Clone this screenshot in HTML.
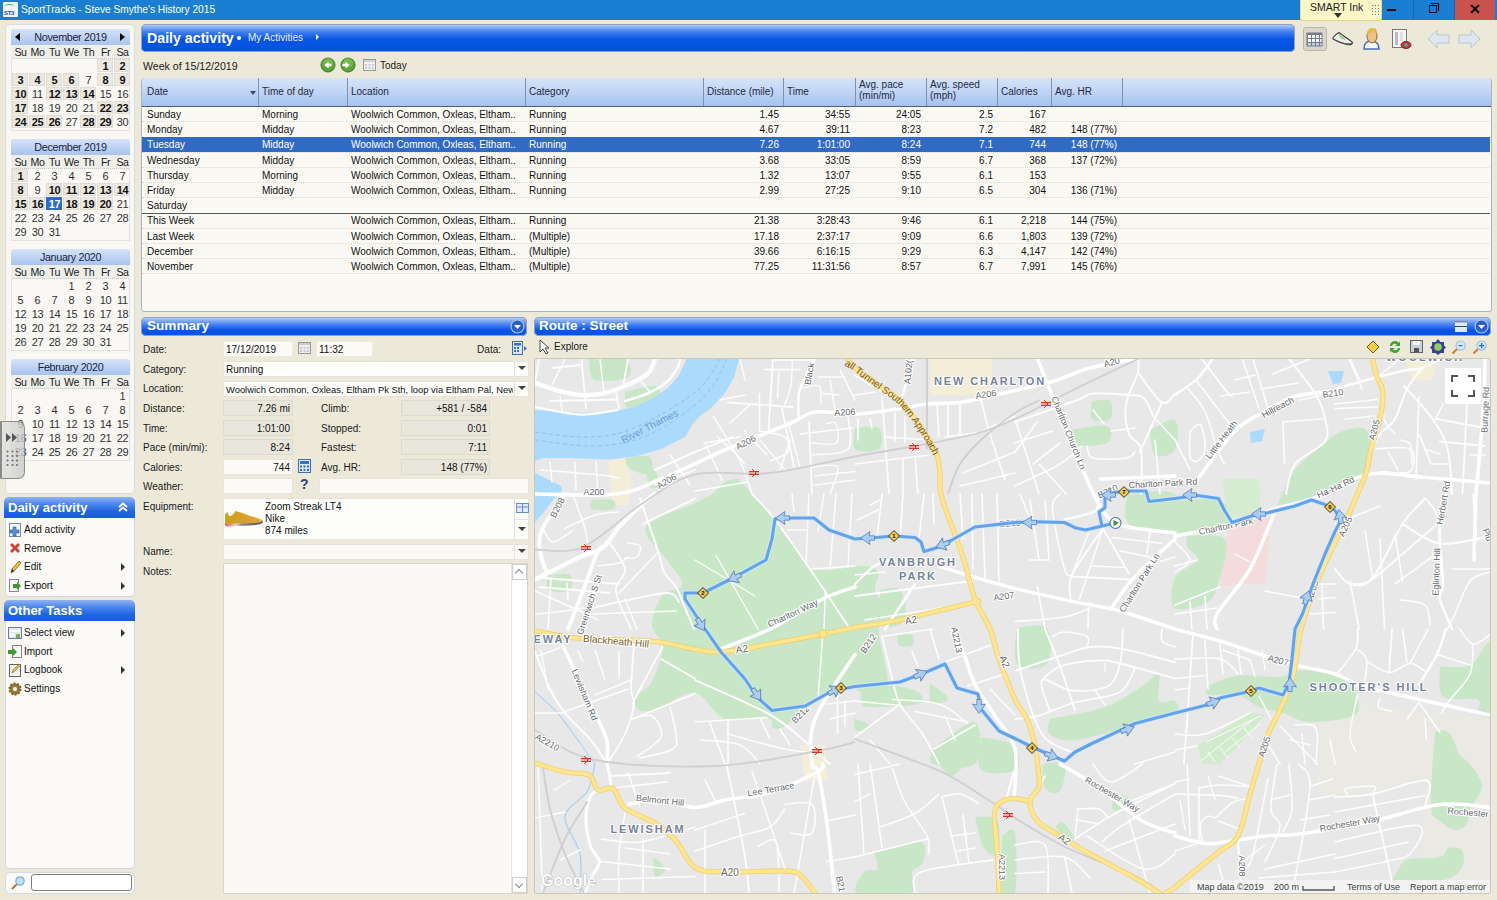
<!DOCTYPE html>
<html><head><meta charset="utf-8"><style>
html,body{margin:0;padding:0}
body{width:1497px;height:900px;overflow:hidden;position:relative;background:#ece9d9;font-family:"Liberation Sans",sans-serif;font-size:10px}
body div{position:absolute}
.t{white-space:nowrap}
svg{display:block}
</style></head><body>
<div style="left:0px;top:0px;width:1497px;height:20px;background:#1a7fd2"></div>
<div style="left:3px;top:2px;width:15px;height:15px;background:#eef3f8;border-radius:1px"><div style="position:absolute;left:1px;top:8px;font:bold 6px 'Liberation Sans';color:#1f4e9c;letter-spacing:-0.3px">ST3</div><div style="position:absolute;left:2px;top:2px;width:9px;height:4px;border-top:1px solid #4a8;border-radius:50% 50% 0 0"></div></div>
<div class="t" style="left:21px;top:3px;color:#fff;font-size:10.2px;line-height:13px">SportTracks - Steve Smythe's History 2015</div>
<div style="left:1300px;top:0px;width:82px;height:21px;background:#fdf6c6;border:1px solid #e6d98a;border-top:none;border-radius:0 0 3px 3px;box-sizing:border-box"><div style="position:absolute;left:9px;top:1px;font-size:10.5px;color:#222;line-height:13px">SMART Ink</div><div style="position:absolute;left:33px;top:13px;width:0;height:0;border-left:4px solid transparent;border-right:4px solid transparent;border-top:5px solid #333"></div><svg width="8" height="10" style="position:absolute;left:71px;top:5px"><g fill="#777"><rect x="0" y="0" width="1" height="1"/><rect x="3" y="0" width="1" height="1"/><rect x="6" y="0" width="1" height="1"/><rect x="0" y="3" width="1" height="1"/><rect x="3" y="3" width="1" height="1"/><rect x="6" y="3" width="1" height="1"/><rect x="0" y="6" width="1" height="1"/><rect x="3" y="6" width="1" height="1"/><rect x="6" y="6" width="1" height="1"/><rect x="0" y="9" width="1" height="1"/><rect x="3" y="9" width="1" height="1"/><rect x="6" y="9" width="1" height="1"/></g></svg></div>
<div style="left:1387px;top:9px;width:9px;height:2px;background:#000"></div>
<div style="left:1413px;top:0px;width:1px;height:20px;background:#1668b0"></div>
<div style="left:1429px;top:5px;width:8px;height:8px;border:1px solid #000;box-sizing:border-box;background:#1a7fd2"></div>
<div style="left:1431px;top:3px;width:8px;height:8px;border:1px solid #000;border-left:none;border-bottom:none;box-sizing:border-box"></div>
<div style="left:1454px;top:0px;width:1px;height:20px;background:#1668b0"></div>
<div style="left:1455px;top:0px;width:40px;height:20px;background:#c9524d"></div>
<div class="t" style="left:1469px;top:1px;font:bold 14px 'Liberation Sans';color:#000;line-height:16px">&#x2715;</div>
<div style="left:5px;top:24px;width:130px;height:470px;background:#f8f7f2;border:1px solid #d7dce6;border-radius:4px;box-sizing:border-box"></div>
<div style="left:11px;top:29px;width:119px;height:16px;background:linear-gradient(#d6e3f8,#a8c3ef);border-radius:3px 3px 0 0"></div>
<div class="t" style="left:11px;top:31px;width:119px;text-align:center;color:#1b1f3a;font-size:10.8px;line-height:12px;letter-spacing:-0.35px">November 2019</div>
<div style="left:15px;top:33px;width:0px;height:0px;border-top:4px solid transparent;border-bottom:4px solid transparent;border-right:5px solid #000"></div>
<div style="left:120px;top:33px;width:0px;height:0px;border-top:4px solid transparent;border-bottom:4px solid transparent;border-left:5px solid #000"></div>
<div style="left:11px;top:45px;width:119px;height:86px;background:#f9f8f4;border:1px solid #e2e2e0;border-top:none;box-sizing:border-box"></div>
<div style="left:11px;top:45px;width:119px;height:14px;background:#eeeeea"></div>
<div style="left:12px;top:58px;width:117px;height:1px;border-top:1px dotted #c8c8c8"></div>
<div class="t" style="left:12px;top:46px;width:17px;text-align:center;color:#222;font-size:10.6px;line-height:12px;letter-spacing:-0.4px">Su</div>
<div class="t" style="left:29px;top:46px;width:17px;text-align:center;color:#222;font-size:10.6px;line-height:12px;letter-spacing:-0.4px">Mo</div>
<div class="t" style="left:46px;top:46px;width:17px;text-align:center;color:#222;font-size:10.6px;line-height:12px;letter-spacing:-0.4px">Tu</div>
<div class="t" style="left:63px;top:46px;width:17px;text-align:center;color:#222;font-size:10.6px;line-height:12px;letter-spacing:-0.4px">We</div>
<div class="t" style="left:80px;top:46px;width:17px;text-align:center;color:#222;font-size:10.6px;line-height:12px;letter-spacing:-0.4px">Th</div>
<div class="t" style="left:97px;top:46px;width:17px;text-align:center;color:#222;font-size:10.6px;line-height:12px;letter-spacing:-0.4px">Fr</div>
<div class="t" style="left:114px;top:46px;width:17px;text-align:center;color:#222;font-size:10.6px;line-height:12px;letter-spacing:-0.4px">Sa</div>
<div style="left:97px;top:59px;width:16px;height:13px;background:#ebe9df;border:1px solid #e0ded3;box-sizing:border-box"></div>
<div class="t" style="left:97px;top:59px;width:17px;text-align:center;font-size:11px;line-height:13px;top:60px;letter-spacing:-0.3px;color:#111;font-weight:bold">1</div>
<div style="left:114px;top:59px;width:16px;height:13px;background:#ebe9df;border:1px solid #e0ded3;box-sizing:border-box"></div>
<div class="t" style="left:114px;top:59px;width:17px;text-align:center;font-size:11px;line-height:13px;top:60px;letter-spacing:-0.3px;color:#111;font-weight:bold">2</div>
<div style="left:12px;top:73px;width:16px;height:13px;background:#ebe9df;border:1px solid #e0ded3;box-sizing:border-box"></div>
<div class="t" style="left:12px;top:73px;width:17px;text-align:center;font-size:11px;line-height:13px;top:74px;letter-spacing:-0.3px;color:#111;font-weight:bold">3</div>
<div style="left:29px;top:73px;width:16px;height:13px;background:#ebe9df;border:1px solid #e0ded3;box-sizing:border-box"></div>
<div class="t" style="left:29px;top:73px;width:17px;text-align:center;font-size:11px;line-height:13px;top:74px;letter-spacing:-0.3px;color:#111;font-weight:bold">4</div>
<div style="left:46px;top:73px;width:16px;height:13px;background:#ebe9df;border:1px solid #e0ded3;box-sizing:border-box"></div>
<div class="t" style="left:46px;top:73px;width:17px;text-align:center;font-size:11px;line-height:13px;top:74px;letter-spacing:-0.3px;color:#111;font-weight:bold">5</div>
<div style="left:63px;top:73px;width:16px;height:13px;background:#ebe9df;border:1px solid #e0ded3;box-sizing:border-box"></div>
<div class="t" style="left:63px;top:73px;width:17px;text-align:center;font-size:11px;line-height:13px;top:74px;letter-spacing:-0.3px;color:#111;font-weight:bold">6</div>
<div class="t" style="left:80px;top:73px;width:17px;text-align:center;font-size:11px;line-height:13px;top:74px;letter-spacing:-0.3px;color:#333">7</div>
<div style="left:97px;top:73px;width:16px;height:13px;background:#ebe9df;border:1px solid #e0ded3;box-sizing:border-box"></div>
<div class="t" style="left:97px;top:73px;width:17px;text-align:center;font-size:11px;line-height:13px;top:74px;letter-spacing:-0.3px;color:#111;font-weight:bold">8</div>
<div style="left:114px;top:73px;width:16px;height:13px;background:#ebe9df;border:1px solid #e0ded3;box-sizing:border-box"></div>
<div class="t" style="left:114px;top:73px;width:17px;text-align:center;font-size:11px;line-height:13px;top:74px;letter-spacing:-0.3px;color:#111;font-weight:bold">9</div>
<div style="left:12px;top:87px;width:16px;height:13px;background:#ebe9df;border:1px solid #e0ded3;box-sizing:border-box"></div>
<div class="t" style="left:12px;top:87px;width:17px;text-align:center;font-size:11px;line-height:13px;top:88px;letter-spacing:-0.3px;color:#111;font-weight:bold">10</div>
<div class="t" style="left:29px;top:87px;width:17px;text-align:center;font-size:11px;line-height:13px;top:88px;letter-spacing:-0.3px;color:#333">11</div>
<div style="left:46px;top:87px;width:16px;height:13px;background:#ebe9df;border:1px solid #e0ded3;box-sizing:border-box"></div>
<div class="t" style="left:46px;top:87px;width:17px;text-align:center;font-size:11px;line-height:13px;top:88px;letter-spacing:-0.3px;color:#111;font-weight:bold">12</div>
<div style="left:63px;top:87px;width:16px;height:13px;background:#ebe9df;border:1px solid #e0ded3;box-sizing:border-box"></div>
<div class="t" style="left:63px;top:87px;width:17px;text-align:center;font-size:11px;line-height:13px;top:88px;letter-spacing:-0.3px;color:#111;font-weight:bold">13</div>
<div style="left:80px;top:87px;width:16px;height:13px;background:#ebe9df;border:1px solid #e0ded3;box-sizing:border-box"></div>
<div class="t" style="left:80px;top:87px;width:17px;text-align:center;font-size:11px;line-height:13px;top:88px;letter-spacing:-0.3px;color:#111;font-weight:bold">14</div>
<div class="t" style="left:97px;top:87px;width:17px;text-align:center;font-size:11px;line-height:13px;top:88px;letter-spacing:-0.3px;color:#333">15</div>
<div class="t" style="left:114px;top:87px;width:17px;text-align:center;font-size:11px;line-height:13px;top:88px;letter-spacing:-0.3px;color:#333">16</div>
<div style="left:12px;top:101px;width:16px;height:13px;background:#ebe9df;border:1px solid #e0ded3;box-sizing:border-box"></div>
<div class="t" style="left:12px;top:101px;width:17px;text-align:center;font-size:11px;line-height:13px;top:102px;letter-spacing:-0.3px;color:#111;font-weight:bold">17</div>
<div class="t" style="left:29px;top:101px;width:17px;text-align:center;font-size:11px;line-height:13px;top:102px;letter-spacing:-0.3px;color:#333">18</div>
<div class="t" style="left:46px;top:101px;width:17px;text-align:center;font-size:11px;line-height:13px;top:102px;letter-spacing:-0.3px;color:#333">19</div>
<div class="t" style="left:63px;top:101px;width:17px;text-align:center;font-size:11px;line-height:13px;top:102px;letter-spacing:-0.3px;color:#333">20</div>
<div class="t" style="left:80px;top:101px;width:17px;text-align:center;font-size:11px;line-height:13px;top:102px;letter-spacing:-0.3px;color:#333">21</div>
<div style="left:97px;top:101px;width:16px;height:13px;background:#ebe9df;border:1px solid #e0ded3;box-sizing:border-box"></div>
<div class="t" style="left:97px;top:101px;width:17px;text-align:center;font-size:11px;line-height:13px;top:102px;letter-spacing:-0.3px;color:#111;font-weight:bold">22</div>
<div style="left:114px;top:101px;width:16px;height:13px;background:#ebe9df;border:1px solid #e0ded3;box-sizing:border-box"></div>
<div class="t" style="left:114px;top:101px;width:17px;text-align:center;font-size:11px;line-height:13px;top:102px;letter-spacing:-0.3px;color:#111;font-weight:bold">23</div>
<div style="left:12px;top:115px;width:16px;height:13px;background:#ebe9df;border:1px solid #e0ded3;box-sizing:border-box"></div>
<div class="t" style="left:12px;top:115px;width:17px;text-align:center;font-size:11px;line-height:13px;top:116px;letter-spacing:-0.3px;color:#111;font-weight:bold">24</div>
<div style="left:29px;top:115px;width:16px;height:13px;background:#ebe9df;border:1px solid #e0ded3;box-sizing:border-box"></div>
<div class="t" style="left:29px;top:115px;width:17px;text-align:center;font-size:11px;line-height:13px;top:116px;letter-spacing:-0.3px;color:#111;font-weight:bold">25</div>
<div style="left:46px;top:115px;width:16px;height:13px;background:#ebe9df;border:1px solid #e0ded3;box-sizing:border-box"></div>
<div class="t" style="left:46px;top:115px;width:17px;text-align:center;font-size:11px;line-height:13px;top:116px;letter-spacing:-0.3px;color:#111;font-weight:bold">26</div>
<div class="t" style="left:63px;top:115px;width:17px;text-align:center;font-size:11px;line-height:13px;top:116px;letter-spacing:-0.3px;color:#333">27</div>
<div style="left:80px;top:115px;width:16px;height:13px;background:#ebe9df;border:1px solid #e0ded3;box-sizing:border-box"></div>
<div class="t" style="left:80px;top:115px;width:17px;text-align:center;font-size:11px;line-height:13px;top:116px;letter-spacing:-0.3px;color:#111;font-weight:bold">28</div>
<div style="left:97px;top:115px;width:16px;height:13px;background:#ebe9df;border:1px solid #e0ded3;box-sizing:border-box"></div>
<div class="t" style="left:97px;top:115px;width:17px;text-align:center;font-size:11px;line-height:13px;top:116px;letter-spacing:-0.3px;color:#111;font-weight:bold">29</div>
<div class="t" style="left:114px;top:115px;width:17px;text-align:center;font-size:11px;line-height:13px;top:116px;letter-spacing:-0.3px;color:#333">30</div>
<div style="left:11px;top:139px;width:119px;height:16px;background:linear-gradient(#d6e3f8,#a8c3ef);border-radius:3px 3px 0 0"></div>
<div class="t" style="left:11px;top:141px;width:119px;text-align:center;color:#1b1f3a;font-size:10.8px;line-height:12px;letter-spacing:-0.35px">December 2019</div>
<div style="left:11px;top:155px;width:119px;height:86px;background:#f9f8f4;border:1px solid #e2e2e0;border-top:none;box-sizing:border-box"></div>
<div style="left:11px;top:155px;width:119px;height:14px;background:#eeeeea"></div>
<div style="left:12px;top:168px;width:117px;height:1px;border-top:1px dotted #c8c8c8"></div>
<div class="t" style="left:12px;top:156px;width:17px;text-align:center;color:#222;font-size:10.6px;line-height:12px;letter-spacing:-0.4px">Su</div>
<div class="t" style="left:29px;top:156px;width:17px;text-align:center;color:#222;font-size:10.6px;line-height:12px;letter-spacing:-0.4px">Mo</div>
<div class="t" style="left:46px;top:156px;width:17px;text-align:center;color:#222;font-size:10.6px;line-height:12px;letter-spacing:-0.4px">Tu</div>
<div class="t" style="left:63px;top:156px;width:17px;text-align:center;color:#222;font-size:10.6px;line-height:12px;letter-spacing:-0.4px">We</div>
<div class="t" style="left:80px;top:156px;width:17px;text-align:center;color:#222;font-size:10.6px;line-height:12px;letter-spacing:-0.4px">Th</div>
<div class="t" style="left:97px;top:156px;width:17px;text-align:center;color:#222;font-size:10.6px;line-height:12px;letter-spacing:-0.4px">Fr</div>
<div class="t" style="left:114px;top:156px;width:17px;text-align:center;color:#222;font-size:10.6px;line-height:12px;letter-spacing:-0.4px">Sa</div>
<div style="left:12px;top:169px;width:16px;height:13px;background:#ebe9df;border:1px solid #e0ded3;box-sizing:border-box"></div>
<div class="t" style="left:12px;top:169px;width:17px;text-align:center;font-size:11px;line-height:13px;top:170px;letter-spacing:-0.3px;color:#111;font-weight:bold">1</div>
<div class="t" style="left:29px;top:169px;width:17px;text-align:center;font-size:11px;line-height:13px;top:170px;letter-spacing:-0.3px;color:#333">2</div>
<div class="t" style="left:46px;top:169px;width:17px;text-align:center;font-size:11px;line-height:13px;top:170px;letter-spacing:-0.3px;color:#333">3</div>
<div class="t" style="left:63px;top:169px;width:17px;text-align:center;font-size:11px;line-height:13px;top:170px;letter-spacing:-0.3px;color:#333">4</div>
<div class="t" style="left:80px;top:169px;width:17px;text-align:center;font-size:11px;line-height:13px;top:170px;letter-spacing:-0.3px;color:#333">5</div>
<div class="t" style="left:97px;top:169px;width:17px;text-align:center;font-size:11px;line-height:13px;top:170px;letter-spacing:-0.3px;color:#333">6</div>
<div class="t" style="left:114px;top:169px;width:17px;text-align:center;font-size:11px;line-height:13px;top:170px;letter-spacing:-0.3px;color:#333">7</div>
<div style="left:12px;top:183px;width:16px;height:13px;background:#ebe9df;border:1px solid #e0ded3;box-sizing:border-box"></div>
<div class="t" style="left:12px;top:183px;width:17px;text-align:center;font-size:11px;line-height:13px;top:184px;letter-spacing:-0.3px;color:#111;font-weight:bold">8</div>
<div class="t" style="left:29px;top:183px;width:17px;text-align:center;font-size:11px;line-height:13px;top:184px;letter-spacing:-0.3px;color:#333">9</div>
<div style="left:46px;top:183px;width:16px;height:13px;background:#ebe9df;border:1px solid #e0ded3;box-sizing:border-box"></div>
<div class="t" style="left:46px;top:183px;width:17px;text-align:center;font-size:11px;line-height:13px;top:184px;letter-spacing:-0.3px;color:#111;font-weight:bold">10</div>
<div style="left:63px;top:183px;width:16px;height:13px;background:#ebe9df;border:1px solid #e0ded3;box-sizing:border-box"></div>
<div class="t" style="left:63px;top:183px;width:17px;text-align:center;font-size:11px;line-height:13px;top:184px;letter-spacing:-0.3px;color:#111;font-weight:bold">11</div>
<div style="left:80px;top:183px;width:16px;height:13px;background:#ebe9df;border:1px solid #e0ded3;box-sizing:border-box"></div>
<div class="t" style="left:80px;top:183px;width:17px;text-align:center;font-size:11px;line-height:13px;top:184px;letter-spacing:-0.3px;color:#111;font-weight:bold">12</div>
<div style="left:97px;top:183px;width:16px;height:13px;background:#ebe9df;border:1px solid #e0ded3;box-sizing:border-box"></div>
<div class="t" style="left:97px;top:183px;width:17px;text-align:center;font-size:11px;line-height:13px;top:184px;letter-spacing:-0.3px;color:#111;font-weight:bold">13</div>
<div style="left:114px;top:183px;width:16px;height:13px;background:#ebe9df;border:1px solid #e0ded3;box-sizing:border-box"></div>
<div class="t" style="left:114px;top:183px;width:17px;text-align:center;font-size:11px;line-height:13px;top:184px;letter-spacing:-0.3px;color:#111;font-weight:bold">14</div>
<div style="left:12px;top:197px;width:16px;height:13px;background:#ebe9df;border:1px solid #e0ded3;box-sizing:border-box"></div>
<div class="t" style="left:12px;top:197px;width:17px;text-align:center;font-size:11px;line-height:13px;top:198px;letter-spacing:-0.3px;color:#111;font-weight:bold">15</div>
<div style="left:29px;top:197px;width:16px;height:13px;background:#ebe9df;border:1px solid #e0ded3;box-sizing:border-box"></div>
<div class="t" style="left:29px;top:197px;width:17px;text-align:center;font-size:11px;line-height:13px;top:198px;letter-spacing:-0.3px;color:#111;font-weight:bold">16</div>
<div style="left:46px;top:197px;width:16px;height:13px;background:#3169c6"></div>
<div class="t" style="left:46px;top:197px;width:17px;text-align:center;font-size:11px;line-height:13px;top:198px;letter-spacing:-0.3px;color:#fff;font-weight:bold">17</div>
<div style="left:63px;top:197px;width:16px;height:13px;background:#ebe9df;border:1px solid #e0ded3;box-sizing:border-box"></div>
<div class="t" style="left:63px;top:197px;width:17px;text-align:center;font-size:11px;line-height:13px;top:198px;letter-spacing:-0.3px;color:#111;font-weight:bold">18</div>
<div style="left:80px;top:197px;width:16px;height:13px;background:#ebe9df;border:1px solid #e0ded3;box-sizing:border-box"></div>
<div class="t" style="left:80px;top:197px;width:17px;text-align:center;font-size:11px;line-height:13px;top:198px;letter-spacing:-0.3px;color:#111;font-weight:bold">19</div>
<div style="left:97px;top:197px;width:16px;height:13px;background:#ebe9df;border:1px solid #e0ded3;box-sizing:border-box"></div>
<div class="t" style="left:97px;top:197px;width:17px;text-align:center;font-size:11px;line-height:13px;top:198px;letter-spacing:-0.3px;color:#111;font-weight:bold">20</div>
<div class="t" style="left:114px;top:197px;width:17px;text-align:center;font-size:11px;line-height:13px;top:198px;letter-spacing:-0.3px;color:#333">21</div>
<div class="t" style="left:12px;top:211px;width:17px;text-align:center;font-size:11px;line-height:13px;top:212px;letter-spacing:-0.3px;color:#333">22</div>
<div class="t" style="left:29px;top:211px;width:17px;text-align:center;font-size:11px;line-height:13px;top:212px;letter-spacing:-0.3px;color:#333">23</div>
<div class="t" style="left:46px;top:211px;width:17px;text-align:center;font-size:11px;line-height:13px;top:212px;letter-spacing:-0.3px;color:#333">24</div>
<div class="t" style="left:63px;top:211px;width:17px;text-align:center;font-size:11px;line-height:13px;top:212px;letter-spacing:-0.3px;color:#333">25</div>
<div class="t" style="left:80px;top:211px;width:17px;text-align:center;font-size:11px;line-height:13px;top:212px;letter-spacing:-0.3px;color:#333">26</div>
<div class="t" style="left:97px;top:211px;width:17px;text-align:center;font-size:11px;line-height:13px;top:212px;letter-spacing:-0.3px;color:#333">27</div>
<div class="t" style="left:114px;top:211px;width:17px;text-align:center;font-size:11px;line-height:13px;top:212px;letter-spacing:-0.3px;color:#333">28</div>
<div class="t" style="left:12px;top:225px;width:17px;text-align:center;font-size:11px;line-height:13px;top:226px;letter-spacing:-0.3px;color:#333">29</div>
<div class="t" style="left:29px;top:225px;width:17px;text-align:center;font-size:11px;line-height:13px;top:226px;letter-spacing:-0.3px;color:#333">30</div>
<div class="t" style="left:46px;top:225px;width:17px;text-align:center;font-size:11px;line-height:13px;top:226px;letter-spacing:-0.3px;color:#333">31</div>
<div style="left:11px;top:249px;width:119px;height:16px;background:linear-gradient(#d6e3f8,#a8c3ef);border-radius:3px 3px 0 0"></div>
<div class="t" style="left:11px;top:251px;width:119px;text-align:center;color:#1b1f3a;font-size:10.8px;line-height:12px;letter-spacing:-0.35px">January 2020</div>
<div style="left:11px;top:265px;width:119px;height:86px;background:#f9f8f4;border:1px solid #e2e2e0;border-top:none;box-sizing:border-box"></div>
<div style="left:11px;top:265px;width:119px;height:14px;background:#eeeeea"></div>
<div style="left:12px;top:278px;width:117px;height:1px;border-top:1px dotted #c8c8c8"></div>
<div class="t" style="left:12px;top:266px;width:17px;text-align:center;color:#222;font-size:10.6px;line-height:12px;letter-spacing:-0.4px">Su</div>
<div class="t" style="left:29px;top:266px;width:17px;text-align:center;color:#222;font-size:10.6px;line-height:12px;letter-spacing:-0.4px">Mo</div>
<div class="t" style="left:46px;top:266px;width:17px;text-align:center;color:#222;font-size:10.6px;line-height:12px;letter-spacing:-0.4px">Tu</div>
<div class="t" style="left:63px;top:266px;width:17px;text-align:center;color:#222;font-size:10.6px;line-height:12px;letter-spacing:-0.4px">We</div>
<div class="t" style="left:80px;top:266px;width:17px;text-align:center;color:#222;font-size:10.6px;line-height:12px;letter-spacing:-0.4px">Th</div>
<div class="t" style="left:97px;top:266px;width:17px;text-align:center;color:#222;font-size:10.6px;line-height:12px;letter-spacing:-0.4px">Fr</div>
<div class="t" style="left:114px;top:266px;width:17px;text-align:center;color:#222;font-size:10.6px;line-height:12px;letter-spacing:-0.4px">Sa</div>
<div class="t" style="left:63px;top:279px;width:17px;text-align:center;font-size:11px;line-height:13px;top:280px;letter-spacing:-0.3px;color:#333">1</div>
<div class="t" style="left:80px;top:279px;width:17px;text-align:center;font-size:11px;line-height:13px;top:280px;letter-spacing:-0.3px;color:#333">2</div>
<div class="t" style="left:97px;top:279px;width:17px;text-align:center;font-size:11px;line-height:13px;top:280px;letter-spacing:-0.3px;color:#333">3</div>
<div class="t" style="left:114px;top:279px;width:17px;text-align:center;font-size:11px;line-height:13px;top:280px;letter-spacing:-0.3px;color:#333">4</div>
<div class="t" style="left:12px;top:293px;width:17px;text-align:center;font-size:11px;line-height:13px;top:294px;letter-spacing:-0.3px;color:#333">5</div>
<div class="t" style="left:29px;top:293px;width:17px;text-align:center;font-size:11px;line-height:13px;top:294px;letter-spacing:-0.3px;color:#333">6</div>
<div class="t" style="left:46px;top:293px;width:17px;text-align:center;font-size:11px;line-height:13px;top:294px;letter-spacing:-0.3px;color:#333">7</div>
<div class="t" style="left:63px;top:293px;width:17px;text-align:center;font-size:11px;line-height:13px;top:294px;letter-spacing:-0.3px;color:#333">8</div>
<div class="t" style="left:80px;top:293px;width:17px;text-align:center;font-size:11px;line-height:13px;top:294px;letter-spacing:-0.3px;color:#333">9</div>
<div class="t" style="left:97px;top:293px;width:17px;text-align:center;font-size:11px;line-height:13px;top:294px;letter-spacing:-0.3px;color:#333">10</div>
<div class="t" style="left:114px;top:293px;width:17px;text-align:center;font-size:11px;line-height:13px;top:294px;letter-spacing:-0.3px;color:#333">11</div>
<div class="t" style="left:12px;top:307px;width:17px;text-align:center;font-size:11px;line-height:13px;top:308px;letter-spacing:-0.3px;color:#333">12</div>
<div class="t" style="left:29px;top:307px;width:17px;text-align:center;font-size:11px;line-height:13px;top:308px;letter-spacing:-0.3px;color:#333">13</div>
<div class="t" style="left:46px;top:307px;width:17px;text-align:center;font-size:11px;line-height:13px;top:308px;letter-spacing:-0.3px;color:#333">14</div>
<div class="t" style="left:63px;top:307px;width:17px;text-align:center;font-size:11px;line-height:13px;top:308px;letter-spacing:-0.3px;color:#333">15</div>
<div class="t" style="left:80px;top:307px;width:17px;text-align:center;font-size:11px;line-height:13px;top:308px;letter-spacing:-0.3px;color:#333">16</div>
<div class="t" style="left:97px;top:307px;width:17px;text-align:center;font-size:11px;line-height:13px;top:308px;letter-spacing:-0.3px;color:#333">17</div>
<div class="t" style="left:114px;top:307px;width:17px;text-align:center;font-size:11px;line-height:13px;top:308px;letter-spacing:-0.3px;color:#333">18</div>
<div class="t" style="left:12px;top:321px;width:17px;text-align:center;font-size:11px;line-height:13px;top:322px;letter-spacing:-0.3px;color:#333">19</div>
<div class="t" style="left:29px;top:321px;width:17px;text-align:center;font-size:11px;line-height:13px;top:322px;letter-spacing:-0.3px;color:#333">20</div>
<div class="t" style="left:46px;top:321px;width:17px;text-align:center;font-size:11px;line-height:13px;top:322px;letter-spacing:-0.3px;color:#333">21</div>
<div class="t" style="left:63px;top:321px;width:17px;text-align:center;font-size:11px;line-height:13px;top:322px;letter-spacing:-0.3px;color:#333">22</div>
<div class="t" style="left:80px;top:321px;width:17px;text-align:center;font-size:11px;line-height:13px;top:322px;letter-spacing:-0.3px;color:#333">23</div>
<div class="t" style="left:97px;top:321px;width:17px;text-align:center;font-size:11px;line-height:13px;top:322px;letter-spacing:-0.3px;color:#333">24</div>
<div class="t" style="left:114px;top:321px;width:17px;text-align:center;font-size:11px;line-height:13px;top:322px;letter-spacing:-0.3px;color:#333">25</div>
<div class="t" style="left:12px;top:335px;width:17px;text-align:center;font-size:11px;line-height:13px;top:336px;letter-spacing:-0.3px;color:#333">26</div>
<div class="t" style="left:29px;top:335px;width:17px;text-align:center;font-size:11px;line-height:13px;top:336px;letter-spacing:-0.3px;color:#333">27</div>
<div class="t" style="left:46px;top:335px;width:17px;text-align:center;font-size:11px;line-height:13px;top:336px;letter-spacing:-0.3px;color:#333">28</div>
<div class="t" style="left:63px;top:335px;width:17px;text-align:center;font-size:11px;line-height:13px;top:336px;letter-spacing:-0.3px;color:#333">29</div>
<div class="t" style="left:80px;top:335px;width:17px;text-align:center;font-size:11px;line-height:13px;top:336px;letter-spacing:-0.3px;color:#333">30</div>
<div class="t" style="left:97px;top:335px;width:17px;text-align:center;font-size:11px;line-height:13px;top:336px;letter-spacing:-0.3px;color:#333">31</div>
<div style="left:11px;top:359px;width:119px;height:16px;background:linear-gradient(#d6e3f8,#a8c3ef);border-radius:3px 3px 0 0"></div>
<div class="t" style="left:11px;top:361px;width:119px;text-align:center;color:#1b1f3a;font-size:10.8px;line-height:12px;letter-spacing:-0.35px">February 2020</div>
<div style="left:11px;top:375px;width:119px;height:86px;background:#f9f8f4;border:1px solid #e2e2e0;border-top:none;box-sizing:border-box"></div>
<div style="left:11px;top:375px;width:119px;height:14px;background:#eeeeea"></div>
<div style="left:12px;top:388px;width:117px;height:1px;border-top:1px dotted #c8c8c8"></div>
<div class="t" style="left:12px;top:376px;width:17px;text-align:center;color:#222;font-size:10.6px;line-height:12px;letter-spacing:-0.4px">Su</div>
<div class="t" style="left:29px;top:376px;width:17px;text-align:center;color:#222;font-size:10.6px;line-height:12px;letter-spacing:-0.4px">Mo</div>
<div class="t" style="left:46px;top:376px;width:17px;text-align:center;color:#222;font-size:10.6px;line-height:12px;letter-spacing:-0.4px">Tu</div>
<div class="t" style="left:63px;top:376px;width:17px;text-align:center;color:#222;font-size:10.6px;line-height:12px;letter-spacing:-0.4px">We</div>
<div class="t" style="left:80px;top:376px;width:17px;text-align:center;color:#222;font-size:10.6px;line-height:12px;letter-spacing:-0.4px">Th</div>
<div class="t" style="left:97px;top:376px;width:17px;text-align:center;color:#222;font-size:10.6px;line-height:12px;letter-spacing:-0.4px">Fr</div>
<div class="t" style="left:114px;top:376px;width:17px;text-align:center;color:#222;font-size:10.6px;line-height:12px;letter-spacing:-0.4px">Sa</div>
<div class="t" style="left:114px;top:389px;width:17px;text-align:center;font-size:11px;line-height:13px;top:390px;letter-spacing:-0.3px;color:#333">1</div>
<div class="t" style="left:12px;top:403px;width:17px;text-align:center;font-size:11px;line-height:13px;top:404px;letter-spacing:-0.3px;color:#333">2</div>
<div class="t" style="left:29px;top:403px;width:17px;text-align:center;font-size:11px;line-height:13px;top:404px;letter-spacing:-0.3px;color:#333">3</div>
<div class="t" style="left:46px;top:403px;width:17px;text-align:center;font-size:11px;line-height:13px;top:404px;letter-spacing:-0.3px;color:#333">4</div>
<div class="t" style="left:63px;top:403px;width:17px;text-align:center;font-size:11px;line-height:13px;top:404px;letter-spacing:-0.3px;color:#333">5</div>
<div class="t" style="left:80px;top:403px;width:17px;text-align:center;font-size:11px;line-height:13px;top:404px;letter-spacing:-0.3px;color:#333">6</div>
<div class="t" style="left:97px;top:403px;width:17px;text-align:center;font-size:11px;line-height:13px;top:404px;letter-spacing:-0.3px;color:#333">7</div>
<div class="t" style="left:114px;top:403px;width:17px;text-align:center;font-size:11px;line-height:13px;top:404px;letter-spacing:-0.3px;color:#333">8</div>
<div class="t" style="left:12px;top:417px;width:17px;text-align:center;font-size:11px;line-height:13px;top:418px;letter-spacing:-0.3px;color:#333">9</div>
<div class="t" style="left:29px;top:417px;width:17px;text-align:center;font-size:11px;line-height:13px;top:418px;letter-spacing:-0.3px;color:#333">10</div>
<div class="t" style="left:46px;top:417px;width:17px;text-align:center;font-size:11px;line-height:13px;top:418px;letter-spacing:-0.3px;color:#333">11</div>
<div class="t" style="left:63px;top:417px;width:17px;text-align:center;font-size:11px;line-height:13px;top:418px;letter-spacing:-0.3px;color:#333">12</div>
<div class="t" style="left:80px;top:417px;width:17px;text-align:center;font-size:11px;line-height:13px;top:418px;letter-spacing:-0.3px;color:#333">13</div>
<div class="t" style="left:97px;top:417px;width:17px;text-align:center;font-size:11px;line-height:13px;top:418px;letter-spacing:-0.3px;color:#333">14</div>
<div class="t" style="left:114px;top:417px;width:17px;text-align:center;font-size:11px;line-height:13px;top:418px;letter-spacing:-0.3px;color:#333">15</div>
<div class="t" style="left:12px;top:431px;width:17px;text-align:center;font-size:11px;line-height:13px;top:432px;letter-spacing:-0.3px;color:#333">16</div>
<div class="t" style="left:29px;top:431px;width:17px;text-align:center;font-size:11px;line-height:13px;top:432px;letter-spacing:-0.3px;color:#333">17</div>
<div class="t" style="left:46px;top:431px;width:17px;text-align:center;font-size:11px;line-height:13px;top:432px;letter-spacing:-0.3px;color:#333">18</div>
<div class="t" style="left:63px;top:431px;width:17px;text-align:center;font-size:11px;line-height:13px;top:432px;letter-spacing:-0.3px;color:#333">19</div>
<div class="t" style="left:80px;top:431px;width:17px;text-align:center;font-size:11px;line-height:13px;top:432px;letter-spacing:-0.3px;color:#333">20</div>
<div class="t" style="left:97px;top:431px;width:17px;text-align:center;font-size:11px;line-height:13px;top:432px;letter-spacing:-0.3px;color:#333">21</div>
<div class="t" style="left:114px;top:431px;width:17px;text-align:center;font-size:11px;line-height:13px;top:432px;letter-spacing:-0.3px;color:#333">22</div>
<div class="t" style="left:12px;top:445px;width:17px;text-align:center;font-size:11px;line-height:13px;top:446px;letter-spacing:-0.3px;color:#333">23</div>
<div class="t" style="left:29px;top:445px;width:17px;text-align:center;font-size:11px;line-height:13px;top:446px;letter-spacing:-0.3px;color:#333">24</div>
<div class="t" style="left:46px;top:445px;width:17px;text-align:center;font-size:11px;line-height:13px;top:446px;letter-spacing:-0.3px;color:#333">25</div>
<div class="t" style="left:63px;top:445px;width:17px;text-align:center;font-size:11px;line-height:13px;top:446px;letter-spacing:-0.3px;color:#333">26</div>
<div class="t" style="left:80px;top:445px;width:17px;text-align:center;font-size:11px;line-height:13px;top:446px;letter-spacing:-0.3px;color:#333">27</div>
<div class="t" style="left:97px;top:445px;width:17px;text-align:center;font-size:11px;line-height:13px;top:446px;letter-spacing:-0.3px;color:#333">28</div>
<div class="t" style="left:114px;top:445px;width:17px;text-align:center;font-size:11px;line-height:13px;top:446px;letter-spacing:-0.3px;color:#333">29</div>
<div style="left:0px;top:421px;width:25px;height:58px;background:linear-gradient(90deg,rgba(225,225,225,0.75),rgba(200,200,200,0.8));border:1.5px solid #8c8c8c;border-left:2px solid #8a8a8a;border-radius:0 7px 7px 0;box-sizing:border-box"><svg width="22" height="55" style="position:absolute;left:0;top:0"><path d="M4,11 L9,15.5 L4,20Z M10,11 L15,15.5 L10,20Z" fill="#555"/><g fill="#707070"><circle cx="5.5" cy="29.5" r="1.1"/><circle cx="10.5" cy="29.5" r="1.1"/><circle cx="15" cy="29.5" r="1.1"/><circle cx="5.5" cy="34" r="1.1"/><circle cx="10.5" cy="34" r="1.1"/><circle cx="15" cy="34" r="1.1"/><circle cx="5.5" cy="38.5" r="1.1"/><circle cx="10.5" cy="38.5" r="1.1"/><circle cx="15" cy="38.5" r="1.1"/><circle cx="5.5" cy="43" r="1.1"/><circle cx="10.5" cy="43" r="1.1"/><circle cx="15" cy="43" r="1.1"/></g></svg></div>
<div style="left:5px;top:497px;width:130px;height:100px;background:#fbfaf6;border:1px solid #d5dbe5;border-radius:5px;box-sizing:border-box"></div>
<div style="left:4px;top:497px;width:131px;height:21px;background:linear-gradient(#8fb3f4 0%,#4a86ee 35%,#1f63e3 70%,#1a5ce0 100%);border-radius:5px 5px 0 0"></div>
<div class="t" style="left:8px;top:500px;color:#fff;font-size:13px;font-weight:bold;line-height:16px">Daily activity</div>
<div style="left:117px;top:501px;width:12px;height:12px;"><svg width="12" height="12"><path d="M2,6 L6,2.5 L10,6 M2,10 L6,6.5 L10,10" fill="none" stroke="#fff" stroke-width="1.8"/></svg></div>
<div style="left:8px;top:523.0px;width:14px;height:14px;"><svg width="14" height="14"><rect x="1.5" y="0.5" width="11" height="13" fill="#f4f8fc" stroke="#7a8aa0"/><path d="M5 4h3v3h3v3h-3v3h-3v-3h-3v-3h3z" fill="#5b8fd0" stroke="#2f5c9c" stroke-width="0.6"/></svg></div>
<div class="t" style="left:24px;top:524.0px;color:#111;font-size:10px;line-height:12px">Add activity</div>
<div style="left:8px;top:541.7px;width:14px;height:14px;"><svg width="14" height="14"><path d="M2 3l2-2 3 3 3-3 2 2-3 3 3 3-2 2-3-3-3 3-2-2 3-3z" fill="#d23b36"/></svg></div>
<div class="t" style="left:24px;top:542.7px;color:#111;font-size:10px;line-height:12px">Remove</div>
<div style="left:8px;top:560.4px;width:14px;height:14px;"><svg width="14" height="14"><path d="M3 13l1-4 7-8 2 2-7 8z" fill="#f0c530" stroke="#6b5a1a" stroke-width="0.8"/><path d="M3 13l1-4 2 2z" fill="#333"/></svg></div>
<div class="t" style="left:24px;top:561.4px;color:#111;font-size:10px;line-height:12px">Edit</div>
<div style="left:121px;top:563.4px;width:0px;height:0px;border-top:4px solid transparent;border-bottom:4px solid transparent;border-left:4px solid #333"></div>
<div style="left:8px;top:579.1px;width:14px;height:14px;"><svg width="14" height="14"><rect x="1.5" y="0.5" width="9" height="12" fill="#f8f8f8" stroke="#888"/><path d="M5 5h4v-2l4 4-4 4v-2h-4z" fill="#3e9a2e"/></svg></div>
<div class="t" style="left:24px;top:580.1px;color:#111;font-size:10px;line-height:12px">Export</div>
<div style="left:121px;top:582.1px;width:0px;height:0px;border-top:4px solid transparent;border-bottom:4px solid transparent;border-left:4px solid #333"></div>
<div style="left:5px;top:600px;width:130px;height:269px;background:#fbfaf6;border:1px solid #d5dbe5;border-radius:5px;box-sizing:border-box"></div>
<div style="left:4px;top:600px;width:131px;height:21px;background:linear-gradient(#8fb3f4 0%,#4a86ee 35%,#1f63e3 70%,#1a5ce0 100%);border-radius:5px 5px 0 0"></div>
<div class="t" style="left:8px;top:603px;color:#fff;font-size:13px;font-weight:bold;line-height:16px">Other Tasks</div>
<div style="left:8px;top:626.0px;width:14px;height:14px;"><svg width="14" height="14"><rect x="0.5" y="1.5" width="13" height="11" fill="#dfe6f5" stroke="#6a78b8"/><rect x="2" y="4" width="10" height="2" fill="#fff"/><rect x="2" y="7" width="4" height="4" fill="#fff"/><rect x="8" y="8" width="4" height="4" fill="#7cb342"/></svg></div>
<div class="t" style="left:24px;top:627.0px;color:#111;font-size:10px;line-height:12px">Select view</div>
<div style="left:121px;top:629.0px;width:0px;height:0px;border-top:4px solid transparent;border-bottom:4px solid transparent;border-left:4px solid #333"></div>
<div style="left:8px;top:644.7px;width:14px;height:14px;"><svg width="14" height="14"><rect x="4.5" y="0.5" width="9" height="12" fill="#f8f8f8" stroke="#888"/><path d="M0 5h5v-2l4 4-4 4v-2h-5z" fill="#3e9a2e"/></svg></div>
<div class="t" style="left:24px;top:645.7px;color:#111;font-size:10px;line-height:12px">Import</div>
<div style="left:8px;top:663.4px;width:14px;height:14px;"><svg width="14" height="14"><rect x="1.5" y="1.5" width="11" height="12" fill="#f4f4ee" stroke="#666"/><path d="M4 10l1-3 6-6 1.5 1.5-6 6z" fill="#e8c030" stroke="#555" stroke-width="0.5"/></svg></div>
<div class="t" style="left:24px;top:664.4px;color:#111;font-size:10px;line-height:12px">Logbook</div>
<div style="left:121px;top:666.4px;width:0px;height:0px;border-top:4px solid transparent;border-bottom:4px solid transparent;border-left:4px solid #333"></div>
<div style="left:8px;top:682.1px;width:14px;height:14px;"><svg width="14" height="14"><circle cx="7" cy="7" r="5.5" fill="#9a7a3a" stroke="#7a5a20" stroke-dasharray="2 1.4" stroke-width="2"/><circle cx="7" cy="7" r="2" fill="#fbfaf6"/></svg></div>
<div class="t" style="left:24px;top:683.1px;color:#111;font-size:10px;line-height:12px">Settings</div>
<div style="left:5px;top:872px;width:130px;height:22px;background:#fbfaf6;border:1px solid #d5dbe5;border-radius:5px;box-sizing:border-box"></div>
<div style="left:10px;top:875px;width:16px;height:16px;"><svg width="16" height="16"><line x1="2" y1="14" x2="7" y2="9" stroke="#b07a3a" stroke-width="2"/><circle cx="10" cy="6" r="4.2" fill="#bfe0f5" stroke="#7fb0d8" stroke-width="1.2"/></svg></div>
<div style="left:31px;top:874px;width:101px;height:17px;background:#fff;border:1px solid #7f7f7f;border-radius:3px;box-sizing:border-box"></div>
<div style="left:141px;top:24px;width:1154px;height:28px;background:linear-gradient(#c5d7f7 0px,#8db2f2 3px,#3f7ef0 8px,#0a55e4 15px,#0052e0 100%);border-radius:5px;box-shadow:0 0 0 1px #8ea3c6 inset"></div>
<div class="t" style="left:147px;top:30px;color:#fff;font-size:14.2px;font-weight:bold;line-height:17px">Daily activity</div>
<div style="left:237px;top:36px;width:4px;height:4px;background:#fff;border-radius:50%"></div>
<div class="t" style="left:248px;top:32px;color:#e8efff;font-size:10px;line-height:12px">My Activities</div>
<div style="left:316px;top:34px;width:0px;height:0px;border-top:3.5px solid transparent;border-bottom:3.5px solid transparent;border-left:3.5px solid #fff"></div>
<div style="left:1303px;top:27px;width:24px;height:24px;background:#d9d6cb;border:1px solid #b9b6aa;border-radius:3px;box-sizing:border-box"><svg width="22" height="22" style="position:absolute;left:0;top:0"><rect x="2.5" y="4.5" width="16" height="14" fill="#777b82" rx="1"/><g fill="#f2f6fc"><rect x="4" y="7" width="3" height="3"/><rect x="8" y="7" width="3" height="3"/><rect x="12" y="7" width="3" height="3"/><rect x="16" y="7" width="1.5" height="3"/><rect x="4" y="11" width="3" height="3"/><rect x="8" y="11" width="3" height="3"/><rect x="12" y="11" width="3" height="3"/><rect x="16" y="11" width="1.5" height="3"/></g><g fill="#b9d2f2"><rect x="4" y="15" width="3" height="2.5"/><rect x="8" y="15" width="3" height="2.5"/><rect x="12" y="15" width="3" height="2.5"/><rect x="16" y="15" width="1.5" height="2.5"/></g></svg></div>
<div style="left:1331px;top:30px;width:24px;height:18px;"><svg width="24" height="18"><path d="M2,7.5 C4,5 6,3.5 8,2.5 C10,4 12,5.5 14,7 C17,9 20,10.5 21.5,12.5 C21,14.5 19,15 16,14.5 C11,13.5 6,11 2,9 Z" fill="#eceeea" stroke="#3a3a3a" stroke-width="1.1" stroke-linejoin="round"/><path d="M8,4 L11,9 M10.5,5 L13.5,10" stroke="#8ac46a" stroke-width="1.1"/><path d="M3,9.5 C8,12.5 14,14.5 21,13.5" fill="none" stroke="#555" stroke-width="1"/></svg></div>
<div style="left:1362px;top:27px;width:19px;height:23px;"><svg width="19" height="23"><path d="M2 22c0-6 3-8 7-8s8 2 8 8z" fill="#fff" stroke="#4a6fb5" stroke-width="1.5"/><ellipse cx="10" cy="9" rx="5" ry="7" fill="#f0c088" stroke="#8a6a30"/><path d="M5 8c0-6 3-7 6-7s4 2 4 6l-2-3c-3 1-5 2-8 4z" fill="#e8b84a"/></svg></div>
<div style="left:1391px;top:29px;width:21px;height:21px;"><svg width="21" height="21"><rect x="1.5" y="0.5" width="14" height="18" fill="#f4f4f4" stroke="#777"/><rect x="4" y="3" width="3" height="13" fill="#bbb"/><rect x="9" y="3" width="3" height="9" fill="#ddd"/><ellipse cx="15" cy="16" rx="5" ry="3.5" fill="#c33" stroke="#822"/><circle cx="15" cy="16" r="1.8" fill="#4a9"/></svg></div>
<div style="left:1427px;top:29px;width:24px;height:20px;"><svg width="24" height="20"><path d="M1 10l9-9v5h12v8h-12v5z" fill="#dfe6ee" stroke="#b8c6d4"/></svg></div>
<div style="left:1457px;top:29px;width:24px;height:20px;"><svg width="24" height="20"><path d="M23 10l-9-9v5h-12v8h12v5z" fill="#dfe6ee" stroke="#b8c6d4"/></svg></div>
<div class="t" style="left:143px;top:60px;color:#1a1a1a;font-size:10.6px;line-height:13px">Week of 15/12/2019</div>
<div style="left:320px;top:57px;width:16px;height:16px;"><svg width="16" height="16"><circle cx="8" cy="8" r="7" fill="#5aa53a" stroke="#3a7a22"/><circle cx="8" cy="6" r="5" fill="#8cd060" opacity="0.5"/><path d="M9 4.5l-4 3.5 4 3.5v-2.3h3v-2.4h-3z" fill="#fff" transform="translate(-0.5,0)"/></svg></div>
<div style="left:340px;top:57px;width:16px;height:16px;"><svg width="16" height="16"><circle cx="8" cy="8" r="7" fill="#5aa53a" stroke="#3a7a22"/><circle cx="8" cy="6" r="5" fill="#8cd060" opacity="0.5"/><path d="M6 4.5l4 3.5-4 3.5v-2.3h-3v-2.4h3z" fill="#fff" transform="translate(-0.5,0)"/></svg></div>
<div style="left:363px;top:58px;width:14px;height:14px;"><svg width="14" height="14"><rect x="0.5" y="1.5" width="12" height="11" fill="#f0f0f0" stroke="#9a9a9a"/><rect x="1" y="2" width="11" height="2" fill="#cfcfcf"/><g fill="#c8c8d8"><rect x="2" y="6" width="2" height="2"/><rect x="5.5" y="6" width="2" height="2"/><rect x="9" y="6" width="2" height="2"/><rect x="2" y="9" width="2" height="2"/><rect x="5.5" y="9" width="2" height="2"/><rect x="9" y="9" width="2" height="2"/></g></svg></div>
<div class="t" style="left:380px;top:60px;color:#1a1a1a;font-size:10px;line-height:12px">Today</div>
<div style="left:141px;top:78px;width:1351px;height:234px;background:#faf9f4;border:1px solid #a9b3c3;border-radius:3px;box-sizing:border-box"></div>
<div style="left:142px;top:78px;width:1349px;height:29px;background:linear-gradient(#d7e4f9,#c0d4f5 50%,#a6c2ee);border-radius:3px 3px 0 0;border-bottom:1px solid #4d5f84;box-sizing:border-box"></div>
<div style="left:258px;top:78px;width:1px;height:28px;background:#7f90b0"></div>
<div style="left:347px;top:78px;width:1px;height:28px;background:#7f90b0"></div>
<div style="left:525px;top:78px;width:1px;height:28px;background:#7f90b0"></div>
<div style="left:703px;top:78px;width:1px;height:28px;background:#7f90b0"></div>
<div style="left:783px;top:78px;width:1px;height:28px;background:#7f90b0"></div>
<div style="left:855px;top:78px;width:1px;height:28px;background:#7f90b0"></div>
<div style="left:926px;top:78px;width:1px;height:28px;background:#7f90b0"></div>
<div style="left:997px;top:78px;width:1px;height:28px;background:#7f90b0"></div>
<div style="left:1051px;top:78px;width:1px;height:28px;background:#7f90b0"></div>
<div style="left:1122px;top:78px;width:1px;height:28px;background:#7f90b0"></div>
<div class="t" style="left:147px;top:86px;color:#1f2a44;font-size:10px;line-height:12px">Date</div>
<div class="t" style="left:262px;top:86px;color:#1f2a44;font-size:10px;line-height:12px">Time of day</div>
<div class="t" style="left:351px;top:86px;color:#1f2a44;font-size:10px;line-height:12px">Location</div>
<div class="t" style="left:529px;top:86px;color:#1f2a44;font-size:10px;line-height:12px">Category</div>
<div class="t" style="left:707px;top:86px;color:#1f2a44;font-size:10px;line-height:12px">Distance (mile)</div>
<div class="t" style="left:787px;top:86px;color:#1f2a44;font-size:10px;line-height:12px">Time</div>
<div class="t" style="left:859px;top:80px;color:#1f2a44;font-size:10px;line-height:10.5px">Avg. pace<br>(min/mi)</div>
<div class="t" style="left:930px;top:80px;color:#1f2a44;font-size:10px;line-height:10.5px">Avg. speed<br>(mph)</div>
<div class="t" style="left:1001px;top:86px;color:#1f2a44;font-size:10px;line-height:12px">Calories</div>
<div class="t" style="left:1055px;top:86px;color:#1f2a44;font-size:10px;line-height:12px">Avg. HR</div>
<div style="left:250px;top:91px;width:0px;height:0px;border-left:3.5px solid transparent;border-right:3.5px solid transparent;border-top:4px solid #3a4a6a"></div>
<div style="left:142px;top:121.3px;width:1348px;height:1px;border-top:1px dotted #dcdcd4"></div>
<div class="t" style="left:147px;top:108.9px;color:#111;font-size:10px;line-height:12px">Sunday</div>
<div class="t" style="left:262px;top:108.9px;color:#111;font-size:10px;line-height:12px">Morning</div>
<div class="t" style="left:351px;top:108.9px;color:#111;font-size:10px;line-height:12px">Woolwich Common, Oxleas, Eltham..</div>
<div class="t" style="left:529px;top:108.9px;color:#111;font-size:10px;line-height:12px">Running</div>
<div class="t" style="right:718px;top:108.9px;color:#111;font-size:10px;line-height:12px">1.45</div>
<div class="t" style="right:647px;top:108.9px;color:#111;font-size:10px;line-height:12px">34:55</div>
<div class="t" style="right:576px;top:108.9px;color:#111;font-size:10px;line-height:12px">24:05</div>
<div class="t" style="right:504px;top:108.9px;color:#111;font-size:10px;line-height:12px">2.5</div>
<div class="t" style="right:451px;top:108.9px;color:#111;font-size:10px;line-height:12px">167</div>
<div style="left:142px;top:136.5px;width:1348px;height:1px;border-top:1px dotted #dcdcd4"></div>
<div class="t" style="left:147px;top:124.1px;color:#111;font-size:10px;line-height:12px">Monday</div>
<div class="t" style="left:262px;top:124.1px;color:#111;font-size:10px;line-height:12px">Midday</div>
<div class="t" style="left:351px;top:124.1px;color:#111;font-size:10px;line-height:12px">Woolwich Common, Oxleas, Eltham..</div>
<div class="t" style="left:529px;top:124.1px;color:#111;font-size:10px;line-height:12px">Running</div>
<div class="t" style="right:718px;top:124.1px;color:#111;font-size:10px;line-height:12px">4.67</div>
<div class="t" style="right:647px;top:124.1px;color:#111;font-size:10px;line-height:12px">39:11</div>
<div class="t" style="right:576px;top:124.1px;color:#111;font-size:10px;line-height:12px">8:23</div>
<div class="t" style="right:504px;top:124.1px;color:#111;font-size:10px;line-height:12px">7.2</div>
<div class="t" style="right:451px;top:124.1px;color:#111;font-size:10px;line-height:12px">482</div>
<div class="t" style="right:380px;top:124.1px;color:#111;font-size:10px;line-height:12px">148 (77%)</div>
<div style="left:142px;top:151.7px;width:1348px;height:1px;border-top:1px dotted #dcdcd4"></div>
<div style="left:142px;top:137.1px;width:1348px;height:15px;background:#316ac5"></div>
<div class="t" style="left:147px;top:139.3px;color:#fff;font-size:10px;line-height:12px">Tuesday</div>
<div class="t" style="left:262px;top:139.3px;color:#fff;font-size:10px;line-height:12px">Midday</div>
<div class="t" style="left:351px;top:139.3px;color:#fff;font-size:10px;line-height:12px">Woolwich Common, Oxleas, Eltham..</div>
<div class="t" style="left:529px;top:139.3px;color:#fff;font-size:10px;line-height:12px">Running</div>
<div class="t" style="right:718px;top:139.3px;color:#fff;font-size:10px;line-height:12px">7.26</div>
<div class="t" style="right:647px;top:139.3px;color:#fff;font-size:10px;line-height:12px">1:01:00</div>
<div class="t" style="right:576px;top:139.3px;color:#fff;font-size:10px;line-height:12px">8:24</div>
<div class="t" style="right:504px;top:139.3px;color:#fff;font-size:10px;line-height:12px">7.1</div>
<div class="t" style="right:451px;top:139.3px;color:#fff;font-size:10px;line-height:12px">744</div>
<div class="t" style="right:380px;top:139.3px;color:#fff;font-size:10px;line-height:12px">148 (77%)</div>
<div style="left:142px;top:166.9px;width:1348px;height:1px;border-top:1px dotted #dcdcd4"></div>
<div class="t" style="left:147px;top:154.5px;color:#111;font-size:10px;line-height:12px">Wednesday</div>
<div class="t" style="left:262px;top:154.5px;color:#111;font-size:10px;line-height:12px">Midday</div>
<div class="t" style="left:351px;top:154.5px;color:#111;font-size:10px;line-height:12px">Woolwich Common, Oxleas, Eltham..</div>
<div class="t" style="left:529px;top:154.5px;color:#111;font-size:10px;line-height:12px">Running</div>
<div class="t" style="right:718px;top:154.5px;color:#111;font-size:10px;line-height:12px">3.68</div>
<div class="t" style="right:647px;top:154.5px;color:#111;font-size:10px;line-height:12px">33:05</div>
<div class="t" style="right:576px;top:154.5px;color:#111;font-size:10px;line-height:12px">8:59</div>
<div class="t" style="right:504px;top:154.5px;color:#111;font-size:10px;line-height:12px">6.7</div>
<div class="t" style="right:451px;top:154.5px;color:#111;font-size:10px;line-height:12px">368</div>
<div class="t" style="right:380px;top:154.5px;color:#111;font-size:10px;line-height:12px">137 (72%)</div>
<div style="left:142px;top:182.1px;width:1348px;height:1px;border-top:1px dotted #dcdcd4"></div>
<div class="t" style="left:147px;top:169.7px;color:#111;font-size:10px;line-height:12px">Thursday</div>
<div class="t" style="left:262px;top:169.7px;color:#111;font-size:10px;line-height:12px">Morning</div>
<div class="t" style="left:351px;top:169.7px;color:#111;font-size:10px;line-height:12px">Woolwich Common, Oxleas, Eltham..</div>
<div class="t" style="left:529px;top:169.7px;color:#111;font-size:10px;line-height:12px">Running</div>
<div class="t" style="right:718px;top:169.7px;color:#111;font-size:10px;line-height:12px">1.32</div>
<div class="t" style="right:647px;top:169.7px;color:#111;font-size:10px;line-height:12px">13:07</div>
<div class="t" style="right:576px;top:169.7px;color:#111;font-size:10px;line-height:12px">9:55</div>
<div class="t" style="right:504px;top:169.7px;color:#111;font-size:10px;line-height:12px">6.1</div>
<div class="t" style="right:451px;top:169.7px;color:#111;font-size:10px;line-height:12px">153</div>
<div style="left:142px;top:197.3px;width:1348px;height:1px;border-top:1px dotted #dcdcd4"></div>
<div class="t" style="left:147px;top:184.9px;color:#111;font-size:10px;line-height:12px">Friday</div>
<div class="t" style="left:262px;top:184.9px;color:#111;font-size:10px;line-height:12px">Midday</div>
<div class="t" style="left:351px;top:184.9px;color:#111;font-size:10px;line-height:12px">Woolwich Common, Oxleas, Eltham..</div>
<div class="t" style="left:529px;top:184.9px;color:#111;font-size:10px;line-height:12px">Running</div>
<div class="t" style="right:718px;top:184.9px;color:#111;font-size:10px;line-height:12px">2.99</div>
<div class="t" style="right:647px;top:184.9px;color:#111;font-size:10px;line-height:12px">27:25</div>
<div class="t" style="right:576px;top:184.9px;color:#111;font-size:10px;line-height:12px">9:10</div>
<div class="t" style="right:504px;top:184.9px;color:#111;font-size:10px;line-height:12px">6.5</div>
<div class="t" style="right:451px;top:184.9px;color:#111;font-size:10px;line-height:12px">304</div>
<div class="t" style="right:380px;top:184.9px;color:#111;font-size:10px;line-height:12px">136 (71%)</div>
<div style="left:142px;top:212.5px;width:1348px;height:1px;background:#55585e"></div>
<div class="t" style="left:147px;top:200.1px;color:#111;font-size:10px;line-height:12px">Saturday</div>
<div style="left:142px;top:227.7px;width:1348px;height:1px;border-top:1px dotted #dcdcd4"></div>
<div class="t" style="left:147px;top:215.3px;color:#111;font-size:10px;line-height:12px">This Week</div>
<div class="t" style="left:351px;top:215.3px;color:#111;font-size:10px;line-height:12px">Woolwich Common, Oxleas, Eltham..</div>
<div class="t" style="left:529px;top:215.3px;color:#111;font-size:10px;line-height:12px">Running</div>
<div class="t" style="right:718px;top:215.3px;color:#111;font-size:10px;line-height:12px">21.38</div>
<div class="t" style="right:647px;top:215.3px;color:#111;font-size:10px;line-height:12px">3:28:43</div>
<div class="t" style="right:576px;top:215.3px;color:#111;font-size:10px;line-height:12px">9:46</div>
<div class="t" style="right:504px;top:215.3px;color:#111;font-size:10px;line-height:12px">6.1</div>
<div class="t" style="right:451px;top:215.3px;color:#111;font-size:10px;line-height:12px">2,218</div>
<div class="t" style="right:380px;top:215.3px;color:#111;font-size:10px;line-height:12px">144 (75%)</div>
<div style="left:142px;top:242.9px;width:1348px;height:1px;border-top:1px dotted #dcdcd4"></div>
<div class="t" style="left:147px;top:230.5px;color:#111;font-size:10px;line-height:12px">Last Week</div>
<div class="t" style="left:351px;top:230.5px;color:#111;font-size:10px;line-height:12px">Woolwich Common, Oxleas, Eltham..</div>
<div class="t" style="left:529px;top:230.5px;color:#111;font-size:10px;line-height:12px">(Multiple)</div>
<div class="t" style="right:718px;top:230.5px;color:#111;font-size:10px;line-height:12px">17.18</div>
<div class="t" style="right:647px;top:230.5px;color:#111;font-size:10px;line-height:12px">2:37:17</div>
<div class="t" style="right:576px;top:230.5px;color:#111;font-size:10px;line-height:12px">9:09</div>
<div class="t" style="right:504px;top:230.5px;color:#111;font-size:10px;line-height:12px">6.6</div>
<div class="t" style="right:451px;top:230.5px;color:#111;font-size:10px;line-height:12px">1,803</div>
<div class="t" style="right:380px;top:230.5px;color:#111;font-size:10px;line-height:12px">139 (72%)</div>
<div style="left:142px;top:258.1px;width:1348px;height:1px;border-top:1px dotted #dcdcd4"></div>
<div class="t" style="left:147px;top:245.7px;color:#111;font-size:10px;line-height:12px">December</div>
<div class="t" style="left:351px;top:245.7px;color:#111;font-size:10px;line-height:12px">Woolwich Common, Oxleas, Eltham..</div>
<div class="t" style="left:529px;top:245.7px;color:#111;font-size:10px;line-height:12px">(Multiple)</div>
<div class="t" style="right:718px;top:245.7px;color:#111;font-size:10px;line-height:12px">39.66</div>
<div class="t" style="right:647px;top:245.7px;color:#111;font-size:10px;line-height:12px">6:16:15</div>
<div class="t" style="right:576px;top:245.7px;color:#111;font-size:10px;line-height:12px">9:29</div>
<div class="t" style="right:504px;top:245.7px;color:#111;font-size:10px;line-height:12px">6.3</div>
<div class="t" style="right:451px;top:245.7px;color:#111;font-size:10px;line-height:12px">4,147</div>
<div class="t" style="right:380px;top:245.7px;color:#111;font-size:10px;line-height:12px">142 (74%)</div>
<div style="left:142px;top:273.3px;width:1348px;height:1px;border-top:1px dotted #dcdcd4"></div>
<div class="t" style="left:147px;top:260.9px;color:#111;font-size:10px;line-height:12px">November</div>
<div class="t" style="left:351px;top:260.9px;color:#111;font-size:10px;line-height:12px">Woolwich Common, Oxleas, Eltham..</div>
<div class="t" style="left:529px;top:260.9px;color:#111;font-size:10px;line-height:12px">(Multiple)</div>
<div class="t" style="right:718px;top:260.9px;color:#111;font-size:10px;line-height:12px">77.25</div>
<div class="t" style="right:647px;top:260.9px;color:#111;font-size:10px;line-height:12px">11:31:56</div>
<div class="t" style="right:576px;top:260.9px;color:#111;font-size:10px;line-height:12px">8:57</div>
<div class="t" style="right:504px;top:260.9px;color:#111;font-size:10px;line-height:12px">6.7</div>
<div class="t" style="right:451px;top:260.9px;color:#111;font-size:10px;line-height:12px">7,991</div>
<div class="t" style="right:380px;top:260.9px;color:#111;font-size:10px;line-height:12px">145 (76%)</div>
<div style="left:141px;top:317px;width:386px;height:19px;background:linear-gradient(#c5d7f7 0px,#8db2f2 3px,#3f7ef0 8px,#0a55e4 13px,#0052e0 100%);border-radius:5px;box-shadow:0 0 0 1px #8ea3c6 inset"></div>
<div class="t" style="left:147px;top:318px;color:#fff;font-size:13.6px;font-weight:bold;line-height:16px">Summary</div>
<div style="left:510px;top:319px;width:15px;height:15px;"><svg width="15" height="15"><circle cx="7.5" cy="7.5" r="6.5" fill="#2a5fc8" stroke="#a9c4ee" stroke-width="1.2"/><path d="M4 6h7l-3.5 4z" fill="#fff"/></svg></div>
<div class="t" style="left:143px;top:344px;color:#1a1a1a;font-size:10px;line-height:12px">Date:</div>
<div style="left:223px;top:341px;width:70px;height:16px;background:#fbfaf6;border:1px solid #ecebe4;box-sizing:border-box"></div>
<div class="t" style="left:226px;top:344px;color:#111;font-size:10px;line-height:12px">17/12/2019</div>
<div style="left:298px;top:341px;width:14px;height:14px;"><svg width="14" height="14"><rect x="0.5" y="1.5" width="12" height="11" fill="#eee" stroke="#999"/><rect x="1" y="2" width="11" height="2" fill="#ccc"/><g fill="#c8c8d8"><rect x="2" y="6" width="2" height="2"/><rect x="5.5" y="6" width="2" height="2"/><rect x="9" y="6" width="2" height="2"/><rect x="2" y="9" width="2" height="2"/><rect x="5.5" y="9" width="2" height="2"/><rect x="9" y="9" width="2" height="2"/></g></svg></div>
<div style="left:316px;top:341px;width:57px;height:16px;background:#fbfaf6;border:1px solid #ecebe4;box-sizing:border-box"></div>
<div class="t" style="left:319px;top:344px;color:#111;font-size:10px;line-height:12px">11:32</div>
<div class="t" style="right:996px;top:344px;color:#1a1a1a;font-size:10px;line-height:12px">Data:</div>
<div style="left:511px;top:341px;width:17px;height:15px;"><svg width="17" height="15"><rect x="1.5" y="0.5" width="10" height="13" fill="#dbe8f8" stroke="#3d6fb8"/><rect x="3" y="2" width="7" height="2.5" fill="#3d6fb8"/><g fill="#3d6fb8"><rect x="3" y="6" width="2" height="2"/><rect x="6" y="6" width="2" height="2"/><rect x="3" y="9" width="2" height="2"/><rect x="6" y="9" width="2" height="2"/></g><path d="M13 5l3 2.5-3 2.5z" fill="#3d6fb8"/></svg></div>
<div class="t" style="left:143px;top:364px;color:#1a1a1a;font-size:10px;line-height:12px">Category:</div>
<div style="left:223px;top:361px;width:306px;height:16px;background:#fdfdfa;border:1px solid #e6e4dc;box-sizing:border-box"></div>
<div class="t" style="left:226px;top:364px;color:#111;font-size:10px;line-height:12px">Running</div>
<div style="left:514px;top:361px;width:15px;height:16px;border-left:1px solid #e6e4dc;box-sizing:border-box"><div style="position:absolute;left:3px;top:5px;width:0;height:0;border-left:4px solid transparent;border-right:4px solid transparent;border-top:4px solid #444"></div></div>
<div class="t" style="left:143px;top:383px;color:#1a1a1a;font-size:10px;line-height:12px">Location:</div>
<div style="left:223px;top:381px;width:306px;height:16px;background:#fdfdfa;border:1px solid #e6e4dc;box-sizing:border-box"></div>
<div style="left:224px;top:382px;width:289px;height:14px;overflow:hidden"><div class="t" style="left:2px;top:2px;color:#111;font-size:9.4px;line-height:12px;white-space:nowrap">Woolwich Common, Oxleas, Eltham Pk Sth, loop via Eltham Pal, New Eltham</div></div>
<div style="left:514px;top:381px;width:15px;height:16px;border-left:1px solid #e6e4dc;box-sizing:border-box"><div style="position:absolute;left:3px;top:5px;width:0;height:0;border-left:4px solid transparent;border-right:4px solid transparent;border-top:4px solid #444"></div></div>
<div class="t" style="left:143px;top:403px;color:#1a1a1a;font-size:10px;line-height:12px">Distance:</div>
<div style="left:223px;top:400px;width:70px;height:16px;background:#e9e7dc;border:1px solid #dddbd0;box-sizing:border-box"></div>
<div class="t" style="right:1207px;top:403px;color:#111;font-size:10px;line-height:12px">7.26 mi</div>
<div class="t" style="left:321px;top:403px;color:#1a1a1a;font-size:10px;line-height:12px">Climb:</div>
<div style="left:401px;top:400px;width:89px;height:16px;background:#e9e7dc;border:1px solid #dddbd0;box-sizing:border-box"></div>
<div class="t" style="right:1010px;top:403px;color:#111;font-size:10px;line-height:12px">+581 / -584</div>
<div class="t" style="left:143px;top:423px;color:#1a1a1a;font-size:10px;line-height:12px">Time:</div>
<div style="left:223px;top:420px;width:70px;height:16px;background:#e9e7dc;border:1px solid #dddbd0;box-sizing:border-box"></div>
<div class="t" style="right:1207px;top:423px;color:#111;font-size:10px;line-height:12px">1:01:00</div>
<div class="t" style="left:321px;top:423px;color:#1a1a1a;font-size:10px;line-height:12px">Stopped:</div>
<div style="left:401px;top:420px;width:89px;height:16px;background:#e9e7dc;border:1px solid #dddbd0;box-sizing:border-box"></div>
<div class="t" style="right:1010px;top:423px;color:#111;font-size:10px;line-height:12px">0:01</div>
<div class="t" style="left:143px;top:442px;color:#1a1a1a;font-size:10px;line-height:12px">Pace (min/mi):</div>
<div style="left:223px;top:439px;width:70px;height:16px;background:#e9e7dc;border:1px solid #dddbd0;box-sizing:border-box"></div>
<div class="t" style="right:1207px;top:442px;color:#111;font-size:10px;line-height:12px">8:24</div>
<div class="t" style="left:321px;top:442px;color:#1a1a1a;font-size:10px;line-height:12px">Fastest:</div>
<div style="left:401px;top:439px;width:89px;height:16px;background:#e9e7dc;border:1px solid #dddbd0;box-sizing:border-box"></div>
<div class="t" style="right:1010px;top:442px;color:#111;font-size:10px;line-height:12px">7:11</div>
<div class="t" style="left:143px;top:462px;color:#1a1a1a;font-size:10px;line-height:12px">Calories:</div>
<div style="left:223px;top:459px;width:70px;height:16px;background:#fbfaf6;border:1px solid #e6e4dc;box-sizing:border-box"></div>
<div class="t" style="right:1207px;top:462px;color:#111;font-size:10px;line-height:12px">744</div>
<div class="t" style="left:321px;top:462px;color:#1a1a1a;font-size:10px;line-height:12px">Avg. HR:</div>
<div style="left:401px;top:459px;width:89px;height:16px;background:#e9e7dc;border:1px solid #dddbd0;box-sizing:border-box"></div>
<div class="t" style="right:1010px;top:462px;color:#111;font-size:10px;line-height:12px">148 (77%)</div>
<div style="left:298px;top:459px;width:14px;height:15px;"><svg width="14" height="15"><rect x="0.5" y="0.5" width="12" height="13" fill="#dbe8f8" stroke="#3d6fb8"/><rect x="2" y="2" width="9" height="3" fill="#3d6fb8"/><g fill="#3d6fb8"><rect x="2" y="6.5" width="2" height="2"/><rect x="5.5" y="6.5" width="2" height="2"/><rect x="9" y="6.5" width="2" height="2"/><rect x="2" y="10" width="2" height="2"/><rect x="5.5" y="10" width="2" height="2"/><rect x="9" y="10" width="2" height="2"/></g></svg></div>
<div class="t" style="left:143px;top:481px;color:#1a1a1a;font-size:10px;line-height:12px">Weather:</div>
<div style="left:223px;top:478px;width:70px;height:16px;background:#fbfaf6;border:1px solid #e6e4dc;box-sizing:border-box"></div>
<div class="t" style="left:300px;top:476px;color:#2c3e8a;font-size:14px;font-weight:bold;line-height:16px">?</div>
<div style="left:319px;top:478px;width:210px;height:16px;background:#fbfaf6;border:1px solid #e6e4dc;box-sizing:border-box"></div>
<div class="t" style="left:143px;top:501px;color:#1a1a1a;font-size:10px;line-height:12px">Equipment:</div>
<div style="left:223px;top:498px;width:306px;height:42px;background:#fdfdfa;border:1px solid #e6e4dc;box-sizing:border-box"></div>
<div style="left:220px;top:495px;width:50px;height:40px;"><svg width="50" height="40"><defs><linearGradient id="sole" x1="0" x2="1"><stop offset="0" stop-color="#e2506a"/><stop offset="0.3" stop-color="#f3d0c8"/><stop offset="0.45" stop-color="#8a8a90"/><stop offset="1" stop-color="#555"/></linearGradient><linearGradient id="up" x1="0" x2="1"><stop offset="0" stop-color="#c9a21c"/><stop offset="0.6" stop-color="#d9a030"/><stop offset="1" stop-color="#e0b040"/></linearGradient></defs><path d="M5,29.5 L5.2,20 Q5.5,17 7.5,17.2 L9,21 Q12.5,21.5 15.5,16 Q22,17.5 30,21 Q39,23 43,25.5 Q42.5,27.5 36,28 L8,29.5 Z" fill="url(#up)"/><path d="M4.5,29 L36,27.8 Q41,27.5 43,26 L42.8,27.5 Q40,30 30,30.5 L6,31.5 Z" fill="url(#sole)"/></svg></div>
<div class="t" style="left:265px;top:501px;color:#111;font-size:10px;line-height:12px">Zoom Streak LT4</div>
<div class="t" style="left:265px;top:513px;color:#111;font-size:10px;line-height:12px">Nike</div>
<div class="t" style="left:265px;top:525px;color:#111;font-size:10px;line-height:12px">874 miles</div>
<div style="left:514px;top:499px;width:14px;height:40px;border-left:1px solid #e6e4dc;box-sizing:border-box"><svg width="14" height="12" style="position:absolute;left:1px;top:3px"><rect x="0.5" y="1.5" width="12" height="9" fill="#e0eaf8" stroke="#6a8fc8"/><line x1="1" y1="5" x2="12" y2="5" stroke="#6a8fc8"/><line x1="6.5" y1="2" x2="6.5" y2="10" stroke="#6a8fc8"/></svg><div style="position:absolute;left:0;top:20px;width:14px;height:1px;background:#e6e4dc"></div><div style="position:absolute;left:3px;top:28px;width:0;height:0;border-left:4px solid transparent;border-right:4px solid transparent;border-top:4px solid #444"></div></div>
<div class="t" style="left:143px;top:546px;color:#1a1a1a;font-size:10px;line-height:12px">Name:</div>
<div style="left:223px;top:544px;width:306px;height:16px;background:#fbfaf6;border:1px solid #e6e4dc;box-sizing:border-box"></div>
<div style="left:514px;top:544px;width:15px;height:16px;border-left:1px solid #e6e4dc;box-sizing:border-box"><div style="position:absolute;left:3px;top:5px;width:0;height:0;border-left:4px solid transparent;border-right:4px solid transparent;border-top:4px solid #444"></div></div>
<div class="t" style="left:143px;top:566px;color:#1a1a1a;font-size:10px;line-height:12px">Notes:</div>
<div style="left:223px;top:563px;width:305px;height:331px;background:#faf9f5;border:1px solid #d8d7cf;box-sizing:border-box"></div>
<div style="left:511px;top:564px;width:16px;height:329px;background:#fff;border-left:1px solid #e4e4e0;box-sizing:border-box"><div style="position:absolute;left:0;top:0;width:15px;height:16px;border:1px solid #cfd0cc;box-sizing:border-box;background:#fff"></div><div style="position:absolute;left:4px;top:6px;width:5px;height:5px;border-left:1px solid #888;border-top:1px solid #888;transform:rotate(45deg)"></div><div style="position:absolute;left:0;top:313px;width:15px;height:16px;border:1px solid #cfd0cc;box-sizing:border-box;background:#fff"></div><div style="position:absolute;left:4px;top:317px;width:5px;height:5px;border-right:1px solid #888;border-bottom:1px solid #888;transform:rotate(45deg)"></div></div>
<div style="left:534px;top:317px;width:957px;height:19px;background:linear-gradient(#c5d7f7 0px,#8db2f2 3px,#3f7ef0 8px,#0a55e4 13px,#0052e0 100%);border-radius:5px;box-shadow:0 0 0 1px #8ea3c6 inset"></div>
<div class="t" style="left:539px;top:318px;color:#fff;font-size:13.6px;font-weight:bold;line-height:16px">Route : Street</div>
<div style="left:1455px;top:321px;width:14px;height:11px;"><svg width="14" height="11"><rect x="0" y="0" width="12" height="11" fill="#d8ecfa"/><line x1="0" y1="5.5" x2="12" y2="5.5" stroke="#445" stroke-width="1"/><rect x="0" y="0" width="12" height="1.5" fill="#889"/></svg></div>
<div style="left:1474px;top:319px;width:15px;height:15px;"><svg width="15" height="15"><circle cx="7.5" cy="7.5" r="6.5" fill="#2a5fc8" stroke="#a9c4ee" stroke-width="1.2"/><path d="M4 6h7l-3.5 4z" fill="#fff"/></svg></div>
<div style="left:539px;top:339px;width:10px;height:16px;"><svg width="10" height="16"><path d="M1 1v12l3-3 3 5 2-1-3-5h4z" fill="#fff" stroke="#333" stroke-width="0.9"/></svg></div>
<div class="t" style="left:554px;top:341px;color:#1a1a1a;font-size:10px;line-height:12px">Explore</div>
<div style="left:1366px;top:340px;width:14px;height:14px;"><svg width="14" height="14"><path d="M7 1l6 6-6 6-6-6z" fill="#f2d046" stroke="#6b5a1a"/></svg></div>
<div style="left:1387px;top:339px;width:16px;height:16px;"><svg width="16" height="16"><path d="M3 7a5 5 0 0 1 9-3l1-2v5h-5l2-1.5a3 3 0 0 0-5 1.5z" fill="#3fa33a"/><path d="M13 9a5 5 0 0 1-9 3l-1 2v-5h5l-2 1.5a3 3 0 0 0 5-1.5z" fill="#3fa33a"/></svg></div>
<div style="left:1410px;top:340px;width:14px;height:14px;"><svg width="14" height="14"><rect x="0.5" y="0.5" width="12" height="12" fill="#c9d2dc" stroke="#5a6670"/><rect x="3" y="1" width="7" height="4" fill="#f4f6f8"/><rect x="4" y="8" width="5" height="4" fill="#555"/></svg></div>
<div style="left:1430px;top:339px;width:16px;height:16px;"><svg width="16" height="16"><path d="M8 0l2.5 3h3.5v3.5l2 2-2 2v3.5h-3.5l-2.5 2-2.5-2h-3.5v-3.5l-2-2 2-2v-3.5h3.5z" fill="#3b3f9a"/><circle cx="8" cy="8" r="3.8" fill="#8fcf5a"/></svg></div>
<div style="left:1451px;top:339px;width:16px;height:16px;"><svg width="16" height="16"><line x1="1.5" y1="14.5" x2="6" y2="10" stroke="#d2782e" stroke-width="2"/><circle cx="9.6" cy="6.6" r="4.6" fill="#d2e8fa" stroke="#9cc0e2" stroke-width="1.2"/><path d="M7.5 6h4v1.2h-4z" fill="#2f6fc0"/></svg></div>
<div style="left:1472px;top:339px;width:16px;height:16px;"><svg width="16" height="16"><line x1="1.5" y1="14.5" x2="6" y2="10" stroke="#d2782e" stroke-width="2"/><circle cx="9.6" cy="6.6" r="4.6" fill="#d2e8fa" stroke="#9cc0e2" stroke-width="1.2"/><path d="M9 4h1.3v2h2v1.3h-2v2h-1.3v-2h-2v-1.3h2z" fill="#2f6fc0"/></svg></div>
<div style="left:534px;top:358px;width:957px;height:536px;border:1px solid #c9c8c0;box-sizing:border-box;border-radius:2px;overflow:hidden;background:#e8e8e8"><svg width="956" height="535" viewBox="535 359 956 535" style="position:absolute;left:0;top:0"><path d="M930.0,359.0 L992.0,359.0 L992.0,395.0 L930.0,395.0Z" fill="#f4eed8"/><path d="M608.0,460.0 L625.0,458.0 L632.0,480.0 L628.0,505.0 L612.0,505.0Z" fill="#f4eed8"/><path d="M800.0,745.0 L825.0,745.0 L828.0,780.0 L805.0,782.0Z" fill="#f4eed8"/><path d="M1405.0,359.0 L1438.0,359.0 L1432.0,380.0 L1412.0,380.0Z" fill="#f4eed8"/><path d="M1229.0,527.0 L1271.0,516.5 L1268.0,554.0 L1265.0,584.0 L1238.0,584.0 L1220.0,587.0 L1223.0,554.0Z" fill="#f4dcdc"/><path d="M1317.0,722.0 L1360.0,705.0 L1491.0,718.0 L1491.0,881.0 L1417.0,881.0 L1425.0,806.0 L1426.5,780.5 L1372.5,794.0 L1335.0,797.0 L1317.0,790.0Z" fill="#eae9e4"/><path d="M738.2,478.7 C742.9,483.9 756.9,498.4 766.2,509.8 C775.5,521.2 786.4,537.2 794.2,547.1 C802.0,557.0 805.6,565.3 812.9,568.9 C820.2,572.5 829.5,569.4 837.8,568.9 C846.1,568.4 856.0,565.3 862.7,565.8 C869.4,566.3 876.1,567.9 878.2,572.0 C880.3,576.1 873.5,583.4 875.1,590.7 C876.7,598.0 887.0,608.9 887.6,615.6 C888.2,622.3 878.9,619.4 879.0,631.0 C879.1,642.6 889.0,674.0 888.0,685.0 C887.0,696.0 880.3,697.2 873.0,697.0 C865.7,696.8 849.9,685.3 844.0,684.0 C838.1,682.7 841.6,686.4 837.5,689.0 C833.4,691.6 825.8,695.5 819.5,699.5 C813.2,703.5 805.8,708.5 800.0,713.0 C794.2,717.5 789.5,724.0 785.0,726.5 C780.5,729.0 776.0,729.5 773.0,728.0 C770.0,726.5 775.0,719.0 767.0,717.5 C759.0,716.0 737.0,723.1 725.0,719.0 C713.0,714.9 706.3,694.7 695.0,693.0 C683.7,691.3 666.5,706.1 657.3,708.9 C648.1,711.7 643.9,711.8 640.0,710.0 C636.1,708.2 632.0,702.8 634.0,698.0 C636.0,693.2 647.2,690.0 652.0,681.5 C656.8,673.0 662.5,656.4 662.5,647.0 C662.5,637.6 652.1,633.5 652.0,625.0 C651.9,616.5 657.0,602.8 662.0,596.0 C667.0,589.2 681.4,590.6 682.2,584.5 C683.0,578.4 672.7,569.2 666.7,559.6 C660.7,550.0 641.3,536.4 646.0,527.0 C650.7,517.6 684.0,508.5 695.0,503.0 C706.0,497.5 707.0,497.5 712.0,494.0 C717.0,490.5 720.6,484.6 725.0,482.0 C729.4,479.4 736.0,479.2 738.2,478.7" fill="#c8e7c6"/><path d="M589.0,359.0 C595.0,359.0 618.5,356.0 625.0,359.0 C631.5,362.0 633.0,373.5 628.0,377.0 C623.0,380.5 601.5,383.0 595.0,380.0 C588.5,377.0 590.0,362.5 589.0,359.0" fill="#c8e7c6"/><path d="M625.0,392.0 C630.0,391.0 649.5,384.3 655.0,386.0 C660.5,387.7 662.5,398.3 658.0,402.0 C653.5,405.7 633.5,409.7 628.0,408.0 C622.5,406.3 625.5,394.7 625.0,392.0" fill="#c8e7c6"/><path d="M625.0,458.0 C629.0,457.8 644.5,454.0 649.0,456.5 C653.5,459.0 653.5,470.2 652.0,473.0 C650.5,475.8 644.0,474.0 640.0,473.0 C636.0,472.0 630.5,469.5 628.0,467.0 C625.5,464.5 625.5,459.5 625.0,458.0" fill="#c8e7c6"/><path d="M646.0,470.0 C647.5,470.0 652.8,467.3 655.0,470.0 C657.2,472.7 659.8,483.3 659.0,486.0 C658.2,488.7 652.2,488.7 650.0,486.0 C647.8,483.3 646.7,472.7 646.0,470.0" fill="#c8e7c6"/><path d="M855.0,428.0 C859.0,428.0 875.0,424.5 879.0,428.0 C883.0,431.5 883.0,445.5 879.0,449.0 C875.0,452.5 859.0,452.5 855.0,449.0 C851.0,445.5 855.0,431.5 855.0,428.0" fill="#c8e7c6"/><path d="M1092.0,401.0 C1095.0,401.0 1107.0,398.0 1110.0,401.0 C1113.0,404.0 1113.0,416.0 1110.0,419.0 C1107.0,422.0 1095.0,422.0 1092.0,419.0 C1089.0,416.0 1092.0,404.0 1092.0,401.0" fill="#c8e7c6"/><path d="M1071.0,430.0 C1077.0,429.3 1101.0,423.8 1107.0,426.0 C1113.0,428.2 1113.0,439.8 1107.0,443.0 C1101.0,446.2 1077.0,447.2 1071.0,445.0 C1065.0,442.8 1071.0,432.5 1071.0,430.0" fill="#c8e7c6"/><path d="M1127.5,494.0 C1135.4,494.0 1167.1,487.8 1175.0,494.0 C1182.9,500.2 1182.7,526.5 1175.0,531.5 C1167.3,536.5 1136.9,530.2 1129.0,524.0 C1121.1,517.8 1127.8,499.0 1127.5,494.0" fill="#c8e7c6"/><path d="M1175.0,501.5 C1182.5,501.2 1211.0,496.2 1220.0,500.0 C1229.0,503.8 1236.5,518.5 1229.0,524.0 C1221.5,529.5 1184.0,536.8 1175.0,533.0 C1166.0,529.2 1175.0,506.8 1175.0,501.5" fill="#c8e7c6"/><path d="M1187.0,536.0 C1193.2,536.5 1219.0,532.0 1224.5,539.0 C1230.0,546.0 1222.8,567.5 1220.0,578.0 C1217.2,588.5 1215.5,597.0 1208.0,602.0 C1200.5,607.0 1180.5,612.0 1175.0,608.0 C1169.5,604.0 1171.2,586.0 1175.0,578.0 C1178.8,570.0 1195.5,565.2 1197.5,560.0 C1199.5,554.8 1188.8,550.5 1187.0,546.5 C1185.2,542.5 1187.0,537.8 1187.0,536.0" fill="#c8e7c6"/><path d="M1277.0,506.0 C1280.0,500.0 1287.0,480.5 1295.0,470.0 C1303.0,459.5 1317.0,449.5 1325.0,443.0 C1333.0,436.5 1336.0,433.0 1343.0,431.0 C1350.0,429.0 1363.0,424.0 1367.0,431.0 C1371.0,438.0 1376.0,461.8 1367.0,473.0 C1358.0,484.2 1328.0,492.5 1313.0,498.0 C1298.0,503.5 1283.0,504.7 1277.0,506.0 C1271.0,507.3 1277.0,506.0 1277.0,506.0" fill="#c8e7c6"/><path d="M1017.0,628.0 C1022.0,628.0 1042.0,622.0 1047.0,628.0 C1052.0,634.0 1052.0,658.0 1047.0,664.0 C1042.0,670.0 1022.0,670.0 1017.0,664.0 C1012.0,658.0 1017.0,634.0 1017.0,628.0" fill="#c8e7c6"/><path d="M933.0,749.0 C940.0,744.5 968.0,719.5 975.0,722.0 C982.0,724.5 982.0,757.0 975.0,764.0 C968.0,771.0 940.0,766.5 933.0,764.0 C926.0,761.5 933.0,751.5 933.0,749.0" fill="#c8e7c6"/><path d="M861.0,689.0 C866.2,688.5 883.0,685.5 892.5,686.0 C902.0,686.5 913.8,689.0 918.0,692.0 C922.2,695.0 926.0,701.5 918.0,704.0 C910.0,706.5 879.5,707.5 870.0,707.0 C860.5,706.5 862.5,704.0 861.0,701.0 C859.5,698.0 861.0,691.0 861.0,689.0" fill="#c8e7c6"/><path d="M930.0,683.0 C933.0,685.5 947.0,694.5 948.0,698.0 C949.0,701.5 939.0,703.5 936.0,704.0 C933.0,704.5 931.0,704.5 930.0,701.0 C929.0,697.5 930.0,686.0 930.0,683.0" fill="#c8e7c6"/><path d="M897.0,635.0 C899.5,635.0 909.5,633.2 912.0,635.0 C914.5,636.8 914.2,643.8 912.0,645.5 C909.8,647.2 901.5,647.2 899.0,645.5 C896.5,643.8 897.3,636.8 897.0,635.0" fill="#c8e7c6"/><path d="M981.0,737.0 C986.7,738.5 1009.3,740.5 1015.0,746.0 C1020.7,751.5 1020.7,766.0 1015.0,770.0 C1009.3,774.0 986.7,775.5 981.0,770.0 C975.3,764.5 981.0,742.5 981.0,737.0" fill="#c8e7c6"/><path d="M855.0,719.0 C857.5,720.0 868.5,723.0 870.0,725.0 C871.5,727.0 866.5,730.3 864.0,731.0 C861.5,731.7 856.5,731.0 855.0,729.0 C853.5,727.0 855.0,720.7 855.0,719.0" fill="#c8e7c6"/><path d="M1049.5,719.0 C1058.8,717.0 1089.5,712.5 1105.0,707.0 C1120.5,701.5 1133.5,691.5 1142.5,686.0 C1151.5,680.5 1156.2,671.5 1159.0,674.0 C1161.8,676.5 1156.3,696.5 1159.0,701.0 C1161.7,705.5 1172.3,699.0 1175.0,701.0 C1177.7,703.0 1181.7,709.0 1175.0,713.0 C1168.3,717.0 1151.7,720.5 1135.0,725.0 C1118.3,729.5 1089.2,738.5 1075.0,740.0 C1060.8,741.5 1053.8,737.5 1049.5,734.0 C1045.2,730.5 1049.5,721.5 1049.5,719.0" fill="#c8e7c6"/><path d="M1042.0,764.0 C1045.8,764.0 1061.5,759.5 1064.5,764.0 C1067.5,768.5 1063.2,787.0 1060.0,791.0 C1056.8,795.0 1048.0,792.5 1045.0,788.0 C1042.0,783.5 1042.5,768.0 1042.0,764.0" fill="#c8e7c6"/><path d="M1055.5,827.0 C1056.8,826.2 1059.8,820.5 1063.0,822.5 C1066.2,824.5 1074.8,836.8 1075.0,839.0 C1075.2,841.2 1067.8,838.0 1064.5,836.0 C1061.2,834.0 1057.0,828.5 1055.5,827.0" fill="#c8e7c6"/><path d="M1112.5,797.0 C1114.8,796.8 1123.2,794.2 1126.0,795.5 C1128.8,796.8 1131.0,802.0 1129.0,804.5 C1127.0,807.0 1116.8,811.8 1114.0,810.5 C1111.2,809.2 1112.8,799.2 1112.5,797.0" fill="#c8e7c6"/><path d="M975.0,816.5 C978.8,817.2 993.8,814.8 997.5,821.0 C1001.2,827.2 999.8,849.5 997.5,854.0 C995.2,858.5 987.8,854.2 984.0,848.0 C980.2,841.8 976.5,821.8 975.0,816.5" fill="#c8e7c6"/><path d="M1002.0,836.0 C1004.2,835.5 1012.8,823.5 1015.0,833.0 C1017.2,842.5 1017.2,883.0 1015.0,893.0 C1012.8,903.0 1004.2,902.5 1002.0,893.0 C999.8,883.5 1002.0,845.5 1002.0,836.0" fill="#c8e7c6"/><path d="M939.0,764.0 C943.0,764.0 961.0,762.0 963.0,764.0 C965.0,766.0 955.0,776.0 951.0,776.0 C947.0,776.0 941.0,766.0 939.0,764.0" fill="#c8e7c6"/><path d="M985.0,764.0 C990.0,764.0 1010.0,762.8 1015.0,764.0 C1020.0,765.2 1019.7,769.8 1015.0,771.0 C1010.3,772.2 992.0,772.2 987.0,771.0 C982.0,769.8 985.3,765.2 985.0,764.0" fill="#c8e7c6"/><path d="M874.5,852.5 C882.2,850.8 913.0,840.2 921.0,842.0 C929.0,843.8 924.0,858.0 922.5,863.0 C921.0,868.0 914.0,867.0 912.0,872.0 C910.0,877.0 919.5,889.5 910.5,893.0 C901.5,896.5 865.8,896.5 858.0,893.0 C850.2,889.5 860.8,876.0 864.0,872.0 C867.2,868.0 875.8,872.2 877.5,869.0 C879.2,865.8 875.0,855.2 874.5,852.5" fill="#c8e7c6"/><path d="M653.5,857.0 C655.5,859.0 665.2,865.8 665.5,869.0 C665.8,872.2 657.0,878.5 655.0,876.5 C653.0,874.5 653.8,860.2 653.5,857.0" fill="#c8e7c6"/><path d="M1208.0,686.0 C1213.0,684.2 1226.0,677.0 1238.0,675.5 C1250.0,674.0 1270.5,677.8 1280.0,677.0 C1289.5,676.2 1285.8,671.8 1295.0,671.0 C1304.2,670.2 1325.0,668.7 1335.0,672.5 C1345.0,676.3 1351.7,686.9 1355.0,694.0 C1358.3,701.1 1362.5,710.3 1355.0,715.0 C1347.5,719.7 1322.0,722.3 1310.0,722.0 C1298.0,721.7 1291.5,715.5 1283.0,713.0 C1274.5,710.5 1266.5,710.0 1259.0,707.0 C1251.5,704.0 1246.5,697.0 1238.0,695.0 C1229.5,693.0 1213.0,696.5 1208.0,695.0 C1203.0,693.5 1208.0,687.5 1208.0,686.0" fill="#c8e7c6"/><path d="M1435.5,731.0 C1437.8,731.2 1444.9,728.5 1449.0,732.5 C1453.1,736.5 1456.5,749.8 1460.0,755.0 C1463.5,760.2 1466.3,758.8 1470.0,764.0 C1473.7,769.2 1482.0,779.0 1482.0,786.5 C1482.0,794.0 1472.5,802.8 1470.0,809.0 C1467.5,815.2 1469.5,820.5 1467.0,824.0 C1464.5,827.5 1459.5,830.5 1455.0,830.0 C1450.5,829.5 1444.0,824.5 1440.0,821.0 C1436.0,817.5 1432.2,818.5 1431.0,809.0 C1429.8,799.5 1431.8,777.0 1432.5,764.0 C1433.2,751.0 1435.0,736.5 1435.5,731.0" fill="#c8e7c6"/><path d="M1335.0,678.5 C1338.0,679.0 1349.8,676.8 1353.0,681.5 C1356.2,686.2 1357.5,701.2 1354.5,707.0 C1351.5,712.8 1338.2,720.8 1335.0,716.0 C1331.8,711.2 1335.0,684.8 1335.0,678.5" fill="#c8e7c6"/><path d="M1440.0,666.5 C1445.0,666.2 1461.5,668.8 1470.0,665.0 C1478.5,661.2 1487.5,636.0 1491.0,644.0 C1494.5,652.0 1493.0,702.0 1491.0,713.0 C1489.0,724.0 1481.2,712.2 1479.0,710.0 C1476.8,707.8 1483.5,701.8 1477.5,699.5 C1471.5,697.2 1449.2,702.0 1443.0,696.5 C1436.8,691.0 1440.5,671.5 1440.0,666.5" fill="#c8e7c6"/><path d="M1395.0,875.0 C1397.0,872.5 1399.5,863.0 1407.0,860.0 C1414.5,857.0 1433.0,859.0 1440.0,857.0 C1447.0,855.0 1445.2,849.0 1449.0,848.0 C1452.8,847.0 1460.5,847.5 1462.5,851.0 C1464.5,854.5 1464.8,864.0 1461.0,869.0 C1457.2,874.0 1451.0,879.0 1440.0,881.0 C1429.0,883.0 1402.5,882.0 1395.0,881.0 C1387.5,880.0 1395.0,876.0 1395.0,875.0" fill="#c8e7c6"/><path d="M880.0,590.0 C883.3,590.0 895.8,585.0 900.0,590.0 C904.2,595.0 908.3,614.2 905.0,620.0 C901.7,625.8 884.2,630.0 880.0,625.0 C875.8,620.0 880.0,595.8 880.0,590.0" fill="#c8e7c6"/><path d="M592.0,500.0 C595.5,500.0 609.5,498.5 613.0,500.0 C616.5,501.5 616.5,507.5 613.0,509.0 C609.5,510.5 595.5,510.5 592.0,509.0 C588.5,507.5 592.0,501.5 592.0,500.0" fill="#c8e7c6"/><path d="M548.0,575.0 C551.7,575.0 566.3,572.5 570.0,575.0 C573.7,577.5 573.7,587.5 570.0,590.0 C566.3,592.5 551.7,592.5 548.0,590.0 C544.3,587.5 548.0,577.5 548.0,575.0" fill="#c8e7c6"/><path d="M1150.0,430.0 C1154.2,428.3 1170.8,416.7 1175.0,420.0 C1179.2,423.3 1178.3,444.2 1175.0,450.0 C1171.7,455.8 1159.2,458.3 1155.0,455.0 C1150.8,451.7 1150.8,434.2 1150.0,430.0" fill="#c8e7c6"/><path d="M1221.5,479.0 L1259.0,479.0 L1260.5,513.5 L1229.0,518.0Z" fill="#d5ecd0"/><path d="M1197.5,746.0 L1250.0,713.0 L1265.0,714.5 L1238.0,746.0 L1220.0,764.0 L1202.0,764.0Z" fill="#d2ebcc"/><path d="M535.0,410.0 L553.0,411.0 L583.0,413.0 L616.0,411.0 L634.0,407.0 L654.0,398.0 L668.0,387.7 L679.0,375.6 L686.8,359.0 L739.2,359.0 L733.5,378.4 L724.0,394.3 L711.0,408.3 L700.0,415.8 L692.0,425.0 L685.0,437.0 L661.0,449.0 L637.0,456.0 L610.0,459.5 L571.0,458.0 L544.0,458.0 L535.0,461.0Z" fill="#aadafc"/><path d="M535.0,473.0 C537.0,474.0 542.5,476.5 547.0,479.0 C551.5,481.5 561.0,484.5 562.0,488.0 C563.0,491.5 556.0,496.0 553.0,500.0 C550.0,504.0 547.0,508.3 544.0,512.0 C541.0,515.7 536.5,520.3 535.0,522.0Z" fill="#aadafc"/><path d="M1328.0,371.0 L1344.0,371.0 L1341.0,383.0 L1333.0,384.0Z" fill="#aadafc"/><path d="M1250.0,432.0 L1265.0,429.0 L1262.0,441.0 L1251.0,443.0Z" fill="#aadafc"/><path d="M535.0,432.0 C542.5,432.8 565.8,436.8 580.0,437.0 C594.2,437.2 606.7,436.7 620.0,433.0 C633.3,429.3 646.7,422.5 660.0,415.0 C673.3,407.5 690.0,397.3 700.0,388.0 C710.0,378.7 716.7,363.8 720.0,359.0" fill="none" stroke="#8fb9e0" stroke-width="0.8" stroke-dasharray="4 3"/><path d="M535.0,440.0 C544.2,441.0 573.3,446.0 590.0,446.0 C606.7,446.0 620.8,444.3 635.0,440.0 C649.2,435.7 662.5,428.3 675.0,420.0 C687.5,411.7 701.3,400.2 710.0,390.0 C718.7,379.8 724.2,364.2 727.0,359.0" fill="none" stroke="#8fb9e0" stroke-width="0.8" stroke-dasharray="4 3"/><path d="M595.0,764.0 C593.8,768.5 592.5,782.2 587.5,791.0 C582.5,799.8 566.2,806.0 565.0,816.5 C563.8,827.0 577.5,841.1 580.0,854.0 C582.5,866.9 580.0,887.3 580.0,894.0" fill="none" stroke="#a8cdee" stroke-width="1.2"/><path d="M535.0,692.0 C538.8,695.5 550.0,704.5 557.5,713.0 C565.0,721.5 573.8,734.5 580.0,743.0 C586.2,751.5 592.5,760.5 595.0,764.0" fill="none" stroke="#b8d4ee" stroke-width="1.2"/><path d="M535.0,383.0 C538.8,384.2 550.0,388.5 557.5,390.5 C565.0,392.5 572.5,394.5 580.0,395.0 C587.5,395.5 595.0,395.0 602.5,393.5 C610.0,392.0 617.5,389.2 625.0,386.0 C632.5,382.8 642.5,378.5 647.5,374.0 C652.5,369.5 653.8,361.5 655.0,359.0" fill="none" stroke="#fdfdfd" stroke-width="4.5" stroke-linecap="round" stroke-linejoin="round"/><path d="M625.0,401.0 C628.8,399.8 640.8,396.5 647.5,393.5 C654.2,390.5 660.5,387.2 665.5,383.0 C670.5,378.8 675.1,372.0 677.5,368.0 C679.9,364.0 679.6,360.5 680.0,359.0" fill="none" stroke="#fdfdfd" stroke-width="2.5" stroke-linecap="round" stroke-linejoin="round"/><path d="M581.5,359.0 L586.0,408.5" fill="none" stroke="#fdfdfd" stroke-width="1.8" stroke-linecap="round" stroke-linejoin="round"/><path d="M616.0,392.0 L619.0,408.5" fill="none" stroke="#fdfdfd" stroke-width="1.8" stroke-linecap="round" stroke-linejoin="round"/><path d="M550.0,401.0 L617.5,399.5" fill="none" stroke="#fdfdfd" stroke-width="1.8" stroke-linecap="round" stroke-linejoin="round"/><path d="M553.0,368.0 L580.0,365.0" fill="none" stroke="#fdfdfd" stroke-width="1.8" stroke-linecap="round" stroke-linejoin="round"/><path d="M628.0,359.0 L623.5,384.5" fill="none" stroke="#fdfdfd" stroke-width="1.8" stroke-linecap="round" stroke-linejoin="round"/><path d="M535.0,407.0 C542.5,408.2 566.2,414.0 580.0,414.5 C593.8,415.0 611.2,410.8 617.5,410.0" fill="none" stroke="#fdfdfd" stroke-width="2.2" stroke-linecap="round" stroke-linejoin="round"/><path d="M539.0,359.0 L535.0,383.0" fill="none" stroke="#fdfdfd" stroke-width="1.8" stroke-linecap="round" stroke-linejoin="round"/><path d="M552.0,385.0 L565.0,359.0" fill="none" stroke="#fdfdfd" stroke-width="1.5" stroke-linecap="round" stroke-linejoin="round"/><path d="M600.0,359.0 L604.0,393.0" fill="none" stroke="#fdfdfd" stroke-width="1.5" stroke-linecap="round" stroke-linejoin="round"/><path d="M640.0,380.0 L650.0,392.0" fill="none" stroke="#fdfdfd" stroke-width="1.5" stroke-linecap="round" stroke-linejoin="round"/><path d="M560.0,396.0 L562.0,410.0" fill="none" stroke="#fdfdfd" stroke-width="1.5" stroke-linecap="round" stroke-linejoin="round"/><path d="M540.0,470.0 C550.0,470.8 586.7,473.7 600.0,475.0 C613.3,476.3 616.7,477.5 620.0,478.0" fill="none" stroke="#fdfdfd" stroke-width="1.5" stroke-linecap="round" stroke-linejoin="round"/><path d="M550.0,462.0 L552.0,482.0" fill="none" stroke="#fdfdfd" stroke-width="1.5" stroke-linecap="round" stroke-linejoin="round"/><path d="M575.0,462.0 L576.0,490.0" fill="none" stroke="#fdfdfd" stroke-width="1.5" stroke-linecap="round" stroke-linejoin="round"/><path d="M596.0,462.0 L598.0,494.0" fill="none" stroke="#fdfdfd" stroke-width="1.5" stroke-linecap="round" stroke-linejoin="round"/><path d="M655.0,470.0 L695.0,452.0" fill="none" stroke="#fdfdfd" stroke-width="2.0" stroke-linecap="round" stroke-linejoin="round"/><path d="M670.0,455.0 L690.0,485.0" fill="none" stroke="#fdfdfd" stroke-width="1.5" stroke-linecap="round" stroke-linejoin="round"/><path d="M655.0,485.0 L695.0,470.0" fill="none" stroke="#fdfdfd" stroke-width="1.5" stroke-linecap="round" stroke-linejoin="round"/><path d="M815.0,359.0 C812.5,364.0 802.8,379.5 800.0,389.0 C797.2,398.5 798.8,411.5 798.5,416.0" fill="none" stroke="#fdfdfd" stroke-width="2.5" stroke-linecap="round" stroke-linejoin="round"/><path d="M809.0,422.0 L812.0,494.0" fill="none" stroke="#fdfdfd" stroke-width="1.8" stroke-linecap="round" stroke-linejoin="round"/><path d="M773.0,360.0 L815.0,360.0" fill="none" stroke="#fdfdfd" stroke-width="1.5" stroke-linecap="round" stroke-linejoin="round"/><path d="M764.0,369.5 L800.0,369.5" fill="none" stroke="#fdfdfd" stroke-width="1.5" stroke-linecap="round" stroke-linejoin="round"/><path d="M773.0,359.0 L768.5,431.0" fill="none" stroke="#fdfdfd" stroke-width="1.8" stroke-linecap="round" stroke-linejoin="round"/><path d="M779.0,371.0 L777.5,398.0" fill="none" stroke="#fdfdfd" stroke-width="1.5" stroke-linecap="round" stroke-linejoin="round"/><path d="M759.5,393.5 L759.5,431.0" fill="none" stroke="#fdfdfd" stroke-width="1.5" stroke-linecap="round" stroke-linejoin="round"/><path d="M728.0,402.5 L792.5,407.0" fill="none" stroke="#fdfdfd" stroke-width="1.8" stroke-linecap="round" stroke-linejoin="round"/><path d="M713.0,416.0 C717.5,423.5 733.5,448.0 740.0,461.0 C746.5,474.0 750.0,488.5 752.0,494.0" fill="none" stroke="#fdfdfd" stroke-width="1.5" stroke-linecap="round" stroke-linejoin="round"/><path d="M729.5,423.5 L750.5,404.0" fill="none" stroke="#fdfdfd" stroke-width="1.5" stroke-linecap="round" stroke-linejoin="round"/><path d="M827.0,423.5 C828.5,423.5 834.5,420.2 836.0,423.5 C837.5,426.8 840.0,439.8 836.0,443.0 C832.0,446.2 816.0,443.0 812.0,443.0" fill="none" stroke="#fdfdfd" stroke-width="1.5" stroke-linecap="round" stroke-linejoin="round"/><path d="M848.0,416.0 C848.0,421.5 854.0,442.5 848.0,449.0 C842.0,455.5 818.0,454.0 812.0,455.0" fill="none" stroke="#fdfdfd" stroke-width="1.5" stroke-linecap="round" stroke-linejoin="round"/><path d="M782.0,408.5 L794.0,467.0" fill="none" stroke="#fdfdfd" stroke-width="1.8" stroke-linecap="round" stroke-linejoin="round"/><path d="M788.0,422.0 L800.0,467.0" fill="none" stroke="#fdfdfd" stroke-width="1.5" stroke-linecap="round" stroke-linejoin="round"/><path d="M812.0,467.0 C816.2,467.0 834.5,462.5 837.5,467.0 C840.5,471.5 831.2,489.5 830.0,494.0" fill="none" stroke="#fdfdfd" stroke-width="1.5" stroke-linecap="round" stroke-linejoin="round"/><path d="M815.0,476.0 L855.0,471.5" fill="none" stroke="#fdfdfd" stroke-width="1.5" stroke-linecap="round" stroke-linejoin="round"/><path d="M695.0,491.0 L747.5,482.0" fill="none" stroke="#fdfdfd" stroke-width="1.5" stroke-linecap="round" stroke-linejoin="round"/><path d="M695.0,452.0 L732.0,437.0" fill="none" stroke="#fdfdfd" stroke-width="1.5" stroke-linecap="round" stroke-linejoin="round"/><path d="M705.0,443.0 L722.0,480.0" fill="none" stroke="#fdfdfd" stroke-width="1.5" stroke-linecap="round" stroke-linejoin="round"/><path d="M760.0,440.0 L785.0,470.0" fill="none" stroke="#fdfdfd" stroke-width="1.5" stroke-linecap="round" stroke-linejoin="round"/><path d="M840.0,370.0 L855.0,400.0" fill="none" stroke="#fdfdfd" stroke-width="1.5" stroke-linecap="round" stroke-linejoin="round"/><path d="M830.0,380.0 L835.0,410.0" fill="none" stroke="#fdfdfd" stroke-width="1.5" stroke-linecap="round" stroke-linejoin="round"/><path d="M790.0,440.0 L780.0,470.0" fill="none" stroke="#fdfdfd" stroke-width="1.5" stroke-linecap="round" stroke-linejoin="round"/><path d="M565.0,494.0 C561.2,499.8 546.8,519.8 542.5,528.5 C538.2,537.2 539.5,541.0 539.5,546.5 C539.5,552.0 541.2,557.2 542.5,561.5 C543.8,565.8 546.2,570.2 547.0,572.0" fill="none" stroke="#fdfdfd" stroke-width="4.0" stroke-linecap="round" stroke-linejoin="round"/><path d="M535.0,579.5 C542.5,575.8 568.8,562.2 580.0,557.0 C591.2,551.8 596.0,553.0 602.5,548.0 C609.0,543.0 612.2,534.5 619.0,527.0 C625.8,519.5 637.0,508.5 643.0,503.0 C649.0,497.5 653.0,495.5 655.0,494.0" fill="none" stroke="#fdfdfd" stroke-width="4.5" stroke-linecap="round" stroke-linejoin="round"/><path d="M568.0,629.0 C570.8,622.0 579.8,599.5 584.5,587.0 C589.2,574.5 593.5,560.8 596.5,554.0 C599.5,547.2 601.5,547.8 602.5,546.5" fill="none" stroke="#fdfdfd" stroke-width="4.0" stroke-linecap="round" stroke-linejoin="round"/><path d="M640.0,498.5 C643.0,507.2 654.0,538.8 658.0,551.0 C662.0,563.2 661.0,566.0 664.0,572.0 C667.0,578.0 672.5,581.0 676.0,587.0 C679.5,593.0 682.0,601.0 685.0,608.0 C688.0,615.0 692.5,625.5 694.0,629.0" fill="none" stroke="#fdfdfd" stroke-width="2.0" stroke-linecap="round" stroke-linejoin="round"/><path d="M643.0,524.0 L695.0,498.5" fill="none" stroke="#fdfdfd" stroke-width="1.8" stroke-linecap="round" stroke-linejoin="round"/><path d="M610.0,543.5 C612.5,547.8 624.0,561.0 625.0,569.0 C626.0,577.0 615.0,581.5 616.0,591.5 C617.0,601.5 628.5,622.8 631.0,629.0" fill="none" stroke="#fdfdfd" stroke-width="1.8" stroke-linecap="round" stroke-linejoin="round"/><path d="M544.0,578.0 L619.0,584.0" fill="none" stroke="#fdfdfd" stroke-width="1.8" stroke-linecap="round" stroke-linejoin="round"/><path d="M539.5,587.0 L610.0,593.0" fill="none" stroke="#fdfdfd" stroke-width="1.8" stroke-linecap="round" stroke-linejoin="round"/><path d="M535.0,591.0 C542.5,594.3 569.5,606.2 580.0,611.0 C590.5,615.8 595.0,618.5 598.0,620.0" fill="none" stroke="#fdfdfd" stroke-width="1.5" stroke-linecap="round" stroke-linejoin="round"/><path d="M535.0,614.0 C540.0,613.5 557.0,612.0 565.0,611.0 C573.0,610.0 580.0,608.5 583.0,608.0" fill="none" stroke="#fdfdfd" stroke-width="1.5" stroke-linecap="round" stroke-linejoin="round"/><path d="M592.0,608.0 C596.5,607.0 606.5,604.5 619.0,602.0 C631.5,599.5 657.0,593.0 667.0,593.0 C677.0,593.0 677.0,600.5 679.0,602.0" fill="none" stroke="#fdfdfd" stroke-width="1.8" stroke-linecap="round" stroke-linejoin="round"/><path d="M619.0,593.0 L658.0,552.5" fill="none" stroke="#fdfdfd" stroke-width="1.8" stroke-linecap="round" stroke-linejoin="round"/><path d="M625.0,599.0 L637.0,629.0" fill="none" stroke="#fdfdfd" stroke-width="1.5" stroke-linecap="round" stroke-linejoin="round"/><path d="M592.0,614.0 L676.0,611.0" fill="none" stroke="#fdfdfd" stroke-width="1.5" stroke-linecap="round" stroke-linejoin="round"/><path d="M565.0,528.5 C570.0,526.2 586.0,517.8 595.0,515.0 C604.0,512.2 615.0,512.5 619.0,512.0" fill="none" stroke="#fdfdfd" stroke-width="1.5" stroke-linecap="round" stroke-linejoin="round"/><path d="M572.5,494.0 C574.5,499.5 582.0,519.0 584.5,527.0 C587.0,535.0 587.0,539.5 587.5,542.0" fill="none" stroke="#fdfdfd" stroke-width="1.5" stroke-linecap="round" stroke-linejoin="round"/><path d="M628.0,543.0 C630.0,543.5 638.5,543.7 640.0,546.0 C641.5,548.3 639.5,555.0 637.0,557.0 C634.5,559.0 627.0,557.8 625.0,558.0" fill="none" stroke="#fdfdfd" stroke-width="1.5" stroke-linecap="round" stroke-linejoin="round"/><path d="M544.0,531.0 C545.5,532.8 548.3,542.0 553.0,542.0 C557.7,542.0 568.8,532.8 572.0,531.0" fill="none" stroke="#fdfdfd" stroke-width="1.5" stroke-linecap="round" stroke-linejoin="round"/><path d="M598.0,566.0 C601.5,565.5 614.0,564.5 619.0,563.0 C624.0,561.5 626.5,558.0 628.0,557.0" fill="none" stroke="#fdfdfd" stroke-width="1.5" stroke-linecap="round" stroke-linejoin="round"/><path d="M551.0,578.0 L548.0,629.0" fill="none" stroke="#fdfdfd" stroke-width="1.5" stroke-linecap="round" stroke-linejoin="round"/><path d="M567.0,583.0 L568.0,600.0" fill="none" stroke="#fdfdfd" stroke-width="1.5" stroke-linecap="round" stroke-linejoin="round"/><path d="M752.0,494.0 C756.0,498.5 765.5,507.2 776.0,521.0 C786.5,534.8 803.5,559.8 815.0,576.5 C826.5,593.2 839.2,612.8 845.0,621.5 C850.8,630.2 849.2,627.8 850.0,629.0" fill="none" stroke="#fdfdfd" stroke-width="1.8" stroke-linecap="round" stroke-linejoin="round"/><path d="M695.0,560.0 L755.0,596.0" fill="none" stroke="#fdfdfd" stroke-width="1.3" stroke-linecap="round" stroke-linejoin="round"/><path d="M716.0,555.5 L758.0,629.0" fill="none" stroke="#fdfdfd" stroke-width="1.3" stroke-linecap="round" stroke-linejoin="round"/><path d="M825.5,590.0 L824.0,629.0" fill="none" stroke="#fdfdfd" stroke-width="1.5" stroke-linecap="round" stroke-linejoin="round"/><path d="M792.0,494.0 L794.0,512.0" fill="none" stroke="#fdfdfd" stroke-width="1.5" stroke-linecap="round" stroke-linejoin="round"/><path d="M809.0,494.0 L806.0,564.0" fill="none" stroke="#fdfdfd" stroke-width="1.5" stroke-linecap="round" stroke-linejoin="round"/><path d="M824.0,494.0 L818.0,531.0" fill="none" stroke="#fdfdfd" stroke-width="1.5" stroke-linecap="round" stroke-linejoin="round"/><path d="M836.0,494.0 L830.0,569.0" fill="none" stroke="#fdfdfd" stroke-width="1.5" stroke-linecap="round" stroke-linejoin="round"/><path d="M852.0,494.0 L848.0,567.0" fill="none" stroke="#fdfdfd" stroke-width="1.5" stroke-linecap="round" stroke-linejoin="round"/><path d="M788.0,530.0 L806.0,530.0" fill="none" stroke="#fdfdfd" stroke-width="1.5" stroke-linecap="round" stroke-linejoin="round"/><path d="M812.0,569.0 L855.0,566.0" fill="none" stroke="#fdfdfd" stroke-width="1.5" stroke-linecap="round" stroke-linejoin="round"/><path d="M912.0,359.0 C910.8,364.0 906.5,381.5 904.5,389.0 C902.5,396.5 900.8,401.5 900.0,404.0" fill="none" stroke="#fdfdfd" stroke-width="2.5" stroke-linecap="round" stroke-linejoin="round"/><path d="M855.0,375.5 L892.5,398.0" fill="none" stroke="#fdfdfd" stroke-width="2.0" stroke-linecap="round" stroke-linejoin="round"/><path d="M885.0,437.0 L930.0,440.0" fill="none" stroke="#fdfdfd" stroke-width="1.6" stroke-linecap="round" stroke-linejoin="round"/><path d="M855.0,464.0 L930.0,455.0" fill="none" stroke="#fdfdfd" stroke-width="1.6" stroke-linecap="round" stroke-linejoin="round"/><path d="M882.0,396.0 L889.0,494.0" fill="none" stroke="#fdfdfd" stroke-width="1.6" stroke-linecap="round" stroke-linejoin="round"/><path d="M895.0,413.0 L895.0,441.0" fill="none" stroke="#fdfdfd" stroke-width="1.6" stroke-linecap="round" stroke-linejoin="round"/><path d="M905.0,413.0 L905.0,443.0" fill="none" stroke="#fdfdfd" stroke-width="1.6" stroke-linecap="round" stroke-linejoin="round"/><path d="M903.0,458.0 L903.0,494.0" fill="none" stroke="#fdfdfd" stroke-width="1.6" stroke-linecap="round" stroke-linejoin="round"/><path d="M915.0,456.0 L918.0,494.0" fill="none" stroke="#fdfdfd" stroke-width="1.6" stroke-linecap="round" stroke-linejoin="round"/><path d="M937.0,404.0 L939.0,437.0" fill="none" stroke="#fdfdfd" stroke-width="1.6" stroke-linecap="round" stroke-linejoin="round"/><path d="M948.0,404.0 L948.0,437.0" fill="none" stroke="#fdfdfd" stroke-width="1.6" stroke-linecap="round" stroke-linejoin="round"/><path d="M960.0,402.0 L960.0,434.0" fill="none" stroke="#fdfdfd" stroke-width="1.6" stroke-linecap="round" stroke-linejoin="round"/><path d="M981.0,400.0 C982.5,405.7 986.0,420.7 990.0,434.0 C994.0,447.3 1002.5,472.3 1005.0,480.0" fill="none" stroke="#fdfdfd" stroke-width="1.6" stroke-linecap="round" stroke-linejoin="round"/><path d="M945.0,437.0 L983.0,432.0" fill="none" stroke="#fdfdfd" stroke-width="1.6" stroke-linecap="round" stroke-linejoin="round"/><path d="M982.5,431.0 L1015.0,416.0" fill="none" stroke="#fdfdfd" stroke-width="1.6" stroke-linecap="round" stroke-linejoin="round"/><path d="M963.0,473.0 L1015.0,452.0" fill="none" stroke="#fdfdfd" stroke-width="1.6" stroke-linecap="round" stroke-linejoin="round"/><path d="M960.0,486.0 L1015.0,473.0" fill="none" stroke="#fdfdfd" stroke-width="1.6" stroke-linecap="round" stroke-linejoin="round"/><path d="M855.0,395.0 L875.0,392.0" fill="none" stroke="#fdfdfd" stroke-width="1.6" stroke-linecap="round" stroke-linejoin="round"/><path d="M858.0,419.0 L858.0,440.0" fill="none" stroke="#fdfdfd" stroke-width="1.6" stroke-linecap="round" stroke-linejoin="round"/><path d="M870.0,419.0 L872.0,428.0" fill="none" stroke="#fdfdfd" stroke-width="1.6" stroke-linecap="round" stroke-linejoin="round"/><path d="M1015.0,422.0 C1025.0,418.5 1062.0,405.8 1075.0,401.0 C1088.0,396.2 1084.0,394.5 1093.0,393.5 C1102.0,392.5 1120.5,394.2 1129.0,395.0 C1137.5,395.8 1140.0,394.5 1144.0,398.0 C1148.0,401.5 1151.5,413.0 1153.0,416.0" fill="none" stroke="#fdfdfd" stroke-width="2.0" stroke-linecap="round" stroke-linejoin="round"/><path d="M1138.0,359.0 C1138.0,361.2 1140.0,365.0 1138.0,372.5 C1136.0,380.0 1127.5,393.8 1126.0,404.0 C1124.5,414.2 1126.5,426.5 1129.0,434.0 C1131.5,441.5 1139.0,439.0 1141.0,449.0 C1143.0,459.0 1141.0,486.5 1141.0,494.0" fill="none" stroke="#fdfdfd" stroke-width="2.0" stroke-linecap="round" stroke-linejoin="round"/><path d="M1138.0,372.5 C1142.0,377.5 1155.8,399.0 1162.0,402.5 C1168.2,406.0 1172.8,395.0 1175.0,393.5" fill="none" stroke="#fdfdfd" stroke-width="2.0" stroke-linecap="round" stroke-linejoin="round"/><path d="M1162.0,402.5 C1159.0,409.2 1147.8,434.8 1144.0,443.0 C1140.2,451.2 1140.2,450.5 1139.5,452.0" fill="none" stroke="#fdfdfd" stroke-width="2.0" stroke-linecap="round" stroke-linejoin="round"/><path d="M1015.0,443.0 L1052.5,431.0" fill="none" stroke="#fdfdfd" stroke-width="1.6" stroke-linecap="round" stroke-linejoin="round"/><path d="M1015.0,452.0 L1037.0,422.0" fill="none" stroke="#fdfdfd" stroke-width="1.6" stroke-linecap="round" stroke-linejoin="round"/><path d="M1033.0,464.0 L1060.0,443.0" fill="none" stroke="#fdfdfd" stroke-width="1.6" stroke-linecap="round" stroke-linejoin="round"/><path d="M1015.0,486.0 C1022.5,482.3 1048.8,470.7 1060.0,464.0 C1071.2,457.3 1078.3,449.0 1082.0,446.0" fill="none" stroke="#fdfdfd" stroke-width="1.6" stroke-linecap="round" stroke-linejoin="round"/><path d="M1087.0,446.0 C1088.0,448.0 1086.5,456.0 1093.0,458.0 C1099.5,460.0 1119.0,459.0 1126.0,458.0 C1133.0,457.0 1133.5,453.0 1135.0,452.0" fill="none" stroke="#fdfdfd" stroke-width="1.6" stroke-linecap="round" stroke-linejoin="round"/><path d="M1111.0,431.0 L1135.0,428.0" fill="none" stroke="#fdfdfd" stroke-width="1.6" stroke-linecap="round" stroke-linejoin="round"/><path d="M1015.0,419.0 C1017.0,425.2 1023.0,443.5 1027.0,456.0 C1031.0,468.5 1037.0,487.7 1039.0,494.0" fill="none" stroke="#fdfdfd" stroke-width="1.6" stroke-linecap="round" stroke-linejoin="round"/><path d="M1039.0,464.0 L1066.0,494.0" fill="none" stroke="#fdfdfd" stroke-width="1.6" stroke-linecap="round" stroke-linejoin="round"/><path d="M1093.0,410.0 L1104.0,424.0" fill="none" stroke="#fdfdfd" stroke-width="1.6" stroke-linecap="round" stroke-linejoin="round"/><path d="M1155.0,440.0 L1160.0,494.0" fill="none" stroke="#fdfdfd" stroke-width="1.6" stroke-linecap="round" stroke-linejoin="round"/><path d="M1153.0,416.0 L1175.0,440.0" fill="none" stroke="#fdfdfd" stroke-width="1.6" stroke-linecap="round" stroke-linejoin="round"/><path d="M915.0,584.0 L885.0,629.0" fill="none" stroke="#fdfdfd" stroke-width="2.8" stroke-linecap="round" stroke-linejoin="round"/><path d="M855.0,584.0 C858.2,581.0 868.2,570.0 874.5,566.0 C880.8,562.0 889.5,561.0 892.5,560.0" fill="none" stroke="#fdfdfd" stroke-width="2.2" stroke-linecap="round" stroke-linejoin="round"/><path d="M855.0,596.0 L972.0,581.0" fill="none" stroke="#fdfdfd" stroke-width="2.0" stroke-linecap="round" stroke-linejoin="round"/><path d="M855.0,575.0 L885.0,572.0" fill="none" stroke="#fdfdfd" stroke-width="1.6" stroke-linecap="round" stroke-linejoin="round"/><path d="M882.0,494.0 L877.0,539.0" fill="none" stroke="#fdfdfd" stroke-width="1.6" stroke-linecap="round" stroke-linejoin="round"/><path d="M903.0,494.0 L900.0,539.0" fill="none" stroke="#fdfdfd" stroke-width="1.6" stroke-linecap="round" stroke-linejoin="round"/><path d="M924.0,494.0 L919.0,539.0" fill="none" stroke="#fdfdfd" stroke-width="1.6" stroke-linecap="round" stroke-linejoin="round"/><path d="M933.0,494.0 L934.0,524.0" fill="none" stroke="#fdfdfd" stroke-width="1.6" stroke-linecap="round" stroke-linejoin="round"/><path d="M960.0,494.0 L963.0,539.0" fill="none" stroke="#fdfdfd" stroke-width="1.6" stroke-linecap="round" stroke-linejoin="round"/><path d="M972.0,494.0 L973.0,569.0" fill="none" stroke="#fdfdfd" stroke-width="1.6" stroke-linecap="round" stroke-linejoin="round"/><path d="M982.0,494.0 L985.0,578.0" fill="none" stroke="#fdfdfd" stroke-width="1.6" stroke-linecap="round" stroke-linejoin="round"/><path d="M997.0,494.0 L999.0,584.0" fill="none" stroke="#fdfdfd" stroke-width="1.6" stroke-linecap="round" stroke-linejoin="round"/><path d="M865.0,620.0 L960.0,605.0" fill="none" stroke="#fdfdfd" stroke-width="1.6" stroke-linecap="round" stroke-linejoin="round"/><path d="M870.0,505.0 L880.0,500.0" fill="none" stroke="#fdfdfd" stroke-width="1.6" stroke-linecap="round" stroke-linejoin="round"/><path d="M857.0,520.0 L878.0,510.0" fill="none" stroke="#fdfdfd" stroke-width="1.6" stroke-linecap="round" stroke-linejoin="round"/><path d="M1064.5,519.5 C1069.8,518.0 1090.6,514.8 1096.0,510.5 C1101.4,506.2 1096.8,496.8 1097.0,494.0" fill="none" stroke="#fdfdfd" stroke-width="2.6" stroke-linecap="round" stroke-linejoin="round"/><path d="M1103.0,528.5 L1129.0,573.5" fill="none" stroke="#fdfdfd" stroke-width="2.0" stroke-linecap="round" stroke-linejoin="round"/><path d="M1103.0,528.5 C1097.8,536.2 1077.4,563.2 1072.0,575.0 C1066.6,586.8 1070.8,595.0 1070.5,599.0" fill="none" stroke="#fdfdfd" stroke-width="2.0" stroke-linecap="round" stroke-linejoin="round"/><path d="M1088.5,533.0 L1072.0,575.0" fill="none" stroke="#fdfdfd" stroke-width="1.6" stroke-linecap="round" stroke-linejoin="round"/><path d="M1103.0,528.5 L1079.5,599.0" fill="none" stroke="#fdfdfd" stroke-width="1.6" stroke-linecap="round" stroke-linejoin="round"/><path d="M1072.0,576.5 L1129.0,579.5" fill="none" stroke="#fdfdfd" stroke-width="1.8" stroke-linecap="round" stroke-linejoin="round"/><path d="M1090.0,566.0 L1126.0,567.5" fill="none" stroke="#fdfdfd" stroke-width="1.6" stroke-linecap="round" stroke-linejoin="round"/><path d="M1112.5,537.5 L1162.0,543.5" fill="none" stroke="#fdfdfd" stroke-width="1.6" stroke-linecap="round" stroke-linejoin="round"/><path d="M1120.0,551.0 L1150.0,557.0" fill="none" stroke="#fdfdfd" stroke-width="1.6" stroke-linecap="round" stroke-linejoin="round"/><path d="M1150.0,530.0 L1147.0,554.0" fill="none" stroke="#fdfdfd" stroke-width="1.6" stroke-linecap="round" stroke-linejoin="round"/><path d="M1060.0,494.0 C1058.8,496.5 1051.8,496.5 1052.5,509.0 C1053.2,521.5 1061.2,558.0 1064.5,569.0 C1067.8,580.0 1070.8,574.0 1072.0,575.0" fill="none" stroke="#fdfdfd" stroke-width="1.6" stroke-linecap="round" stroke-linejoin="round"/><path d="M1030.0,500.0 L1039.0,560.0" fill="none" stroke="#fdfdfd" stroke-width="1.6" stroke-linecap="round" stroke-linejoin="round"/><path d="M1045.0,500.0 L1049.0,560.0" fill="none" stroke="#fdfdfd" stroke-width="1.6" stroke-linecap="round" stroke-linejoin="round"/><path d="M1030.0,560.0 L1049.0,560.0" fill="none" stroke="#fdfdfd" stroke-width="1.6" stroke-linecap="round" stroke-linejoin="round"/><path d="M1037.5,587.0 L1045.0,629.0" fill="none" stroke="#fdfdfd" stroke-width="1.6" stroke-linecap="round" stroke-linejoin="round"/><path d="M1088.5,608.0 L1088.0,629.0" fill="none" stroke="#fdfdfd" stroke-width="1.6" stroke-linecap="round" stroke-linejoin="round"/><path d="M1015.0,621.5 C1023.2,620.8 1052.0,619.2 1064.5,617.0 C1077.0,614.8 1085.8,609.5 1090.0,608.0" fill="none" stroke="#fdfdfd" stroke-width="1.6" stroke-linecap="round" stroke-linejoin="round"/><path d="M1150.0,564.5 L1175.0,557.0" fill="none" stroke="#fdfdfd" stroke-width="1.6" stroke-linecap="round" stroke-linejoin="round"/><path d="M1020.0,494.0 L1030.0,519.0" fill="none" stroke="#fdfdfd" stroke-width="1.6" stroke-linecap="round" stroke-linejoin="round"/><path d="M1175.0,395.0 C1178.8,392.2 1191.2,384.5 1197.5,378.5 C1203.8,372.5 1210.0,362.2 1212.5,359.0" fill="none" stroke="#fdfdfd" stroke-width="2.4" stroke-linecap="round" stroke-linejoin="round"/><path d="M1202.0,359.0 C1205.8,364.0 1219.5,382.8 1224.5,389.0 C1229.5,395.2 1230.8,395.2 1232.0,396.5" fill="none" stroke="#fdfdfd" stroke-width="1.8" stroke-linecap="round" stroke-linejoin="round"/><path d="M1187.0,387.5 C1190.0,391.5 1200.0,401.2 1205.0,411.5 C1210.0,421.8 1213.8,440.2 1217.0,449.0 C1220.2,457.8 1223.2,461.5 1224.5,464.0" fill="none" stroke="#fdfdfd" stroke-width="1.6" stroke-linecap="round" stroke-linejoin="round"/><path d="M1196.0,380.0 C1200.0,385.2 1213.5,403.0 1220.0,411.5 C1226.5,420.0 1232.5,427.8 1235.0,431.0" fill="none" stroke="#fdfdfd" stroke-width="1.6" stroke-linecap="round" stroke-linejoin="round"/><path d="M1242.5,359.0 L1259.0,408.5" fill="none" stroke="#fdfdfd" stroke-width="1.6" stroke-linecap="round" stroke-linejoin="round"/><path d="M1253.0,359.0 L1268.0,408.5" fill="none" stroke="#fdfdfd" stroke-width="1.6" stroke-linecap="round" stroke-linejoin="round"/><path d="M1260.5,389.0 L1298.0,383.0" fill="none" stroke="#fdfdfd" stroke-width="1.6" stroke-linecap="round" stroke-linejoin="round"/><path d="M1272.5,374.0 L1310.0,359.0" fill="none" stroke="#fdfdfd" stroke-width="1.6" stroke-linecap="round" stroke-linejoin="round"/><path d="M1289.0,359.0 C1293.5,365.0 1310.0,385.0 1316.0,395.0 C1322.0,405.0 1323.5,411.2 1325.0,419.0 C1326.5,426.8 1330.0,434.0 1325.0,441.5 C1320.0,449.0 1301.5,455.2 1295.0,464.0 C1288.5,472.8 1287.5,489.0 1286.0,494.0" fill="none" stroke="#fdfdfd" stroke-width="2.0" stroke-linecap="round" stroke-linejoin="round"/><path d="M1283.0,422.0 L1322.0,419.0" fill="none" stroke="#fdfdfd" stroke-width="1.6" stroke-linecap="round" stroke-linejoin="round"/><path d="M1283.0,422.0 L1284.5,464.0" fill="none" stroke="#fdfdfd" stroke-width="1.6" stroke-linecap="round" stroke-linejoin="round"/><path d="M1190.0,431.0 C1191.8,430.0 1198.0,422.0 1200.5,425.0 C1203.0,428.0 1205.5,443.0 1205.0,449.0 C1204.5,455.0 1200.0,459.8 1197.5,461.0 C1195.0,462.2 1191.2,461.5 1190.0,456.5 C1188.8,451.5 1190.0,435.2 1190.0,431.0" fill="none" stroke="#fdfdfd" stroke-width="1.6" stroke-linecap="round" stroke-linejoin="round"/><path d="M1175.0,440.0 L1190.0,470.0" fill="none" stroke="#fdfdfd" stroke-width="1.6" stroke-linecap="round" stroke-linejoin="round"/><path d="M1220.0,396.0 L1250.0,392.0" fill="none" stroke="#fdfdfd" stroke-width="1.6" stroke-linecap="round" stroke-linejoin="round"/><path d="M1235.0,380.0 L1255.0,375.0" fill="none" stroke="#fdfdfd" stroke-width="1.6" stroke-linecap="round" stroke-linejoin="round"/><path d="M1300.0,400.0 L1322.0,395.0" fill="none" stroke="#fdfdfd" stroke-width="1.6" stroke-linecap="round" stroke-linejoin="round"/><path d="M1335.0,389.0 C1341.2,387.2 1361.2,381.5 1372.5,378.5 C1383.8,375.5 1394.2,372.8 1402.5,371.0 C1410.8,369.2 1415.8,370.0 1422.0,368.0 C1428.2,366.0 1437.0,360.5 1440.0,359.0" fill="none" stroke="#fdfdfd" stroke-width="2.8" stroke-linecap="round" stroke-linejoin="round"/><path d="M1422.0,368.0 C1419.5,371.5 1411.5,380.5 1407.0,389.0 C1402.5,397.5 1399.5,411.5 1395.0,419.0 C1390.5,426.5 1383.8,429.0 1380.0,434.0 C1376.2,439.0 1373.8,446.5 1372.5,449.0" fill="none" stroke="#fdfdfd" stroke-width="2.0" stroke-linecap="round" stroke-linejoin="round"/><path d="M1404.0,386.0 C1408.8,391.5 1425.2,408.5 1432.5,419.0 C1439.8,429.5 1444.2,436.5 1447.5,449.0 C1450.8,461.5 1451.2,486.5 1452.0,494.0" fill="none" stroke="#fdfdfd" stroke-width="2.0" stroke-linecap="round" stroke-linejoin="round"/><path d="M1437.0,419.0 L1485.0,428.0" fill="none" stroke="#fdfdfd" stroke-width="1.8" stroke-linecap="round" stroke-linejoin="round"/><path d="M1440.0,441.5 L1485.0,446.0" fill="none" stroke="#fdfdfd" stroke-width="1.8" stroke-linecap="round" stroke-linejoin="round"/><path d="M1467.0,404.0 L1462.5,494.0" fill="none" stroke="#fdfdfd" stroke-width="1.8" stroke-linecap="round" stroke-linejoin="round"/><path d="M1443.0,404.0 L1434.0,422.0" fill="none" stroke="#fdfdfd" stroke-width="1.6" stroke-linecap="round" stroke-linejoin="round"/><path d="M1335.0,404.0 L1377.0,399.5" fill="none" stroke="#fdfdfd" stroke-width="1.6" stroke-linecap="round" stroke-linejoin="round"/><path d="M1335.0,408.5 L1377.0,407.0" fill="none" stroke="#fdfdfd" stroke-width="1.6" stroke-linecap="round" stroke-linejoin="round"/><path d="M1419.0,396.5 L1416.0,479.0" fill="none" stroke="#fdfdfd" stroke-width="1.6" stroke-linecap="round" stroke-linejoin="round"/><path d="M1375.5,449.0 C1381.2,449.0 1404.2,445.2 1410.0,449.0 C1415.8,452.8 1415.0,467.8 1410.0,471.5 C1405.0,475.2 1385.0,471.5 1380.0,471.5" fill="none" stroke="#fdfdfd" stroke-width="1.6" stroke-linecap="round" stroke-linejoin="round"/><path d="M1419.0,434.0 L1431.0,464.0" fill="none" stroke="#fdfdfd" stroke-width="1.6" stroke-linecap="round" stroke-linejoin="round"/><path d="M1350.0,359.0 L1360.0,380.0" fill="none" stroke="#fdfdfd" stroke-width="1.6" stroke-linecap="round" stroke-linejoin="round"/><path d="M1400.0,359.0 L1380.0,375.0" fill="none" stroke="#fdfdfd" stroke-width="1.6" stroke-linecap="round" stroke-linejoin="round"/><path d="M1175.0,542.0 C1177.5,545.0 1190.0,555.0 1190.0,560.0 C1190.0,565.0 1177.5,570.0 1175.0,572.0" fill="none" stroke="#fdfdfd" stroke-width="1.6" stroke-linecap="round" stroke-linejoin="round"/><path d="M1175.0,566.0 L1197.5,560.0" fill="none" stroke="#fdfdfd" stroke-width="1.6" stroke-linecap="round" stroke-linejoin="round"/><path d="M1175.0,605.0 L1220.0,587.0" fill="none" stroke="#fdfdfd" stroke-width="1.6" stroke-linecap="round" stroke-linejoin="round"/><path d="M1175.0,614.0 L1217.0,608.0" fill="none" stroke="#fdfdfd" stroke-width="1.6" stroke-linecap="round" stroke-linejoin="round"/><path d="M1190.0,602.0 L1192.0,629.0" fill="none" stroke="#fdfdfd" stroke-width="1.6" stroke-linecap="round" stroke-linejoin="round"/><path d="M1205.0,596.0 L1207.0,629.0" fill="none" stroke="#fdfdfd" stroke-width="1.6" stroke-linecap="round" stroke-linejoin="round"/><path d="M1265.0,591.0 L1307.0,599.0" fill="none" stroke="#fdfdfd" stroke-width="1.4" stroke-linecap="round" stroke-linejoin="round"/><path d="M1317.0,584.0 L1335.0,584.0" fill="none" stroke="#fdfdfd" stroke-width="1.6" stroke-linecap="round" stroke-linejoin="round"/><path d="M1319.0,599.0 L1335.0,597.5" fill="none" stroke="#fdfdfd" stroke-width="1.6" stroke-linecap="round" stroke-linejoin="round"/><path d="M1310.0,614.0 L1335.0,612.5" fill="none" stroke="#fdfdfd" stroke-width="1.6" stroke-linecap="round" stroke-linejoin="round"/><path d="M1322.0,584.0 L1323.5,629.0" fill="none" stroke="#fdfdfd" stroke-width="1.6" stroke-linecap="round" stroke-linejoin="round"/><path d="M1235.0,554.0 L1250.0,562.0" fill="none" stroke="#fdfdfd" stroke-width="1.4" stroke-linecap="round" stroke-linejoin="round"/><path d="M1446.0,494.0 C1445.0,499.0 1441.0,515.8 1440.0,524.0 C1439.0,532.2 1439.5,533.5 1440.0,543.5 C1440.5,553.5 1443.0,574.8 1443.0,584.0 C1443.0,593.2 1438.5,591.5 1440.0,599.0 C1441.5,606.5 1450.0,624.0 1452.0,629.0" fill="none" stroke="#fdfdfd" stroke-width="2.6" stroke-linecap="round" stroke-linejoin="round"/><path d="M1425.0,498.5 C1421.2,502.8 1411.2,510.8 1402.5,524.0 C1393.8,537.2 1381.2,568.0 1372.5,578.0 C1363.8,588.0 1356.2,585.5 1350.0,584.0 C1343.8,582.5 1337.5,571.5 1335.0,569.0" fill="none" stroke="#fdfdfd" stroke-width="2.0" stroke-linecap="round" stroke-linejoin="round"/><path d="M1350.0,584.0 C1353.2,583.5 1360.8,586.0 1369.5,581.0 C1378.2,576.0 1391.2,563.5 1402.5,554.0 C1413.8,544.5 1431.2,529.0 1437.0,524.0" fill="none" stroke="#fdfdfd" stroke-width="2.0" stroke-linecap="round" stroke-linejoin="round"/><path d="M1402.5,524.0 C1408.8,527.2 1425.5,541.5 1440.0,543.5 C1454.5,545.5 1481.2,537.2 1489.5,536.0" fill="none" stroke="#fdfdfd" stroke-width="2.0" stroke-linecap="round" stroke-linejoin="round"/><path d="M1425.0,498.5 C1426.5,500.2 1431.5,504.8 1434.0,509.0 C1436.5,513.2 1439.0,521.5 1440.0,524.0" fill="none" stroke="#fdfdfd" stroke-width="1.8" stroke-linecap="round" stroke-linejoin="round"/><path d="M1395.0,534.5 L1402.5,581.0" fill="none" stroke="#fdfdfd" stroke-width="1.6" stroke-linecap="round" stroke-linejoin="round"/><path d="M1380.0,539.0 L1384.5,629.0" fill="none" stroke="#fdfdfd" stroke-width="1.6" stroke-linecap="round" stroke-linejoin="round"/><path d="M1395.0,584.0 L1440.0,551.0" fill="none" stroke="#fdfdfd" stroke-width="1.6" stroke-linecap="round" stroke-linejoin="round"/><path d="M1365.0,530.0 L1372.5,578.0" fill="none" stroke="#fdfdfd" stroke-width="1.6" stroke-linecap="round" stroke-linejoin="round"/><path d="M1350.0,581.0 L1359.0,629.0" fill="none" stroke="#fdfdfd" stroke-width="1.6" stroke-linecap="round" stroke-linejoin="round"/><path d="M1452.0,543.5 L1489.5,537.5" fill="none" stroke="#fdfdfd" stroke-width="1.6" stroke-linecap="round" stroke-linejoin="round"/><path d="M1452.0,569.0 L1489.5,569.0" fill="none" stroke="#fdfdfd" stroke-width="1.6" stroke-linecap="round" stroke-linejoin="round"/><path d="M1489.5,572.0 C1486.2,573.5 1475.8,574.0 1470.0,581.0 C1464.2,588.0 1458.8,606.0 1455.0,614.0 C1451.2,622.0 1448.8,626.5 1447.5,629.0" fill="none" stroke="#fdfdfd" stroke-width="1.6" stroke-linecap="round" stroke-linejoin="round"/><path d="M1473.0,494.0 L1476.0,536.0" fill="none" stroke="#fdfdfd" stroke-width="1.6" stroke-linecap="round" stroke-linejoin="round"/><path d="M1335.0,524.0 L1380.0,506.0" fill="none" stroke="#fdfdfd" stroke-width="1.6" stroke-linecap="round" stroke-linejoin="round"/><path d="M1400.0,600.0 C1404.2,600.8 1420.0,600.8 1425.0,605.0 C1430.0,609.2 1429.2,621.7 1430.0,625.0" fill="none" stroke="#fdfdfd" stroke-width="1.6" stroke-linecap="round" stroke-linejoin="round"/><path d="M535.0,651.5 C537.5,657.8 545.0,678.8 550.0,689.0 C555.0,699.2 558.0,704.2 565.0,713.0 C572.0,721.8 585.0,733.0 592.0,741.5 C599.0,750.0 604.5,760.2 607.0,764.0" fill="none" stroke="#fdfdfd" stroke-width="2.0" stroke-linecap="round" stroke-linejoin="round"/><path d="M538.0,656.0 L562.0,647.0" fill="none" stroke="#fdfdfd" stroke-width="1.6" stroke-linecap="round" stroke-linejoin="round"/><path d="M634.0,644.0 C633.5,651.5 631.0,679.0 631.0,689.0 C631.0,699.0 635.0,696.5 634.0,704.0 C633.0,711.5 629.5,724.0 625.0,734.0 C620.5,744.0 610.0,759.0 607.0,764.0" fill="none" stroke="#fdfdfd" stroke-width="1.8" stroke-linecap="round" stroke-linejoin="round"/><path d="M662.5,647.0 C658.8,654.0 645.0,679.5 640.0,689.0 C635.0,698.5 633.8,701.5 632.5,704.0" fill="none" stroke="#fdfdfd" stroke-width="1.8" stroke-linecap="round" stroke-linejoin="round"/><path d="M661.0,659.0 L695.0,678.5" fill="none" stroke="#fdfdfd" stroke-width="1.6" stroke-linecap="round" stroke-linejoin="round"/><path d="M632.5,719.0 L695.0,693.5" fill="none" stroke="#fdfdfd" stroke-width="1.8" stroke-linecap="round" stroke-linejoin="round"/><path d="M565.0,711.5 L628.0,689.0" fill="none" stroke="#fdfdfd" stroke-width="1.6" stroke-linecap="round" stroke-linejoin="round"/><path d="M595.0,695.0 L631.0,680.0" fill="none" stroke="#fdfdfd" stroke-width="1.6" stroke-linecap="round" stroke-linejoin="round"/><path d="M632.0,719.0 C635.3,718.5 647.2,713.0 652.0,716.0 C656.8,719.0 663.5,730.2 661.0,737.0 C658.5,743.8 641.0,753.2 637.0,756.5" fill="none" stroke="#fdfdfd" stroke-width="1.6" stroke-linecap="round" stroke-linejoin="round"/><path d="M670.0,707.0 C671.0,711.5 675.5,727.0 676.0,734.0 C676.5,741.0 679.0,745.0 673.0,749.0 C667.0,753.0 645.5,756.5 640.0,758.0" fill="none" stroke="#fdfdfd" stroke-width="1.6" stroke-linecap="round" stroke-linejoin="round"/><path d="M619.0,651.5 L619.0,678.5" fill="none" stroke="#fdfdfd" stroke-width="1.6" stroke-linecap="round" stroke-linejoin="round"/><path d="M535.0,713.0 L565.0,713.0" fill="none" stroke="#fdfdfd" stroke-width="1.6" stroke-linecap="round" stroke-linejoin="round"/><path d="M541.0,650.0 L548.0,690.0" fill="none" stroke="#fdfdfd" stroke-width="1.4" stroke-linecap="round" stroke-linejoin="round"/><path d="M595.0,650.0 L605.0,680.0" fill="none" stroke="#fdfdfd" stroke-width="1.4" stroke-linecap="round" stroke-linejoin="round"/><path d="M578.0,651.0 L583.0,662.0" fill="none" stroke="#fdfdfd" stroke-width="1.4" stroke-linecap="round" stroke-linejoin="round"/><path d="M695.0,680.0 C707.0,685.5 749.5,703.5 767.0,713.0 C784.5,722.5 790.8,729.5 800.0,737.0 C809.2,744.5 817.5,753.5 822.5,758.0 C827.5,762.5 828.8,763.0 830.0,764.0" fill="none" stroke="#fdfdfd" stroke-width="2.0" stroke-linecap="round" stroke-linejoin="round"/><path d="M822.5,638.0 L818.0,699.5" fill="none" stroke="#fdfdfd" stroke-width="1.5" stroke-linecap="round" stroke-linejoin="round"/><path d="M695.0,722.0 L767.0,717.5" fill="none" stroke="#fdfdfd" stroke-width="1.6" stroke-linecap="round" stroke-linejoin="round"/><path d="M710.0,723.0 L725.0,764.0" fill="none" stroke="#fdfdfd" stroke-width="1.6" stroke-linecap="round" stroke-linejoin="round"/><path d="M728.0,719.0 L728.0,764.0" fill="none" stroke="#fdfdfd" stroke-width="1.6" stroke-linecap="round" stroke-linejoin="round"/><path d="M728.0,734.0 C737.5,736.5 769.2,745.8 785.0,749.0 C800.8,752.2 816.2,752.8 822.5,753.5" fill="none" stroke="#fdfdfd" stroke-width="1.6" stroke-linecap="round" stroke-linejoin="round"/><path d="M760.0,718.0 L770.0,739.0" fill="none" stroke="#fdfdfd" stroke-width="1.6" stroke-linecap="round" stroke-linejoin="round"/><path d="M827.0,704.0 L855.0,701.0" fill="none" stroke="#fdfdfd" stroke-width="1.6" stroke-linecap="round" stroke-linejoin="round"/><path d="M830.0,719.0 L855.0,713.0" fill="none" stroke="#fdfdfd" stroke-width="1.6" stroke-linecap="round" stroke-linejoin="round"/><path d="M837.5,696.5 L837.5,734.0" fill="none" stroke="#fdfdfd" stroke-width="1.6" stroke-linecap="round" stroke-linejoin="round"/><path d="M845.0,701.0 L845.0,726.5" fill="none" stroke="#fdfdfd" stroke-width="1.6" stroke-linecap="round" stroke-linejoin="round"/><path d="M700.0,740.0 C706.7,740.8 730.0,741.0 740.0,745.0 C750.0,749.0 756.7,760.8 760.0,764.0" fill="none" stroke="#fdfdfd" stroke-width="1.6" stroke-linecap="round" stroke-linejoin="round"/><path d="M780.0,729.0 L790.0,745.0" fill="none" stroke="#fdfdfd" stroke-width="1.6" stroke-linecap="round" stroke-linejoin="round"/><path d="M882.0,636.5 C883.5,642.8 888.0,662.8 891.0,674.0 C894.0,685.2 894.8,694.0 900.0,704.0 C905.2,714.0 916.0,724.0 922.5,734.0 C929.0,744.0 936.2,759.0 939.0,764.0" fill="none" stroke="#fdfdfd" stroke-width="1.8" stroke-linecap="round" stroke-linejoin="round"/><path d="M882.0,636.5 L933.0,629.0" fill="none" stroke="#fdfdfd" stroke-width="1.6" stroke-linecap="round" stroke-linejoin="round"/><path d="M945.0,662.0 L990.0,645.5" fill="none" stroke="#fdfdfd" stroke-width="1.8" stroke-linecap="round" stroke-linejoin="round"/><path d="M967.5,686.0 L1005.0,674.0" fill="none" stroke="#fdfdfd" stroke-width="1.6" stroke-linecap="round" stroke-linejoin="round"/><path d="M892.5,699.5 C900.2,700.2 926.5,700.0 939.0,704.0 C951.5,708.0 962.8,720.2 967.5,723.5" fill="none" stroke="#fdfdfd" stroke-width="1.6" stroke-linecap="round" stroke-linejoin="round"/><path d="M855.0,701.0 L900.0,705.5" fill="none" stroke="#fdfdfd" stroke-width="1.6" stroke-linecap="round" stroke-linejoin="round"/><path d="M900.0,704.0 L855.0,737.0" fill="none" stroke="#fdfdfd" stroke-width="1.6" stroke-linecap="round" stroke-linejoin="round"/><path d="M915.0,711.5 L967.5,722.0" fill="none" stroke="#fdfdfd" stroke-width="1.6" stroke-linecap="round" stroke-linejoin="round"/><path d="M934.0,749.0 L975.0,725.0" fill="none" stroke="#fdfdfd" stroke-width="1.6" stroke-linecap="round" stroke-linejoin="round"/><path d="M930.0,629.0 L939.0,659.0" fill="none" stroke="#fdfdfd" stroke-width="1.6" stroke-linecap="round" stroke-linejoin="round"/><path d="M912.0,651.5 L918.0,666.5" fill="none" stroke="#fdfdfd" stroke-width="1.6" stroke-linecap="round" stroke-linejoin="round"/><path d="M990.0,689.0 L1015.0,715.0" fill="none" stroke="#fdfdfd" stroke-width="1.6" stroke-linecap="round" stroke-linejoin="round"/><path d="M945.0,716.0 L955.0,740.0" fill="none" stroke="#fdfdfd" stroke-width="1.6" stroke-linecap="round" stroke-linejoin="round"/><path d="M870.0,740.0 L890.0,764.0" fill="none" stroke="#fdfdfd" stroke-width="1.6" stroke-linecap="round" stroke-linejoin="round"/><path d="M1045.0,629.0 C1047.5,635.2 1055.0,653.0 1060.0,666.5 C1065.0,680.0 1072.5,702.8 1075.0,710.0" fill="none" stroke="#fdfdfd" stroke-width="2.0" stroke-linecap="round" stroke-linejoin="round"/><path d="M1015.0,671.0 C1022.5,668.5 1047.5,660.0 1060.0,656.0 C1072.5,652.0 1080.0,648.2 1090.0,647.0 C1100.0,645.8 1105.8,646.0 1120.0,648.5 C1134.2,651.0 1165.8,659.8 1175.0,662.0" fill="none" stroke="#fdfdfd" stroke-width="2.0" stroke-linecap="round" stroke-linejoin="round"/><path d="M1042.0,680.0 C1045.0,677.8 1050.8,669.8 1060.0,666.5 C1069.2,663.2 1087.5,661.0 1097.5,660.5 C1107.5,660.0 1107.1,660.5 1120.0,663.5 C1132.9,666.5 1165.8,676.0 1175.0,678.5" fill="none" stroke="#fdfdfd" stroke-width="1.8" stroke-linecap="round" stroke-linejoin="round"/><path d="M1123.0,629.0 C1122.5,634.8 1122.5,654.0 1120.0,663.5 C1117.5,673.0 1116.0,681.5 1108.0,686.0 C1100.0,690.5 1083.0,691.5 1072.0,690.5 C1061.0,689.5 1045.8,676.8 1042.0,680.0 C1038.2,683.2 1048.2,705.0 1049.5,710.0" fill="none" stroke="#fdfdfd" stroke-width="1.8" stroke-linecap="round" stroke-linejoin="round"/><path d="M1135.0,668.0 C1132.5,672.0 1130.0,686.2 1120.0,692.0 C1110.0,697.8 1088.8,698.5 1075.0,702.5 C1061.2,706.5 1047.5,713.2 1037.5,716.0 C1027.5,718.8 1018.8,718.5 1015.0,719.0" fill="none" stroke="#fdfdfd" stroke-width="1.8" stroke-linecap="round" stroke-linejoin="round"/><path d="M1018.0,629.0 C1018.5,636.5 1017.0,656.5 1021.0,674.0 C1025.0,691.5 1033.5,721.0 1042.0,734.0 C1050.5,747.0 1067.0,749.0 1072.0,752.0" fill="none" stroke="#fdfdfd" stroke-width="1.8" stroke-linecap="round" stroke-linejoin="round"/><path d="M1052.5,636.5 C1054.5,635.8 1058.8,632.0 1064.5,632.0 C1070.2,632.0 1083.2,634.0 1087.0,636.5 C1090.8,639.0 1087.0,645.2 1087.0,647.0" fill="none" stroke="#fdfdfd" stroke-width="1.6" stroke-linecap="round" stroke-linejoin="round"/><path d="M1162.0,629.0 C1162.0,631.0 1159.8,638.0 1162.0,641.0 C1164.2,644.0 1172.8,646.0 1175.0,647.0" fill="none" stroke="#fdfdfd" stroke-width="1.6" stroke-linecap="round" stroke-linejoin="round"/><path d="M1135.0,764.0 L1175.0,752.0" fill="none" stroke="#fdfdfd" stroke-width="1.6" stroke-linecap="round" stroke-linejoin="round"/><path d="M1105.0,663.5 L1105.0,672.0" fill="none" stroke="#fdfdfd" stroke-width="1.4" stroke-linecap="round" stroke-linejoin="round"/><path d="M1095.0,690.0 L1105.0,705.0" fill="none" stroke="#fdfdfd" stroke-width="1.4" stroke-linecap="round" stroke-linejoin="round"/><path d="M1193.0,635.0 L1184.0,764.0" fill="none" stroke="#fdfdfd" stroke-width="1.8" stroke-linecap="round" stroke-linejoin="round"/><path d="M1175.0,659.0 C1182.5,659.0 1209.5,656.5 1220.0,659.0 C1230.5,661.5 1235.0,671.5 1238.0,674.0" fill="none" stroke="#fdfdfd" stroke-width="1.6" stroke-linecap="round" stroke-linejoin="round"/><path d="M1175.0,678.5 L1205.0,675.5" fill="none" stroke="#fdfdfd" stroke-width="1.6" stroke-linecap="round" stroke-linejoin="round"/><path d="M1205.0,641.0 L1208.0,689.0" fill="none" stroke="#fdfdfd" stroke-width="1.6" stroke-linecap="round" stroke-linejoin="round"/><path d="M1220.0,644.0 L1223.0,674.0" fill="none" stroke="#fdfdfd" stroke-width="1.6" stroke-linecap="round" stroke-linejoin="round"/><path d="M1238.0,650.0 L1241.0,674.0" fill="none" stroke="#fdfdfd" stroke-width="1.6" stroke-linecap="round" stroke-linejoin="round"/><path d="M1175.0,734.0 C1180.0,734.0 1192.5,737.5 1205.0,734.0 C1217.5,730.5 1242.5,716.5 1250.0,713.0" fill="none" stroke="#fdfdfd" stroke-width="1.6" stroke-linecap="round" stroke-linejoin="round"/><path d="M1259.0,696.0 L1271.0,719.0" fill="none" stroke="#fdfdfd" stroke-width="1.6" stroke-linecap="round" stroke-linejoin="round"/><path d="M1280.0,726.0 L1317.5,764.0" fill="none" stroke="#fdfdfd" stroke-width="1.6" stroke-linecap="round" stroke-linejoin="round"/><path d="M1295.0,725.0 C1298.5,725.5 1312.5,721.5 1316.0,728.0 C1319.5,734.5 1316.0,758.0 1316.0,764.0" fill="none" stroke="#fdfdfd" stroke-width="1.6" stroke-linecap="round" stroke-linejoin="round"/><path d="M1302.0,734.0 L1305.0,764.0" fill="none" stroke="#fdfdfd" stroke-width="1.6" stroke-linecap="round" stroke-linejoin="round"/><path d="M1265.0,740.0 L1280.0,764.0" fill="none" stroke="#fdfdfd" stroke-width="1.6" stroke-linecap="round" stroke-linejoin="round"/><path d="M1175.0,750.0 L1197.0,746.0" fill="none" stroke="#fdfdfd" stroke-width="1.6" stroke-linecap="round" stroke-linejoin="round"/><path d="M1262.0,650.0 L1265.0,670.0" fill="none" stroke="#fdfdfd" stroke-width="1.4" stroke-linecap="round" stroke-linejoin="round"/><path d="M1250.0,660.0 L1255.0,676.0" fill="none" stroke="#fdfdfd" stroke-width="1.4" stroke-linecap="round" stroke-linejoin="round"/><path d="M1446.0,629.0 C1444.5,633.2 1441.5,645.2 1437.0,654.5 C1432.5,663.8 1422.0,679.5 1419.0,684.5" fill="none" stroke="#fdfdfd" stroke-width="2.6" stroke-linecap="round" stroke-linejoin="round"/><path d="M1357.5,629.0 C1357.2,632.2 1359.2,641.2 1356.0,648.5 C1352.8,655.8 1341.0,668.5 1338.0,672.5" fill="none" stroke="#fdfdfd" stroke-width="1.8" stroke-linecap="round" stroke-linejoin="round"/><path d="M1356.0,648.5 C1357.8,650.2 1365.0,653.8 1366.5,659.0 C1368.0,664.2 1365.2,676.5 1365.0,680.0" fill="none" stroke="#fdfdfd" stroke-width="1.6" stroke-linecap="round" stroke-linejoin="round"/><path d="M1368.0,662.0 C1371.5,663.8 1382.0,672.2 1389.0,672.5 C1396.0,672.8 1404.0,663.8 1410.0,663.5 C1416.0,663.2 1422.5,669.8 1425.0,671.0" fill="none" stroke="#fdfdfd" stroke-width="1.6" stroke-linecap="round" stroke-linejoin="round"/><path d="M1389.0,672.5 L1392.0,629.0" fill="none" stroke="#fdfdfd" stroke-width="1.8" stroke-linecap="round" stroke-linejoin="round"/><path d="M1407.0,662.0 L1402.5,629.0" fill="none" stroke="#fdfdfd" stroke-width="1.6" stroke-linecap="round" stroke-linejoin="round"/><path d="M1410.0,663.5 L1428.0,629.0" fill="none" stroke="#fdfdfd" stroke-width="1.6" stroke-linecap="round" stroke-linejoin="round"/><path d="M1437.0,654.5 L1470.0,665.0" fill="none" stroke="#fdfdfd" stroke-width="1.8" stroke-linecap="round" stroke-linejoin="round"/><path d="M1459.5,629.0 C1461.8,631.5 1468.0,643.0 1473.0,644.0 C1478.0,645.0 1486.8,636.5 1489.5,635.0" fill="none" stroke="#fdfdfd" stroke-width="1.6" stroke-linecap="round" stroke-linejoin="round"/><path d="M1473.0,644.0 C1472.5,649.0 1474.0,664.5 1470.0,674.0 C1466.0,683.5 1453.8,694.5 1449.0,701.0 C1444.2,707.5 1442.8,711.0 1441.5,713.0" fill="none" stroke="#fdfdfd" stroke-width="1.6" stroke-linecap="round" stroke-linejoin="round"/><path d="M1380.0,698.0 C1379.8,699.5 1376.5,704.8 1378.5,707.0 C1380.5,709.2 1389.8,710.8 1392.0,711.5" fill="none" stroke="#fdfdfd" stroke-width="1.6" stroke-linecap="round" stroke-linejoin="round"/><path d="M1419.0,702.5 L1407.0,719.0" fill="none" stroke="#fdfdfd" stroke-width="1.6" stroke-linecap="round" stroke-linejoin="round"/><path d="M1419.0,702.5 L1440.0,732.5" fill="none" stroke="#fdfdfd" stroke-width="1.6" stroke-linecap="round" stroke-linejoin="round"/><path d="M1425.0,719.0 L1426.5,740.0" fill="none" stroke="#fdfdfd" stroke-width="1.6" stroke-linecap="round" stroke-linejoin="round"/><path d="M1357.5,695.0 C1356.2,701.5 1350.2,724.5 1350.0,734.0 C1349.8,743.5 1355.0,749.0 1356.0,752.0" fill="none" stroke="#fdfdfd" stroke-width="1.4" stroke-linecap="round" stroke-linejoin="round"/><path d="M607.0,764.0 C607.5,767.8 612.5,781.5 610.0,786.5 C607.5,791.5 596.0,789.0 592.0,794.0 C588.0,799.0 586.2,807.8 586.0,816.5 C585.8,825.2 588.2,839.0 590.5,846.5 C592.8,854.0 599.2,856.5 599.5,861.5 C599.8,866.5 594.5,871.1 592.0,876.5 C589.5,881.9 585.8,891.1 584.5,894.0" fill="none" stroke="#fdfdfd" stroke-width="3.2" stroke-linecap="round" stroke-linejoin="round"/><path d="M610.0,776.0 L670.0,773.0" fill="none" stroke="#fdfdfd" stroke-width="1.8" stroke-linecap="round" stroke-linejoin="round"/><path d="M613.0,788.0 L667.0,782.0" fill="none" stroke="#fdfdfd" stroke-width="1.6" stroke-linecap="round" stroke-linejoin="round"/><path d="M628.0,773.0 L640.0,806.0" fill="none" stroke="#fdfdfd" stroke-width="1.6" stroke-linecap="round" stroke-linejoin="round"/><path d="M535.0,818.0 L565.0,812.0" fill="none" stroke="#fdfdfd" stroke-width="1.6" stroke-linecap="round" stroke-linejoin="round"/><path d="M601.0,839.0 C607.5,839.5 624.3,844.0 640.0,842.0 C655.7,840.0 685.8,829.5 695.0,827.0" fill="none" stroke="#fdfdfd" stroke-width="1.6" stroke-linecap="round" stroke-linejoin="round"/><path d="M601.0,861.5 L670.0,869.0" fill="none" stroke="#fdfdfd" stroke-width="1.6" stroke-linecap="round" stroke-linejoin="round"/><path d="M602.5,879.5 L695.0,876.5" fill="none" stroke="#fdfdfd" stroke-width="1.6" stroke-linecap="round" stroke-linejoin="round"/><path d="M625.0,813.0 C624.0,819.8 620.0,840.5 619.0,854.0 C618.0,867.5 619.0,887.3 619.0,894.0" fill="none" stroke="#fdfdfd" stroke-width="1.6" stroke-linecap="round" stroke-linejoin="round"/><path d="M643.0,839.0 L643.0,894.0" fill="none" stroke="#fdfdfd" stroke-width="1.6" stroke-linecap="round" stroke-linejoin="round"/><path d="M625.0,848.0 L670.0,854.0" fill="none" stroke="#fdfdfd" stroke-width="1.6" stroke-linecap="round" stroke-linejoin="round"/><path d="M538.0,764.0 L542.5,894.0" fill="none" stroke="#fdfdfd" stroke-width="1.6" stroke-linecap="round" stroke-linejoin="round"/><path d="M555.0,790.0 L570.0,780.0" fill="none" stroke="#fdfdfd" stroke-width="1.4" stroke-linecap="round" stroke-linejoin="round"/><path d="M580.0,850.0 L560.0,860.0" fill="none" stroke="#fdfdfd" stroke-width="1.4" stroke-linecap="round" stroke-linejoin="round"/><path d="M815.0,773.0 L794.0,894.0" fill="none" stroke="#fdfdfd" stroke-width="1.5" stroke-linecap="round" stroke-linejoin="round"/><path d="M726.5,764.0 C729.5,779.0 740.8,832.5 744.5,854.0 C748.2,875.5 748.2,886.5 749.0,893.0" fill="none" stroke="#fdfdfd" stroke-width="1.8" stroke-linecap="round" stroke-linejoin="round"/><path d="M752.0,771.5 C755.0,780.2 764.5,807.8 770.0,824.0 C775.5,840.2 782.5,861.5 785.0,869.0" fill="none" stroke="#fdfdfd" stroke-width="1.6" stroke-linecap="round" stroke-linejoin="round"/><path d="M695.0,851.0 C702.5,848.5 727.5,840.0 740.0,836.0 C752.5,832.0 762.5,831.5 770.0,827.0 C777.5,822.5 782.5,812.0 785.0,809.0" fill="none" stroke="#fdfdfd" stroke-width="1.6" stroke-linecap="round" stroke-linejoin="round"/><path d="M695.0,830.0 L744.5,813.5" fill="none" stroke="#fdfdfd" stroke-width="1.6" stroke-linecap="round" stroke-linejoin="round"/><path d="M758.0,846.5 C761.0,845.8 772.5,834.6 776.0,842.0 C779.5,849.4 778.5,882.8 779.0,891.0" fill="none" stroke="#fdfdfd" stroke-width="1.6" stroke-linecap="round" stroke-linejoin="round"/><path d="M827.0,821.0 L855.0,815.0" fill="none" stroke="#fdfdfd" stroke-width="1.6" stroke-linecap="round" stroke-linejoin="round"/><path d="M827.0,861.5 L855.0,857.0" fill="none" stroke="#fdfdfd" stroke-width="1.6" stroke-linecap="round" stroke-linejoin="round"/><path d="M785.0,804.5 C789.5,804.5 807.5,799.8 812.0,804.5 C816.5,809.2 815.5,828.2 812.0,833.0 C808.5,837.8 794.5,833.0 791.0,833.0" fill="none" stroke="#fdfdfd" stroke-width="1.6" stroke-linecap="round" stroke-linejoin="round"/><path d="M705.0,830.0 L705.0,894.0" fill="none" stroke="#fdfdfd" stroke-width="1.6" stroke-linecap="round" stroke-linejoin="round"/><path d="M715.0,800.0 L705.0,780.0" fill="none" stroke="#fdfdfd" stroke-width="1.6" stroke-linecap="round" stroke-linejoin="round"/><path d="M1014.0,771.5 L1006.5,798.5" fill="none" stroke="#fdfdfd" stroke-width="2.2" stroke-linecap="round" stroke-linejoin="round"/><path d="M855.0,774.5 L900.0,764.0" fill="none" stroke="#fdfdfd" stroke-width="1.6" stroke-linecap="round" stroke-linejoin="round"/><path d="M870.0,764.0 C870.5,767.2 871.0,769.5 873.0,783.5 C875.0,797.5 880.5,837.2 882.0,848.0" fill="none" stroke="#fdfdfd" stroke-width="1.6" stroke-linecap="round" stroke-linejoin="round"/><path d="M892.5,768.5 C894.5,774.0 898.8,790.2 904.5,801.5 C910.2,812.8 923.0,827.2 927.0,836.0 C931.0,844.8 928.2,851.0 928.5,854.0" fill="none" stroke="#fdfdfd" stroke-width="1.6" stroke-linecap="round" stroke-linejoin="round"/><path d="M855.0,857.0 L927.0,839.0" fill="none" stroke="#fdfdfd" stroke-width="1.6" stroke-linecap="round" stroke-linejoin="round"/><path d="M880.0,827.0 C885.8,824.8 905.2,819.0 915.0,813.5 C924.8,808.0 935.0,797.2 939.0,794.0" fill="none" stroke="#fdfdfd" stroke-width="1.6" stroke-linecap="round" stroke-linejoin="round"/><path d="M942.0,797.0 C945.0,796.5 954.0,793.0 960.0,794.0 C966.0,795.0 975.0,801.5 978.0,803.0" fill="none" stroke="#fdfdfd" stroke-width="1.6" stroke-linecap="round" stroke-linejoin="round"/><path d="M942.0,797.0 L958.5,864.5" fill="none" stroke="#fdfdfd" stroke-width="1.6" stroke-linecap="round" stroke-linejoin="round"/><path d="M963.0,815.0 L969.0,863.0" fill="none" stroke="#fdfdfd" stroke-width="1.6" stroke-linecap="round" stroke-linejoin="round"/><path d="M951.0,836.0 L975.0,833.0" fill="none" stroke="#fdfdfd" stroke-width="1.6" stroke-linecap="round" stroke-linejoin="round"/><path d="M957.0,851.0 L975.0,848.0" fill="none" stroke="#fdfdfd" stroke-width="1.6" stroke-linecap="round" stroke-linejoin="round"/><path d="M915.0,893.0 C916.0,889.5 908.0,877.5 921.0,872.0 C934.0,866.5 981.0,862.0 993.0,860.0" fill="none" stroke="#fdfdfd" stroke-width="1.8" stroke-linecap="round" stroke-linejoin="round"/><path d="M855.0,801.5 L870.0,794.0" fill="none" stroke="#fdfdfd" stroke-width="1.6" stroke-linecap="round" stroke-linejoin="round"/><path d="M858.0,764.0 L864.0,854.0" fill="none" stroke="#fdfdfd" stroke-width="1.6" stroke-linecap="round" stroke-linejoin="round"/><path d="M1075.0,839.0 C1081.2,835.0 1095.8,824.2 1112.5,815.0 C1129.2,805.8 1164.6,788.8 1175.0,783.5" fill="none" stroke="#fdfdfd" stroke-width="1.8" stroke-linecap="round" stroke-linejoin="round"/><path d="M1102.0,842.0 C1105.0,839.5 1107.8,835.0 1120.0,827.0 C1132.2,819.0 1165.8,799.5 1175.0,794.0" fill="none" stroke="#fdfdfd" stroke-width="1.6" stroke-linecap="round" stroke-linejoin="round"/><path d="M1078.0,809.0 L1075.0,839.0" fill="none" stroke="#fdfdfd" stroke-width="1.6" stroke-linecap="round" stroke-linejoin="round"/><path d="M1076.5,809.0 C1080.2,809.0 1093.8,807.5 1099.0,809.0 C1104.2,810.5 1106.5,816.5 1108.0,818.0" fill="none" stroke="#fdfdfd" stroke-width="1.6" stroke-linecap="round" stroke-linejoin="round"/><path d="M1075.0,819.5 L1099.0,824.0" fill="none" stroke="#fdfdfd" stroke-width="1.6" stroke-linecap="round" stroke-linejoin="round"/><path d="M1093.0,764.0 C1096.0,767.0 1102.8,782.0 1111.0,782.0 C1119.2,782.0 1137.2,767.0 1142.5,764.0" fill="none" stroke="#fdfdfd" stroke-width="1.6" stroke-linecap="round" stroke-linejoin="round"/><path d="M1126.0,803.0 L1175.0,783.5" fill="none" stroke="#fdfdfd" stroke-width="1.6" stroke-linecap="round" stroke-linejoin="round"/><path d="M1129.0,819.5 L1150.0,893.0" fill="none" stroke="#fdfdfd" stroke-width="1.6" stroke-linecap="round" stroke-linejoin="round"/><path d="M1087.0,836.0 C1096.5,841.5 1129.3,866.0 1144.0,869.0 C1158.7,872.0 1169.8,856.5 1175.0,854.0" fill="none" stroke="#fdfdfd" stroke-width="1.6" stroke-linecap="round" stroke-linejoin="round"/><path d="M1105.0,851.0 L1175.0,824.0" fill="none" stroke="#fdfdfd" stroke-width="1.6" stroke-linecap="round" stroke-linejoin="round"/><path d="M1015.0,845.0 C1020.0,845.0 1039.5,837.0 1045.0,845.0 C1050.5,853.0 1047.5,885.0 1048.0,893.0" fill="none" stroke="#fdfdfd" stroke-width="1.6" stroke-linecap="round" stroke-linejoin="round"/><path d="M1015.0,860.0 C1023.2,859.5 1052.0,854.0 1064.5,857.0 C1077.0,860.0 1085.8,874.5 1090.0,878.0" fill="none" stroke="#fdfdfd" stroke-width="1.6" stroke-linecap="round" stroke-linejoin="round"/><path d="M1064.5,857.0 L1072.0,893.0" fill="none" stroke="#fdfdfd" stroke-width="1.6" stroke-linecap="round" stroke-linejoin="round"/><path d="M1015.0,873.5 L1045.0,872.0" fill="none" stroke="#fdfdfd" stroke-width="1.6" stroke-linecap="round" stroke-linejoin="round"/><path d="M1045.0,776.0 L1038.0,789.0" fill="none" stroke="#fdfdfd" stroke-width="1.6" stroke-linecap="round" stroke-linejoin="round"/><path d="M1238.0,842.0 L1241.0,881.0" fill="none" stroke="#fdfdfd" stroke-width="2.2" stroke-linecap="round" stroke-linejoin="round"/><path d="M1175.0,794.0 C1182.5,794.2 1209.5,794.8 1220.0,795.5 C1230.5,796.2 1235.0,798.0 1238.0,798.5" fill="none" stroke="#fdfdfd" stroke-width="1.6" stroke-linecap="round" stroke-linejoin="round"/><path d="M1199.0,788.0 C1202.5,787.5 1211.5,785.2 1220.0,785.0 C1228.5,784.8 1245.0,786.2 1250.0,786.5" fill="none" stroke="#fdfdfd" stroke-width="1.6" stroke-linecap="round" stroke-linejoin="round"/><path d="M1199.0,788.0 L1199.0,843.5" fill="none" stroke="#fdfdfd" stroke-width="1.6" stroke-linecap="round" stroke-linejoin="round"/><path d="M1215.5,818.0 C1214.2,817.8 1210.5,815.5 1208.0,816.5 C1205.5,817.5 1201.5,819.8 1200.5,824.0 C1199.5,828.2 1201.8,839.0 1202.0,842.0" fill="none" stroke="#fdfdfd" stroke-width="1.6" stroke-linecap="round" stroke-linejoin="round"/><path d="M1218.5,821.0 L1238.0,828.5" fill="none" stroke="#fdfdfd" stroke-width="1.6" stroke-linecap="round" stroke-linejoin="round"/><path d="M1217.0,816.5 C1219.5,814.2 1227.0,806.0 1232.0,803.0 C1237.0,800.0 1244.5,799.2 1247.0,798.5" fill="none" stroke="#fdfdfd" stroke-width="1.6" stroke-linecap="round" stroke-linejoin="round"/><path d="M1218.5,776.0 L1250.0,786.5" fill="none" stroke="#fdfdfd" stroke-width="1.6" stroke-linecap="round" stroke-linejoin="round"/><path d="M1175.0,782.0 L1190.0,779.0" fill="none" stroke="#fdfdfd" stroke-width="1.6" stroke-linecap="round" stroke-linejoin="round"/><path d="M1187.0,764.0 L1190.0,836.0" fill="none" stroke="#fdfdfd" stroke-width="1.6" stroke-linecap="round" stroke-linejoin="round"/><path d="M1268.0,779.0 C1265.5,791.5 1256.8,839.0 1253.0,854.0 C1249.2,869.0 1246.8,866.5 1245.5,869.0" fill="none" stroke="#fdfdfd" stroke-width="1.6" stroke-linecap="round" stroke-linejoin="round"/><path d="M1277.0,764.0 C1276.0,771.5 1270.5,798.5 1271.0,809.0 C1271.5,819.5 1281.0,818.2 1280.0,827.0 C1279.0,835.8 1267.5,855.8 1265.0,861.5" fill="none" stroke="#fdfdfd" stroke-width="1.6" stroke-linecap="round" stroke-linejoin="round"/><path d="M1289.0,764.0 C1289.5,771.5 1293.0,797.8 1292.0,809.0 C1291.0,820.2 1284.5,827.8 1283.0,831.5" fill="none" stroke="#fdfdfd" stroke-width="1.6" stroke-linecap="round" stroke-linejoin="round"/><path d="M1298.0,764.0 C1300.0,767.8 1310.5,767.2 1310.0,786.5 C1309.5,805.8 1297.5,864.0 1295.0,879.5" fill="none" stroke="#fdfdfd" stroke-width="1.6" stroke-linecap="round" stroke-linejoin="round"/><path d="M1310.0,786.5 L1332.5,779.0" fill="none" stroke="#fdfdfd" stroke-width="1.6" stroke-linecap="round" stroke-linejoin="round"/><path d="M1265.0,869.0 L1335.0,854.0" fill="none" stroke="#fdfdfd" stroke-width="1.6" stroke-linecap="round" stroke-linejoin="round"/><path d="M1259.0,878.0 L1335.0,872.0" fill="none" stroke="#fdfdfd" stroke-width="1.6" stroke-linecap="round" stroke-linejoin="round"/><path d="M1175.0,851.0 L1197.5,843.5" fill="none" stroke="#fdfdfd" stroke-width="1.6" stroke-linecap="round" stroke-linejoin="round"/><path d="M1218.5,864.5 L1223.0,881.0" fill="none" stroke="#fdfdfd" stroke-width="1.6" stroke-linecap="round" stroke-linejoin="round"/><path d="M1300.0,820.0 L1330.0,815.0" fill="none" stroke="#fdfdfd" stroke-width="1.4" stroke-linecap="round" stroke-linejoin="round"/><path d="M1335.0,797.0 C1341.2,796.5 1357.2,796.8 1372.5,794.0 C1387.8,791.2 1417.8,778.5 1426.5,780.5 C1435.2,782.5 1425.2,801.8 1425.0,806.0" fill="none" stroke="#fdfdfd" stroke-width="1.8" stroke-linecap="round" stroke-linejoin="round"/><path d="M1372.5,794.0 L1392.0,881.0" fill="none" stroke="#fdfdfd" stroke-width="1.8" stroke-linecap="round" stroke-linejoin="round"/><path d="M1335.0,812.0 L1425.0,795.5" fill="none" stroke="#fdfdfd" stroke-width="1.6" stroke-linecap="round" stroke-linejoin="round"/><path d="M1335.0,842.0 C1348.8,839.2 1405.0,823.5 1417.5,825.5 C1430.0,827.5 1415.5,848.0 1410.0,854.0 C1404.5,860.0 1388.8,860.2 1384.5,861.5" fill="none" stroke="#fdfdfd" stroke-width="1.6" stroke-linecap="round" stroke-linejoin="round"/><path d="M1335.0,858.5 L1408.5,842.0" fill="none" stroke="#fdfdfd" stroke-width="1.6" stroke-linecap="round" stroke-linejoin="round"/><path d="M1335.0,872.0 L1387.5,861.5" fill="none" stroke="#fdfdfd" stroke-width="1.6" stroke-linecap="round" stroke-linejoin="round"/><path d="M1347.0,794.0 C1347.0,793.0 1342.5,789.2 1347.0,788.0 C1351.5,786.8 1369.8,785.5 1374.0,786.5 C1378.2,787.5 1372.8,792.8 1372.5,794.0" fill="none" stroke="#fdfdfd" stroke-width="1.5" stroke-linecap="round" stroke-linejoin="round"/><path d="M792.5,359.0 C792.2,363.2 792.2,377.0 791.0,384.5 C789.8,392.0 786.0,400.8 785.0,404.0" fill="none" stroke="#fdfdfd" stroke-width="1.5" stroke-linecap="round" stroke-linejoin="round"/><path d="M800.0,389.0 C803.2,388.5 815.5,383.5 819.0,386.0 C822.5,388.5 820.7,401.0 821.0,404.0" fill="none" stroke="#fdfdfd" stroke-width="1.5" stroke-linecap="round" stroke-linejoin="round"/><path d="M818.0,377.0 L845.0,377.0" fill="none" stroke="#fdfdfd" stroke-width="1.5" stroke-linecap="round" stroke-linejoin="round"/><path d="M822.5,393.5 L839.0,395.0" fill="none" stroke="#fdfdfd" stroke-width="1.5" stroke-linecap="round" stroke-linejoin="round"/><path d="M759.5,431.0 C763.8,432.0 780.2,433.5 785.0,437.0 C789.8,440.5 790.5,448.0 788.0,452.0 C785.5,456.0 773.0,459.5 770.0,461.0" fill="none" stroke="#fdfdfd" stroke-width="1.5" stroke-linecap="round" stroke-linejoin="round"/><path d="M744.5,431.0 L767.0,455.0" fill="none" stroke="#fdfdfd" stroke-width="1.5" stroke-linecap="round" stroke-linejoin="round"/><path d="M704.0,443.0 L740.0,437.0" fill="none" stroke="#fdfdfd" stroke-width="1.5" stroke-linecap="round" stroke-linejoin="round"/><path d="M695.0,452.0 L732.5,437.0" fill="none" stroke="#fdfdfd" stroke-width="1.5" stroke-linecap="round" stroke-linejoin="round"/><path d="M717.5,437.0 C720.8,440.0 732.5,450.5 737.0,455.0 C741.5,459.5 743.2,462.5 744.5,464.0" fill="none" stroke="#fdfdfd" stroke-width="1.5" stroke-linecap="round" stroke-linejoin="round"/><path d="M800.0,434.0 L852.0,428.0" fill="none" stroke="#fdfdfd" stroke-width="1.5" stroke-linecap="round" stroke-linejoin="round"/><path d="M815.0,485.0 L855.0,480.0" fill="none" stroke="#fdfdfd" stroke-width="1.5" stroke-linecap="round" stroke-linejoin="round"/><path d="M740.0,359.0 L745.0,380.0" fill="none" stroke="#fdfdfd" stroke-width="1.5" stroke-linecap="round" stroke-linejoin="round"/><path d="M720.0,400.0 L745.0,395.0" fill="none" stroke="#fdfdfd" stroke-width="1.5" stroke-linecap="round" stroke-linejoin="round"/><path d="M1349.0,359.0 L1362.0,389.0" fill="none" stroke="#fdfdfd" stroke-width="1.5" stroke-linecap="round" stroke-linejoin="round"/><path d="M1385.0,389.0 C1384.8,394.0 1382.3,411.5 1384.0,419.0 C1385.7,426.5 1393.2,431.5 1395.0,434.0" fill="none" stroke="#fdfdfd" stroke-width="1.5" stroke-linecap="round" stroke-linejoin="round"/><path d="M1345.0,419.0 L1375.0,416.0" fill="none" stroke="#fdfdfd" stroke-width="1.5" stroke-linecap="round" stroke-linejoin="round"/><path d="M1400.0,440.0 C1401.7,440.7 1408.0,440.0 1410.0,444.0 C1412.0,448.0 1411.7,460.7 1412.0,464.0" fill="none" stroke="#fdfdfd" stroke-width="1.5" stroke-linecap="round" stroke-linejoin="round"/><path d="M1388.0,452.0 L1398.0,470.0" fill="none" stroke="#fdfdfd" stroke-width="1.5" stroke-linecap="round" stroke-linejoin="round"/><path d="M1425.0,449.0 L1440.0,454.0" fill="none" stroke="#fdfdfd" stroke-width="1.5" stroke-linecap="round" stroke-linejoin="round"/><path d="M1455.0,404.0 L1480.0,400.0" fill="none" stroke="#fdfdfd" stroke-width="1.5" stroke-linecap="round" stroke-linejoin="round"/><path d="M1432.5,464.0 L1450.0,464.0" fill="none" stroke="#fdfdfd" stroke-width="1.5" stroke-linecap="round" stroke-linejoin="round"/><path d="M1470.0,455.0 L1485.0,455.0" fill="none" stroke="#fdfdfd" stroke-width="1.5" stroke-linecap="round" stroke-linejoin="round"/><path d="M1202.0,760.0 C1210.0,753.7 1240.0,729.3 1250.0,722.0 C1260.0,714.7 1260.0,717.0 1262.0,716.0" fill="none" stroke="#fdfdfd" stroke-width="1.0" stroke-linecap="round" stroke-linejoin="round"/><path d="M1208.0,752.0 L1215.0,762.0" fill="none" stroke="#fdfdfd" stroke-width="1.0" stroke-linecap="round" stroke-linejoin="round"/><path d="M1220.0,748.0 L1228.0,758.0" fill="none" stroke="#fdfdfd" stroke-width="1.0" stroke-linecap="round" stroke-linejoin="round"/><path d="M1232.0,738.0 L1240.0,748.0" fill="none" stroke="#fdfdfd" stroke-width="1.0" stroke-linecap="round" stroke-linejoin="round"/><path d="M1244.0,728.0 L1252.0,738.0" fill="none" stroke="#fdfdfd" stroke-width="1.0" stroke-linecap="round" stroke-linejoin="round"/><path d="M1206.0,742.0 L1256.0,718.0" fill="none" stroke="#fdfdfd" stroke-width="1.0" stroke-linecap="round" stroke-linejoin="round"/><path d="M1225.0,752.0 L1260.0,724.0" fill="none" stroke="#fdfdfd" stroke-width="1.0" stroke-linecap="round" stroke-linejoin="round"/><path d="M1175.0,690.0 L1190.0,688.0" fill="none" stroke="#fdfdfd" stroke-width="1.5" stroke-linecap="round" stroke-linejoin="round"/><path d="M1223.0,650.0 L1250.0,660.0" fill="none" stroke="#fdfdfd" stroke-width="1.5" stroke-linecap="round" stroke-linejoin="round"/><path d="M1180.0,710.0 L1205.0,705.0" fill="none" stroke="#fdfdfd" stroke-width="1.5" stroke-linecap="round" stroke-linejoin="round"/><path d="M1290.0,740.0 L1310.0,745.0" fill="none" stroke="#fdfdfd" stroke-width="1.5" stroke-linecap="round" stroke-linejoin="round"/><path d="M1330.0,740.0 L1335.0,764.0" fill="none" stroke="#fdfdfd" stroke-width="1.5" stroke-linecap="round" stroke-linejoin="round"/><path d="M1180.0,800.0 L1185.0,830.0" fill="none" stroke="#fdfdfd" stroke-width="1.4" stroke-linecap="round" stroke-linejoin="round"/><path d="M1208.0,776.0 L1215.0,800.0" fill="none" stroke="#fdfdfd" stroke-width="1.4" stroke-linecap="round" stroke-linejoin="round"/><path d="M1270.0,800.0 L1290.0,795.0" fill="none" stroke="#fdfdfd" stroke-width="1.4" stroke-linecap="round" stroke-linejoin="round"/><path d="M1310.0,800.0 L1335.0,795.0" fill="none" stroke="#fdfdfd" stroke-width="1.4" stroke-linecap="round" stroke-linejoin="round"/><path d="M1245.0,860.0 L1265.0,845.0" fill="none" stroke="#fdfdfd" stroke-width="1.4" stroke-linecap="round" stroke-linejoin="round"/><path d="M535.0,494.0 C548.5,494.0 595.0,496.5 616.0,494.0 C637.0,491.5 642.5,486.5 661.0,479.0 C679.5,471.5 705.5,458.2 727.0,449.0 C748.5,439.8 775.3,429.7 790.0,423.5 C804.7,417.3 804.2,413.6 815.0,412.0 C825.8,410.4 840.8,414.6 855.0,414.0 C869.2,413.4 888.0,410.2 900.0,408.5 C912.0,406.8 917.0,405.0 927.0,404.0 C937.0,403.0 949.5,403.8 960.0,402.5 C970.5,401.2 980.8,398.5 990.0,396.5 C999.2,394.5 1004.6,393.0 1015.0,390.5 C1025.4,388.0 1040.0,385.2 1052.5,381.5 C1065.0,377.8 1076.2,371.8 1090.0,368.0 C1103.8,364.2 1127.5,360.5 1135.0,359.0" fill="none" stroke="#ffffff" stroke-width="3.6" stroke-linecap="round" stroke-linejoin="round"/><path d="M722.0,648.5 C730.0,645.2 753.2,637.2 770.0,629.0 C786.8,620.8 808.3,606.0 822.5,599.0 C836.7,592.0 849.6,589.0 855.0,587.0" fill="none" stroke="#ffffff" stroke-width="3.6" stroke-linecap="round" stroke-linejoin="round"/><path d="M1037.5,359.0 C1040.0,365.2 1047.5,384.0 1052.5,396.5 C1057.5,409.0 1061.2,419.0 1067.5,434.0 C1073.8,449.0 1084.4,474.0 1090.0,486.5 C1095.6,499.0 1099.2,505.2 1101.0,509.0" fill="none" stroke="#ffffff" stroke-width="3.6" stroke-linecap="round" stroke-linejoin="round"/><path d="M1101.0,479.0 L1175.0,476.0" fill="none" stroke="#ffffff" stroke-width="3.6" stroke-linecap="round" stroke-linejoin="round"/><path d="M939.0,566.0 C944.5,567.8 959.3,572.8 972.0,576.5 C984.7,580.2 997.8,584.2 1015.0,588.5 C1032.2,592.8 1057.5,598.2 1075.0,602.0 C1092.5,605.8 1103.3,606.5 1120.0,611.0 C1136.7,615.5 1158.3,624.0 1175.0,629.0 C1191.7,634.0 1205.0,636.5 1220.0,641.0 C1235.0,645.5 1252.5,652.0 1265.0,656.0 C1277.5,660.0 1283.3,662.0 1295.0,665.0 C1306.7,668.0 1322.5,670.2 1335.0,674.0 C1347.5,677.8 1344.2,681.2 1370.0,688.0 C1395.8,694.8 1470.0,710.5 1490.0,715.0" fill="none" stroke="#ffffff" stroke-width="3.6" stroke-linecap="round" stroke-linejoin="round"/><path d="M1112.5,606.5 C1116.2,601.5 1124.6,587.8 1135.0,576.5 C1145.4,565.2 1168.3,545.2 1175.0,539.0" fill="none" stroke="#ffffff" stroke-width="3.6" stroke-linecap="round" stroke-linejoin="round"/><path d="M1194.5,483.5 C1201.2,474.8 1223.2,443.0 1235.0,431.0 C1246.8,419.0 1255.0,417.2 1265.0,411.5 C1275.0,405.8 1283.3,400.0 1295.0,396.5 C1306.7,393.0 1328.3,391.5 1335.0,390.5" fill="none" stroke="#ffffff" stroke-width="3.6" stroke-linecap="round" stroke-linejoin="round"/><path d="M1175.0,536.0 C1185.0,534.0 1218.5,528.5 1235.0,524.0 C1251.5,519.5 1261.0,513.2 1274.0,509.0 C1287.0,504.8 1297.3,504.2 1313.0,498.5 C1328.7,492.8 1349.3,478.0 1368.0,474.5 C1386.7,471.0 1403.8,476.0 1425.0,477.5 C1446.2,479.0 1483.3,482.5 1495.0,483.5" fill="none" stroke="#ffffff" stroke-width="3.6" stroke-linecap="round" stroke-linejoin="round"/><path d="M1485.0,359.0 C1484.8,366.5 1484.8,384.0 1483.5,404.0 C1482.2,424.0 1478.8,464.0 1477.5,479.0 C1476.2,494.0 1476.6,480.5 1476.0,494.0 C1475.4,507.5 1474.3,549.0 1474.0,560.0" fill="none" stroke="#ffffff" stroke-width="3.6" stroke-linecap="round" stroke-linejoin="round"/><path d="M1274.0,513.5 C1270.0,522.8 1259.5,552.2 1250.0,569.0 C1240.5,585.8 1222.5,604.0 1217.0,614.0 C1211.5,624.0 1217.0,626.5 1217.0,629.0" fill="none" stroke="#ffffff" stroke-width="3.6" stroke-linecap="round" stroke-linejoin="round"/><path d="M562.0,644.0 C565.0,650.2 574.0,669.0 580.0,681.5 C586.0,694.0 593.5,709.0 598.0,719.0 C602.5,729.0 605.5,734.0 607.0,741.5 C608.5,749.0 607.0,760.2 607.0,764.0" fill="none" stroke="#ffffff" stroke-width="3.6" stroke-linecap="round" stroke-linejoin="round"/><path d="M628.0,804.5 C632.5,803.8 643.8,799.5 655.0,800.0 C666.2,800.5 683.3,807.5 695.0,807.5 C706.7,807.5 712.5,802.5 725.0,800.0 C737.5,797.5 754.5,797.2 770.0,792.5 C785.5,787.8 809.2,776.2 818.0,771.5 C826.8,766.8 821.8,765.2 822.5,764.0" fill="none" stroke="#ffffff" stroke-width="3.6" stroke-linecap="round" stroke-linejoin="round"/><path d="M855.0,654.5 C848.3,665.2 822.2,700.8 815.0,719.0 C807.8,737.2 811.5,755.2 812.0,764.0 C812.5,772.8 815.5,761.5 818.0,771.5 C820.5,781.5 824.2,803.8 827.0,824.0 C829.8,844.2 833.2,881.5 834.5,893.0" fill="none" stroke="#ffffff" stroke-width="3.6" stroke-linecap="round" stroke-linejoin="round"/><path d="M952.5,629.0 C954.2,632.8 959.2,642.2 963.0,651.5 C966.8,660.8 969.7,673.8 975.0,684.5 C980.3,695.2 988.3,705.2 995.0,716.0 C1001.7,726.8 1011.8,735.2 1015.0,749.0 C1018.2,762.8 1014.2,790.7 1014.0,799.0" fill="none" stroke="#ffffff" stroke-width="3.6" stroke-linecap="round" stroke-linejoin="round"/><path d="M1060.0,764.0 C1066.2,767.8 1083.8,777.0 1097.5,786.5 C1111.2,796.0 1129.6,813.2 1142.5,821.0 C1155.4,828.8 1169.6,831.0 1175.0,833.0" fill="none" stroke="#ffffff" stroke-width="3.6" stroke-linecap="round" stroke-linejoin="round"/><path d="M1175.0,836.0 C1180.0,837.2 1195.0,842.8 1205.0,843.5 C1215.0,844.2 1225.0,841.8 1235.0,840.5 C1245.0,839.2 1255.0,837.0 1265.0,836.0 C1275.0,835.0 1283.3,835.8 1295.0,834.5 C1306.7,833.2 1320.8,831.0 1335.0,828.5 C1349.2,826.0 1362.5,823.5 1380.0,819.5 C1397.5,815.5 1421.5,806.5 1440.0,804.5 C1458.5,802.5 1482.5,807.0 1491.0,807.5" fill="none" stroke="#ffffff" stroke-width="3.6" stroke-linecap="round" stroke-linejoin="round"/><path d="M1101.0,509.0 C1104.2,511.7 1107.7,521.0 1120.0,525.0 C1132.3,529.0 1165.8,531.7 1175.0,533.0" fill="none" stroke="#ffffff" stroke-width="3.6" stroke-linecap="round" stroke-linejoin="round"/><path d="M535.0,549.5 C543.0,549.1 565.0,554.8 583.0,547.0 C601.0,539.2 624.3,515.1 643.0,503.0 C661.7,490.9 673.8,479.5 695.0,474.5 C716.2,469.5 743.3,476.0 770.0,473.0 C796.7,470.0 830.8,461.0 855.0,456.5 C879.2,452.0 895.0,449.8 915.0,446.0 C935.0,442.2 958.3,438.5 975.0,434.0 C991.7,429.5 998.3,426.5 1015.0,419.0 C1031.7,411.5 1054.5,399.0 1075.0,389.0 C1095.5,379.0 1127.5,364.0 1138.0,359.0" fill="none" stroke="#cfcfd2" stroke-width="1.8"/><path d="M535.0,730.0 C545.0,735.0 565.0,754.0 595.0,760.0 C625.0,766.0 678.0,767.5 715.0,766.0 C752.0,764.5 793.7,755.0 817.0,751.0 C840.3,747.0 848.7,743.5 855.0,742.0" fill="none" stroke="#cfcfd2" stroke-width="1.8"/><path d="M948.0,494.0 C950.0,489.0 954.2,473.2 960.0,464.0 C965.8,454.8 973.3,447.0 982.5,438.5 C991.7,430.0 1005.4,419.4 1015.0,413.0 C1024.6,406.6 1035.8,402.2 1040.0,400.0" fill="none" stroke="#cfcfd2" stroke-width="1.8"/><path d="M927.0,359.0 L927.0,449.0" fill="none" stroke="#cfcfd2" stroke-width="1.8"/><path d="M855.0,739.0 C866.2,743.2 906.2,757.6 922.5,764.0 C938.8,770.4 940.0,770.5 952.5,777.5 C965.0,784.5 987.1,799.2 997.5,806.0 C1007.9,812.8 1003.3,811.0 1015.0,818.0 C1026.7,825.0 1047.5,838.3 1067.5,848.0 C1087.5,857.7 1119.8,868.8 1135.0,876.0 C1150.2,883.2 1155.0,888.5 1159.0,891.0" fill="none" stroke="#cfcfd2" stroke-width="1.8"/><path d="M542.5,764.0 C543.8,771.5 546.2,794.0 550.0,809.0 C553.8,824.0 559.2,839.8 565.0,854.0 C570.8,868.2 581.2,887.3 584.5,894.0" fill="none" stroke="#cfcfd2" stroke-width="1.8"/><path d="M587.5,801.5 C583.8,807.8 572.5,823.6 565.0,839.0 C557.5,854.4 546.2,884.8 542.5,894.0" fill="none" stroke="#cfcfd2" stroke-width="1.8"/><path d="M848.0,359.0 C849.2,360.5 850.1,363.8 855.0,368.0 C859.9,372.2 870.0,379.0 877.5,384.5 C885.0,390.0 893.8,395.2 900.0,401.0 C906.2,406.8 910.5,413.0 915.0,419.0 C919.5,425.0 923.3,431.0 927.0,437.0 C930.7,443.0 934.8,448.7 937.0,455.0 C939.2,461.3 939.3,468.5 940.0,475.0 C940.7,481.5 939.2,485.8 941.0,494.0 C942.8,502.2 947.3,513.5 951.0,524.0 C954.7,534.5 959.0,544.5 963.0,557.0 C967.0,569.5 970.5,587.0 975.0,599.0 C979.5,611.0 986.0,619.0 990.0,629.0 C994.0,639.0 994.8,647.2 999.0,659.0 C1003.2,670.8 1010.3,689.5 1015.0,699.5 C1019.7,709.5 1023.7,711.4 1027.0,719.0 C1030.3,726.6 1033.2,737.5 1035.0,745.0 C1036.8,752.5 1036.8,757.1 1037.5,764.0 C1038.2,770.9 1040.2,780.2 1039.0,786.5 C1037.8,792.8 1030.2,795.8 1030.0,801.5 C1029.8,807.2 1032.5,815.2 1037.5,821.0 C1042.5,826.8 1051.2,830.5 1060.0,836.0 C1068.8,841.5 1077.5,847.0 1090.0,854.0 C1102.5,861.0 1123.5,871.5 1135.0,878.0 C1146.5,884.5 1154.0,889.8 1159.0,893.0 C1164.0,896.2 1164.0,896.3 1165.0,897.0" fill="none" stroke="#f0d070" stroke-width="5.2" stroke-linecap="round" stroke-linejoin="round"/><path d="M535.0,631.0 C542.5,632.2 560.0,636.8 580.0,638.5 C600.0,640.2 632.5,639.2 655.0,641.5 C677.5,643.8 695.0,651.8 715.0,652.0 C735.0,652.2 757.0,646.0 775.0,643.0 C793.0,640.0 809.7,636.6 823.0,634.0 C836.3,631.4 842.2,629.8 855.0,627.5 C867.8,625.2 886.2,622.8 900.0,620.0 C913.8,617.2 925.0,614.0 937.5,611.0 C950.0,608.0 968.2,603.7 975.0,602.0 C981.8,600.3 977.5,601.2 978.0,601.0" fill="none" stroke="#f0d070" stroke-width="5.2" stroke-linecap="round" stroke-linejoin="round"/><path d="M1372.5,359.0 C1373.2,362.0 1375.2,371.5 1377.0,377.0 C1378.8,382.5 1382.5,385.0 1383.0,392.0 C1383.5,399.0 1382.0,409.5 1380.0,419.0 C1378.0,428.5 1373.2,440.2 1371.0,449.0 C1368.8,457.8 1368.8,464.0 1366.5,471.5 C1364.2,479.0 1361.4,484.8 1357.5,494.0 C1353.6,503.2 1347.4,517.5 1343.0,527.0 C1338.6,536.5 1335.5,541.5 1331.0,551.0 C1326.5,560.5 1321.0,571.0 1316.0,584.0 C1311.0,597.0 1304.8,614.0 1301.0,629.0 C1297.2,644.0 1297.0,660.5 1293.5,674.0 C1290.0,687.5 1284.2,700.0 1280.0,710.0 C1275.8,720.0 1271.5,725.0 1268.0,734.0 C1264.5,743.0 1262.0,754.0 1259.0,764.0 C1256.0,774.0 1253.5,782.0 1250.0,794.0 C1246.5,806.0 1243.0,826.5 1238.0,836.0 C1233.0,845.5 1226.8,845.5 1220.0,851.0 C1213.2,856.5 1205.0,863.0 1197.5,869.0 C1190.0,875.0 1181.2,882.3 1175.0,887.0 C1168.8,891.7 1162.5,895.3 1160.0,897.0" fill="none" stroke="#f0d070" stroke-width="5.2" stroke-linecap="round" stroke-linejoin="round"/><path d="M1030.0,801.5 C1027.5,801.0 1019.7,798.5 1015.0,798.5 C1010.3,798.5 1005.4,799.0 1002.0,801.5 C998.6,804.0 995.2,804.8 994.5,813.5 C993.8,822.2 996.8,840.1 997.5,854.0 C998.2,867.9 998.8,889.8 999.0,897.0" fill="none" stroke="#f0d070" stroke-width="5.2" stroke-linecap="round" stroke-linejoin="round"/><path d="M535.0,763.0 C540.0,764.5 556.0,770.0 565.0,772.0 C574.0,774.0 583.5,772.0 589.0,775.0 C594.5,778.0 594.0,787.8 598.0,790.0 C602.0,792.2 608.5,785.5 613.0,788.5 C617.5,791.5 618.0,802.2 625.0,808.0 C632.0,813.8 646.5,817.5 655.0,823.0 C663.5,828.5 669.3,833.6 676.0,841.0 C682.7,848.4 686.8,862.3 695.0,867.5 C703.2,872.7 710.0,871.4 725.0,872.0 C740.0,872.6 772.5,870.5 785.0,871.0 C797.5,871.5 795.0,871.3 800.0,875.0 C805.0,878.7 812.3,889.3 815.0,893.0 C817.7,896.7 815.8,896.3 816.0,897.0" fill="none" stroke="#f0d070" stroke-width="5.2" stroke-linecap="round" stroke-linejoin="round"/><path d="M848.0,359.0 C849.2,360.5 850.1,363.8 855.0,368.0 C859.9,372.2 870.0,379.0 877.5,384.5 C885.0,390.0 893.8,395.2 900.0,401.0 C906.2,406.8 910.5,413.0 915.0,419.0 C919.5,425.0 923.3,431.0 927.0,437.0 C930.7,443.0 934.8,448.7 937.0,455.0 C939.2,461.3 939.3,468.5 940.0,475.0 C940.7,481.5 939.2,485.8 941.0,494.0 C942.8,502.2 947.3,513.5 951.0,524.0 C954.7,534.5 959.0,544.5 963.0,557.0 C967.0,569.5 970.5,587.0 975.0,599.0 C979.5,611.0 986.0,619.0 990.0,629.0 C994.0,639.0 994.8,647.2 999.0,659.0 C1003.2,670.8 1010.3,689.5 1015.0,699.5 C1019.7,709.5 1023.7,711.4 1027.0,719.0 C1030.3,726.6 1033.2,737.5 1035.0,745.0 C1036.8,752.5 1036.8,757.1 1037.5,764.0 C1038.2,770.9 1040.2,780.2 1039.0,786.5 C1037.8,792.8 1030.2,795.8 1030.0,801.5 C1029.8,807.2 1032.5,815.2 1037.5,821.0 C1042.5,826.8 1051.2,830.5 1060.0,836.0 C1068.8,841.5 1077.5,847.0 1090.0,854.0 C1102.5,861.0 1123.5,871.5 1135.0,878.0 C1146.5,884.5 1154.0,889.8 1159.0,893.0 C1164.0,896.2 1164.0,896.3 1165.0,897.0" fill="none" stroke="#fde68f" stroke-width="3.6" stroke-linecap="round" stroke-linejoin="round"/><path d="M535.0,631.0 C542.5,632.2 560.0,636.8 580.0,638.5 C600.0,640.2 632.5,639.2 655.0,641.5 C677.5,643.8 695.0,651.8 715.0,652.0 C735.0,652.2 757.0,646.0 775.0,643.0 C793.0,640.0 809.7,636.6 823.0,634.0 C836.3,631.4 842.2,629.8 855.0,627.5 C867.8,625.2 886.2,622.8 900.0,620.0 C913.8,617.2 925.0,614.0 937.5,611.0 C950.0,608.0 968.2,603.7 975.0,602.0 C981.8,600.3 977.5,601.2 978.0,601.0" fill="none" stroke="#fde68f" stroke-width="3.6" stroke-linecap="round" stroke-linejoin="round"/><path d="M1372.5,359.0 C1373.2,362.0 1375.2,371.5 1377.0,377.0 C1378.8,382.5 1382.5,385.0 1383.0,392.0 C1383.5,399.0 1382.0,409.5 1380.0,419.0 C1378.0,428.5 1373.2,440.2 1371.0,449.0 C1368.8,457.8 1368.8,464.0 1366.5,471.5 C1364.2,479.0 1361.4,484.8 1357.5,494.0 C1353.6,503.2 1347.4,517.5 1343.0,527.0 C1338.6,536.5 1335.5,541.5 1331.0,551.0 C1326.5,560.5 1321.0,571.0 1316.0,584.0 C1311.0,597.0 1304.8,614.0 1301.0,629.0 C1297.2,644.0 1297.0,660.5 1293.5,674.0 C1290.0,687.5 1284.2,700.0 1280.0,710.0 C1275.8,720.0 1271.5,725.0 1268.0,734.0 C1264.5,743.0 1262.0,754.0 1259.0,764.0 C1256.0,774.0 1253.5,782.0 1250.0,794.0 C1246.5,806.0 1243.0,826.5 1238.0,836.0 C1233.0,845.5 1226.8,845.5 1220.0,851.0 C1213.2,856.5 1205.0,863.0 1197.5,869.0 C1190.0,875.0 1181.2,882.3 1175.0,887.0 C1168.8,891.7 1162.5,895.3 1160.0,897.0" fill="none" stroke="#fde68f" stroke-width="3.6" stroke-linecap="round" stroke-linejoin="round"/><path d="M1030.0,801.5 C1027.5,801.0 1019.7,798.5 1015.0,798.5 C1010.3,798.5 1005.4,799.0 1002.0,801.5 C998.6,804.0 995.2,804.8 994.5,813.5 C993.8,822.2 996.8,840.1 997.5,854.0 C998.2,867.9 998.8,889.8 999.0,897.0" fill="none" stroke="#fde68f" stroke-width="3.6" stroke-linecap="round" stroke-linejoin="round"/><path d="M535.0,763.0 C540.0,764.5 556.0,770.0 565.0,772.0 C574.0,774.0 583.5,772.0 589.0,775.0 C594.5,778.0 594.0,787.8 598.0,790.0 C602.0,792.2 608.5,785.5 613.0,788.5 C617.5,791.5 618.0,802.2 625.0,808.0 C632.0,813.8 646.5,817.5 655.0,823.0 C663.5,828.5 669.3,833.6 676.0,841.0 C682.7,848.4 686.8,862.3 695.0,867.5 C703.2,872.7 710.0,871.4 725.0,872.0 C740.0,872.6 772.5,870.5 785.0,871.0 C797.5,871.5 795.0,871.3 800.0,875.0 C805.0,878.7 812.3,889.3 815.0,893.0 C817.7,896.7 815.8,896.3 816.0,897.0" fill="none" stroke="#fde68f" stroke-width="3.6" stroke-linecap="round" stroke-linejoin="round"/><circle cx="823" cy="634" r="4" fill="#fde58f" stroke="#f2cf63"/><g transform="translate(754,473)"><rect x="-5" y="-2" width="10" height="1.3" fill="#e0302a"/><rect x="-5" y="0.7" width="10" height="1.3" fill="#e0302a"/><path d="M-2,-4 L2,0 L-2,4" fill="none" stroke="#e0302a" stroke-width="1"/></g><g transform="translate(914,447)"><rect x="-5" y="-2" width="10" height="1.3" fill="#e0302a"/><rect x="-5" y="0.7" width="10" height="1.3" fill="#e0302a"/><path d="M-2,-4 L2,0 L-2,4" fill="none" stroke="#e0302a" stroke-width="1"/></g><g transform="translate(1046,404)"><rect x="-5" y="-2" width="10" height="1.3" fill="#e0302a"/><rect x="-5" y="0.7" width="10" height="1.3" fill="#e0302a"/><path d="M-2,-4 L2,0 L-2,4" fill="none" stroke="#e0302a" stroke-width="1"/></g><g transform="translate(586,548)"><rect x="-5" y="-2" width="10" height="1.3" fill="#e0302a"/><rect x="-5" y="0.7" width="10" height="1.3" fill="#e0302a"/><path d="M-2,-4 L2,0 L-2,4" fill="none" stroke="#e0302a" stroke-width="1"/></g><g transform="translate(817,751)"><rect x="-5" y="-2" width="10" height="1.3" fill="#e0302a"/><rect x="-5" y="0.7" width="10" height="1.3" fill="#e0302a"/><path d="M-2,-4 L2,0 L-2,4" fill="none" stroke="#e0302a" stroke-width="1"/></g><g transform="translate(586,760)"><rect x="-5" y="-2" width="10" height="1.3" fill="#e0302a"/><rect x="-5" y="0.7" width="10" height="1.3" fill="#e0302a"/><path d="M-2,-4 L2,0 L-2,4" fill="none" stroke="#e0302a" stroke-width="1"/></g><g transform="translate(1008,815)"><rect x="-5" y="-2" width="10" height="1.3" fill="#e0302a"/><rect x="-5" y="0.7" width="10" height="1.3" fill="#e0302a"/><path d="M-2,-4 L2,0 L-2,4" fill="none" stroke="#e0302a" stroke-width="1"/></g><text x="650" y="427" text-anchor="middle" dominant-baseline="middle" fill="#6d9ad4" style="font-family:'Liberation Sans';font-size:10px;font-weight:normal;letter-spacing:0px" transform="rotate(-27 650 427)">River Thames</text><text x="990" y="382" text-anchor="middle" dominant-baseline="middle" fill="#76839a" style="font-family:'Liberation Sans';font-size:11px;font-weight:bold;letter-spacing:1.9px" stroke="#fff" stroke-width="2.2" stroke-linejoin="round" paint-order="stroke">NEW CHARLTON</text><text x="918" y="563" text-anchor="middle" dominant-baseline="middle" fill="#76839a" style="font-family:'Liberation Sans';font-size:11px;font-weight:bold;letter-spacing:1.9px" stroke="#fff" stroke-width="2.2" stroke-linejoin="round" paint-order="stroke">VANBRUGH</text><text x="918" y="577" text-anchor="middle" dominant-baseline="middle" fill="#76839a" style="font-family:'Liberation Sans';font-size:11px;font-weight:bold;letter-spacing:1.9px" stroke="#fff" stroke-width="2.2" stroke-linejoin="round" paint-order="stroke">PARK</text><text x="1369" y="688" text-anchor="middle" dominant-baseline="middle" fill="#76839a" style="font-family:'Liberation Sans';font-size:11px;font-weight:bold;letter-spacing:1.9px" stroke="#fff" stroke-width="2.2" stroke-linejoin="round" paint-order="stroke">SHOOTER&#8217;S HILL</text><text x="648" y="830" text-anchor="middle" dominant-baseline="middle" fill="#76839a" style="font-family:'Liberation Sans';font-size:11px;font-weight:bold;letter-spacing:1.9px" stroke="#fff" stroke-width="2.2" stroke-linejoin="round" paint-order="stroke">LEWISHAM</text><text x="1425" y="358" text-anchor="middle" dominant-baseline="middle" fill="#76839a" style="font-family:'Liberation Sans';font-size:11px;font-weight:bold;letter-spacing:1.9px" stroke="#fff" stroke-width="2.2" stroke-linejoin="round" paint-order="stroke">WOOLWICH</text><text x="553" y="640" text-anchor="middle" dominant-baseline="middle" fill="#76839a" style="font-family:'Liberation Sans';font-size:11px;font-weight:bold;letter-spacing:1.9px" stroke="#fff" stroke-width="2.2" stroke-linejoin="round" paint-order="stroke">EWAY</text><text x="746" y="443" text-anchor="middle" dominant-baseline="middle" fill="#666a6e" style="font-family:'Liberation Sans';font-size:9px;font-weight:normal;letter-spacing:0px" stroke="#fff" stroke-width="2.2" stroke-linejoin="round" paint-order="stroke" transform="rotate(-27 746 443)">A206</text><text x="667" y="482" text-anchor="middle" dominant-baseline="middle" fill="#666a6e" style="font-family:'Liberation Sans';font-size:9px;font-weight:normal;letter-spacing:0px" stroke="#fff" stroke-width="2.2" stroke-linejoin="round" paint-order="stroke" transform="rotate(-30 667 482)">A206</text><text x="845" y="413" text-anchor="middle" dominant-baseline="middle" fill="#666a6e" style="font-family:'Liberation Sans';font-size:9px;font-weight:normal;letter-spacing:0px" stroke="#fff" stroke-width="2.2" stroke-linejoin="round" paint-order="stroke" transform="rotate(-3 845 413)">A206</text><text x="986" y="395" text-anchor="middle" dominant-baseline="middle" fill="#666a6e" style="font-family:'Liberation Sans';font-size:9px;font-weight:normal;letter-spacing:0px" stroke="#fff" stroke-width="2.2" stroke-linejoin="round" paint-order="stroke" transform="rotate(-8 986 395)">A206</text><text x="1112" y="363" text-anchor="middle" dominant-baseline="middle" fill="#666a6e" style="font-family:'Liberation Sans';font-size:9px;font-weight:normal;letter-spacing:0px" stroke="#fff" stroke-width="2.2" stroke-linejoin="round" paint-order="stroke" transform="rotate(-15 1112 363)">A20</text><text x="594" y="493" text-anchor="middle" dominant-baseline="middle" fill="#666a6e" style="font-family:'Liberation Sans';font-size:9px;font-weight:normal;letter-spacing:0px" stroke="#fff" stroke-width="2.2" stroke-linejoin="round" paint-order="stroke">A200</text><text x="558" y="508" text-anchor="middle" dominant-baseline="middle" fill="#666a6e" style="font-family:'Liberation Sans';font-size:9px;font-weight:normal;letter-spacing:0px" stroke="#fff" stroke-width="2.2" stroke-linejoin="round" paint-order="stroke" transform="rotate(-62 558 508)">B208</text><text x="590" y="605" text-anchor="middle" dominant-baseline="middle" fill="#666a6e" style="font-family:'Liberation Sans';font-size:9px;font-weight:normal;letter-spacing:0px" stroke="#fff" stroke-width="2.2" stroke-linejoin="round" paint-order="stroke" transform="rotate(-72 590 605)">Greenwich S St</text><text x="810" y="374" text-anchor="middle" dominant-baseline="middle" fill="#666a6e" style="font-family:'Liberation Sans';font-size:9px;font-weight:normal;letter-spacing:0px" stroke="#fff" stroke-width="2.2" stroke-linejoin="round" paint-order="stroke" transform="rotate(-80 810 374)">Black</text><text x="909" y="372" text-anchor="middle" dominant-baseline="middle" fill="#666a6e" style="font-family:'Liberation Sans';font-size:9px;font-weight:normal;letter-spacing:0px" stroke="#fff" stroke-width="2.2" stroke-linejoin="round" paint-order="stroke" transform="rotate(-85 909 372)">A102(</text><text x="1068" y="433" text-anchor="middle" dominant-baseline="middle" fill="#666a6e" style="font-family:'Liberation Sans';font-size:9px;font-weight:normal;letter-spacing:0px" stroke="#fff" stroke-width="2.2" stroke-linejoin="round" paint-order="stroke" transform="rotate(68 1068 433)">Charlton Church Ln</text><text x="1108" y="492" text-anchor="middle" dominant-baseline="middle" fill="#666a6e" style="font-family:'Liberation Sans';font-size:9px;font-weight:normal;letter-spacing:0px" stroke="#fff" stroke-width="2.2" stroke-linejoin="round" paint-order="stroke" transform="rotate(-25 1108 492)">B210</text><text x="1163" y="484" text-anchor="middle" dominant-baseline="middle" fill="#666a6e" style="font-family:'Liberation Sans';font-size:9px;font-weight:normal;letter-spacing:0px" stroke="#fff" stroke-width="2.2" stroke-linejoin="round" paint-order="stroke" transform="rotate(-3 1163 484)">Charlton Park Rd</text><text x="1010" y="524" text-anchor="middle" dominant-baseline="middle" fill="#666a6e" style="font-family:'Liberation Sans';font-size:9px;font-weight:normal;letter-spacing:0px" stroke="#fff" stroke-width="2.2" stroke-linejoin="round" paint-order="stroke" transform="rotate(-5 1010 524)">B210</text><text x="1333" y="394" text-anchor="middle" dominant-baseline="middle" fill="#666a6e" style="font-family:'Liberation Sans';font-size:9px;font-weight:normal;letter-spacing:0px" stroke="#fff" stroke-width="2.2" stroke-linejoin="round" paint-order="stroke" transform="rotate(-8 1333 394)">B210</text><text x="1278" y="408" text-anchor="middle" dominant-baseline="middle" fill="#666a6e" style="font-family:'Liberation Sans';font-size:9px;font-weight:normal;letter-spacing:0px" stroke="#fff" stroke-width="2.2" stroke-linejoin="round" paint-order="stroke" transform="rotate(-28 1278 408)">Hillreach</text><text x="1222" y="440" text-anchor="middle" dominant-baseline="middle" fill="#666a6e" style="font-family:'Liberation Sans';font-size:9px;font-weight:normal;letter-spacing:0px" stroke="#fff" stroke-width="2.2" stroke-linejoin="round" paint-order="stroke" transform="rotate(-52 1222 440)">Little Heath</text><text x="1336" y="488" text-anchor="middle" dominant-baseline="middle" fill="#666a6e" style="font-family:'Liberation Sans';font-size:9px;font-weight:normal;letter-spacing:0px" stroke="#fff" stroke-width="2.2" stroke-linejoin="round" paint-order="stroke" transform="rotate(-25 1336 488)">Ha-Ha Rd</text><text x="1375" y="430" text-anchor="middle" dominant-baseline="middle" fill="#666a6e" style="font-family:'Liberation Sans';font-size:9px;font-weight:normal;letter-spacing:0px" stroke="#fff" stroke-width="2.2" stroke-linejoin="round" paint-order="stroke" transform="rotate(-75 1375 430)">A205</text><text x="1346" y="527" text-anchor="middle" dominant-baseline="middle" fill="#666a6e" style="font-family:'Liberation Sans';font-size:9px;font-weight:normal;letter-spacing:0px" stroke="#fff" stroke-width="2.2" stroke-linejoin="round" paint-order="stroke" transform="rotate(-65 1346 527)">A205</text><text x="1486" y="410" text-anchor="middle" dominant-baseline="middle" fill="#666a6e" style="font-family:'Liberation Sans';font-size:9px;font-weight:normal;letter-spacing:0px" stroke="#fff" stroke-width="2.2" stroke-linejoin="round" paint-order="stroke" transform="rotate(-88 1486 410)">Burrage Rd</text><text x="1444" y="503" text-anchor="middle" dominant-baseline="middle" fill="#666a6e" style="font-family:'Liberation Sans';font-size:9px;font-weight:normal;letter-spacing:0px" stroke="#fff" stroke-width="2.2" stroke-linejoin="round" paint-order="stroke" transform="rotate(-80 1444 503)">Herbert Rd</text><text x="1140" y="583" text-anchor="middle" dominant-baseline="middle" fill="#666a6e" style="font-family:'Liberation Sans';font-size:9px;font-weight:normal;letter-spacing:0px" stroke="#fff" stroke-width="2.2" stroke-linejoin="round" paint-order="stroke" transform="rotate(-58 1140 583)">Charlton Park Ln</text><text x="1226" y="527" text-anchor="middle" dominant-baseline="middle" fill="#666a6e" style="font-family:'Liberation Sans';font-size:9px;font-weight:normal;letter-spacing:0px" stroke="#fff" stroke-width="2.2" stroke-linejoin="round" paint-order="stroke" transform="rotate(-12 1226 527)">Charlton Park</text><text x="1004" y="597" text-anchor="middle" dominant-baseline="middle" fill="#666a6e" style="font-family:'Liberation Sans';font-size:9px;font-weight:normal;letter-spacing:0px" stroke="#fff" stroke-width="2.2" stroke-linejoin="round" paint-order="stroke" transform="rotate(-8 1004 597)">A207</text><text x="911" y="621" text-anchor="middle" dominant-baseline="middle" fill="#666a6e" style="font-family:'Liberation Sans';font-size:10px;font-weight:normal;letter-spacing:0px" stroke="#fff" stroke-width="2.2" stroke-linejoin="round" paint-order="stroke" transform="rotate(-10 911 621)">A2</text><text x="956" y="640" text-anchor="middle" dominant-baseline="middle" fill="#666a6e" style="font-family:'Liberation Sans';font-size:9px;font-weight:normal;letter-spacing:0px" stroke="#fff" stroke-width="2.2" stroke-linejoin="round" paint-order="stroke" transform="rotate(78 956 640)">A2213</text><text x="1004" y="662" text-anchor="middle" dominant-baseline="middle" fill="#666a6e" style="font-family:'Liberation Sans';font-size:10px;font-weight:normal;letter-spacing:0px" stroke="#fff" stroke-width="2.2" stroke-linejoin="round" paint-order="stroke" transform="rotate(68 1004 662)">A2</text><text x="793" y="614" text-anchor="middle" dominant-baseline="middle" fill="#666a6e" style="font-family:'Liberation Sans';font-size:9px;font-weight:normal;letter-spacing:0px" stroke="#fff" stroke-width="2.2" stroke-linejoin="round" paint-order="stroke" transform="rotate(-25 793 614)">Charlton Way</text><text x="742" y="650" text-anchor="middle" dominant-baseline="middle" fill="#666a6e" style="font-family:'Liberation Sans';font-size:10px;font-weight:normal;letter-spacing:0px" stroke="#fff" stroke-width="2.2" stroke-linejoin="round" paint-order="stroke" transform="rotate(-8 742 650)">A2</text><text x="616" y="642" text-anchor="middle" dominant-baseline="middle" fill="#7a5a2a" style="font-family:'Liberation Sans';font-size:10px;font-weight:normal;letter-spacing:0px" stroke="#fff" stroke-width="2.2" stroke-linejoin="round" paint-order="stroke" transform="rotate(5 616 642)">Blackheath Hill</text><text x="584" y="695" text-anchor="middle" dominant-baseline="middle" fill="#666a6e" style="font-family:'Liberation Sans';font-size:9px;font-weight:normal;letter-spacing:0px" stroke="#fff" stroke-width="2.2" stroke-linejoin="round" paint-order="stroke" transform="rotate(68 584 695)">Lewisham Rd</text><text x="869" y="644" text-anchor="middle" dominant-baseline="middle" fill="#666a6e" style="font-family:'Liberation Sans';font-size:9px;font-weight:normal;letter-spacing:0px" stroke="#fff" stroke-width="2.2" stroke-linejoin="round" paint-order="stroke" transform="rotate(-55 869 644)">B212</text><text x="801" y="715" text-anchor="middle" dominant-baseline="middle" fill="#666a6e" style="font-family:'Liberation Sans';font-size:9px;font-weight:normal;letter-spacing:0px" stroke="#fff" stroke-width="2.2" stroke-linejoin="round" paint-order="stroke" transform="rotate(-45 801 715)">B212</text><text x="547" y="743" text-anchor="middle" dominant-baseline="middle" fill="#666a6e" style="font-family:'Liberation Sans';font-size:9px;font-weight:normal;letter-spacing:0px" stroke="#fff" stroke-width="2.2" stroke-linejoin="round" paint-order="stroke" transform="rotate(30 547 743)">A2210</text><text x="660" y="801" text-anchor="middle" dominant-baseline="middle" fill="#666a6e" style="font-family:'Liberation Sans';font-size:9px;font-weight:normal;letter-spacing:0px" stroke="#fff" stroke-width="2.2" stroke-linejoin="round" paint-order="stroke" transform="rotate(6 660 801)">Belmont Hill</text><text x="771" y="790" text-anchor="middle" dominant-baseline="middle" fill="#666a6e" style="font-family:'Liberation Sans';font-size:9px;font-weight:normal;letter-spacing:0px" stroke="#fff" stroke-width="2.2" stroke-linejoin="round" paint-order="stroke" transform="rotate(-10 771 790)">Lee Terrace</text><text x="730" y="873" text-anchor="middle" dominant-baseline="middle" fill="#666a6e" style="font-family:'Liberation Sans';font-size:10px;font-weight:normal;letter-spacing:0px" stroke="#fff" stroke-width="2.2" stroke-linejoin="round" paint-order="stroke">A20</text><text x="840" y="884" text-anchor="middle" dominant-baseline="middle" fill="#666a6e" style="font-family:'Liberation Sans';font-size:9px;font-weight:normal;letter-spacing:0px" stroke="#fff" stroke-width="2.2" stroke-linejoin="round" paint-order="stroke" transform="rotate(78 840 884)">B21</text><text x="1278" y="661" text-anchor="middle" dominant-baseline="middle" fill="#666a6e" style="font-family:'Liberation Sans';font-size:9px;font-weight:normal;letter-spacing:0px" stroke="#fff" stroke-width="2.2" stroke-linejoin="round" paint-order="stroke" transform="rotate(15 1278 661)">A207</text><text x="1112" y="795" text-anchor="middle" dominant-baseline="middle" fill="#666a6e" style="font-family:'Liberation Sans';font-size:9px;font-weight:normal;letter-spacing:0px" stroke="#fff" stroke-width="2.2" stroke-linejoin="round" paint-order="stroke" transform="rotate(30 1112 795)">Rochester Way</text><text x="1350" y="824" text-anchor="middle" dominant-baseline="middle" fill="#666a6e" style="font-family:'Liberation Sans';font-size:9px;font-weight:normal;letter-spacing:0px" stroke="#fff" stroke-width="2.2" stroke-linejoin="round" paint-order="stroke" transform="rotate(-10 1350 824)">Rochester Way</text><text x="1468" y="813" text-anchor="middle" dominant-baseline="middle" fill="#666a6e" style="font-family:'Liberation Sans';font-size:9px;font-weight:normal;letter-spacing:0px" stroke="#fff" stroke-width="2.2" stroke-linejoin="round" paint-order="stroke" transform="rotate(5 1468 813)">Rochester</text><text x="1265" y="747" text-anchor="middle" dominant-baseline="middle" fill="#666a6e" style="font-family:'Liberation Sans';font-size:9px;font-weight:normal;letter-spacing:0px" stroke="#fff" stroke-width="2.2" stroke-linejoin="round" paint-order="stroke" transform="rotate(-72 1265 747)">A205</text><text x="1241" y="866" text-anchor="middle" dominant-baseline="middle" fill="#666a6e" style="font-family:'Liberation Sans';font-size:9px;font-weight:normal;letter-spacing:0px" stroke="#fff" stroke-width="2.2" stroke-linejoin="round" paint-order="stroke" transform="rotate(90 1241 866)">A208</text><text x="1001" y="867" text-anchor="middle" dominant-baseline="middle" fill="#666a6e" style="font-family:'Liberation Sans';font-size:9px;font-weight:normal;letter-spacing:0px" stroke="#fff" stroke-width="2.2" stroke-linejoin="round" paint-order="stroke" transform="rotate(90 1001 867)">A2213</text><text x="1064" y="840" text-anchor="middle" dominant-baseline="middle" fill="#666a6e" style="font-family:'Liberation Sans';font-size:10px;font-weight:normal;letter-spacing:0px" stroke="#fff" stroke-width="2.2" stroke-linejoin="round" paint-order="stroke" transform="rotate(35 1064 840)">A2</text><text x="1437" y="572" text-anchor="middle" dominant-baseline="middle" fill="#666a6e" style="font-family:'Liberation Sans';font-size:9px;font-weight:normal;letter-spacing:0px" stroke="#fff" stroke-width="2.2" stroke-linejoin="round" paint-order="stroke" transform="rotate(-88 1437 572)">Eglinton Hill</text><text x="1487" y="535" text-anchor="middle" dominant-baseline="middle" fill="#666a6e" style="font-family:'Liberation Sans';font-size:9px;font-weight:normal;letter-spacing:0px" stroke="#fff" stroke-width="2.2" stroke-linejoin="round" paint-order="stroke" transform="rotate(70 1487 535)">Plu</text><text x="1313" y="591" text-anchor="middle" dominant-baseline="middle" fill="#666a6e" style="font-family:'Liberation Sans';font-size:9px;font-weight:normal;letter-spacing:0px" stroke="#fff" stroke-width="2.2" stroke-linejoin="round" paint-order="stroke" transform="rotate(-72 1313 591)">A205</text><path id="tun" d="M846.0,362.0 C848.0,363.3 852.8,366.2 858.0,370.0 C863.2,373.8 870.5,379.3 877.5,384.5 C884.5,389.7 893.8,395.2 900.0,401.0 C906.2,406.8 910.5,413.0 915.0,419.0 C919.5,425.0 923.3,431.0 927.0,437.0 C930.7,443.0 934.5,449.5 937.0,455.0 C939.5,460.5 941.2,467.5 942.0,470.0" fill="none"/><text style="font-family:'Liberation Sans';font-size:10px" fill="#7a5a2a" dy="3.5"><textPath href="#tun">all Tunnel Southern Approach</textPath></text><path d="M1111.0,524.0 L1102.0,526.0 L1085.5,530.0 L1075.0,527.7 L1064.5,522.5 L1036.0,521.7 L1015.0,522.5 L975.0,527.0 L951.0,540.5 L936.0,548.0 L924.0,551.5 L921.0,542.0 L915.0,537.5 L894.0,536.0 L870.0,538.0 L855.0,539.0 L829.0,530.0 L814.0,518.0 L793.0,518.0 L775.0,519.0 L772.0,539.0 L766.0,560.0 L733.0,578.0 L703.0,593.0 L685.0,593.0 L685.0,599.0 L703.0,626.0 L721.0,652.0 L745.0,679.0 L757.0,697.0 L772.0,710.5 L805.0,706.0 L832.0,691.0 L855.0,686.5 L900.0,682.0 L924.0,673.0 L945.0,664.0 L957.0,688.0 L978.0,694.0 L981.0,709.0 L999.0,731.0 L1015.0,738.5 L1033.0,747.5 L1064.5,761.0 L1075.0,752.0 L1093.0,743.0 L1135.0,723.5 L1175.0,713.0 L1205.0,705.5 L1220.0,698.0 L1247.0,692.0 L1259.0,688.0 L1283.0,695.0 L1289.0,683.0 L1292.0,659.0 L1295.0,629.0 L1302.5,614.0 L1313.0,584.0 L1325.0,554.0 L1335.0,531.5 L1341.0,520.0 L1335.0,510.5 L1325.0,504.5 L1311.5,500.0 L1295.0,506.0 L1268.0,512.7 L1250.0,516.5 L1232.0,522.5 L1224.5,510.5 L1218.5,498.5 L1197.5,495.5 L1175.0,498.5 L1149.0,501.5 L1146.0,491.0 L1125.0,491.0 L1105.0,494.0 L1105.0,507.5 L1099.0,512.0 L1102.0,526.0 L1111.0,524.0" fill="none" stroke="#d4e9fb" stroke-width="5.2" stroke-linejoin="round" stroke-linecap="round" opacity="0.8"/><path d="M1111.0,524.0 L1102.0,526.0 L1085.5,530.0 L1075.0,527.7 L1064.5,522.5 L1036.0,521.7 L1015.0,522.5 L975.0,527.0 L951.0,540.5 L936.0,548.0 L924.0,551.5 L921.0,542.0 L915.0,537.5 L894.0,536.0 L870.0,538.0 L855.0,539.0 L829.0,530.0 L814.0,518.0 L793.0,518.0 L775.0,519.0 L772.0,539.0 L766.0,560.0 L733.0,578.0 L703.0,593.0 L685.0,593.0 L685.0,599.0 L703.0,626.0 L721.0,652.0 L745.0,679.0 L757.0,697.0 L772.0,710.5 L805.0,706.0 L832.0,691.0 L855.0,686.5 L900.0,682.0 L924.0,673.0 L945.0,664.0 L957.0,688.0 L978.0,694.0 L981.0,709.0 L999.0,731.0 L1015.0,738.5 L1033.0,747.5 L1064.5,761.0 L1075.0,752.0 L1093.0,743.0 L1135.0,723.5 L1175.0,713.0 L1205.0,705.5 L1220.0,698.0 L1247.0,692.0 L1259.0,688.0 L1283.0,695.0 L1289.0,683.0 L1292.0,659.0 L1295.0,629.0 L1302.5,614.0 L1313.0,584.0 L1325.0,554.0 L1335.0,531.5 L1341.0,520.0 L1335.0,510.5 L1325.0,504.5 L1311.5,500.0 L1295.0,506.0 L1268.0,512.7 L1250.0,516.5 L1232.0,522.5 L1224.5,510.5 L1218.5,498.5 L1197.5,495.5 L1175.0,498.5 L1149.0,501.5 L1146.0,491.0 L1125.0,491.0 L1105.0,494.0 L1105.0,507.5 L1099.0,512.0 L1102.0,526.0 L1111.0,524.0" fill="none" stroke="#62a3ec" stroke-width="3.1" stroke-linejoin="round" stroke-linecap="round"/><g transform="translate(1029,522.5) rotate(180)"><path d="M6.5,0 L-3,-6.5 L-2,-2.2 L-7.5,-2.2 L-7.5,2.2 L-2,2.2 L-3,6.5 Z" fill="#a9cdf3" stroke="#5a7fb0" stroke-width="0.8" stroke-linejoin="round"/></g><g transform="translate(942,545) rotate(160)"><path d="M6.5,0 L-3,-6.5 L-2,-2.2 L-7.5,-2.2 L-7.5,2.2 L-2,2.2 L-3,6.5 Z" fill="#a9cdf3" stroke="#5a7fb0" stroke-width="0.8" stroke-linejoin="round"/></g><g transform="translate(867,538) rotate(180)"><path d="M6.5,0 L-3,-6.5 L-2,-2.2 L-7.5,-2.2 L-7.5,2.2 L-2,2.2 L-3,6.5 Z" fill="#a9cdf3" stroke="#5a7fb0" stroke-width="0.8" stroke-linejoin="round"/></g><g transform="translate(1108,495) rotate(180)"><path d="M6.5,0 L-3,-6.5 L-2,-2.2 L-7.5,-2.2 L-7.5,2.2 L-2,2.2 L-3,6.5 Z" fill="#a9cdf3" stroke="#5a7fb0" stroke-width="0.8" stroke-linejoin="round"/></g><g transform="translate(782,518) rotate(180)"><path d="M6.5,0 L-3,-6.5 L-2,-2.2 L-7.5,-2.2 L-7.5,2.2 L-2,2.2 L-3,6.5 Z" fill="#a9cdf3" stroke="#5a7fb0" stroke-width="0.8" stroke-linejoin="round"/></g><g transform="translate(734,578) rotate(155)"><path d="M6.5,0 L-3,-6.5 L-2,-2.2 L-7.5,-2.2 L-7.5,2.2 L-2,2.2 L-3,6.5 Z" fill="#a9cdf3" stroke="#5a7fb0" stroke-width="0.8" stroke-linejoin="round"/></g><g transform="translate(701,625) rotate(60)"><path d="M6.5,0 L-3,-6.5 L-2,-2.2 L-7.5,-2.2 L-7.5,2.2 L-2,2.2 L-3,6.5 Z" fill="#a9cdf3" stroke="#5a7fb0" stroke-width="0.8" stroke-linejoin="round"/></g><g transform="translate(757,695) rotate(55)"><path d="M6.5,0 L-3,-6.5 L-2,-2.2 L-7.5,-2.2 L-7.5,2.2 L-2,2.2 L-3,6.5 Z" fill="#a9cdf3" stroke="#5a7fb0" stroke-width="0.8" stroke-linejoin="round"/></g><g transform="translate(835,690) rotate(-30)"><path d="M6.5,0 L-3,-6.5 L-2,-2.2 L-7.5,-2.2 L-7.5,2.2 L-2,2.2 L-3,6.5 Z" fill="#a9cdf3" stroke="#5a7fb0" stroke-width="0.8" stroke-linejoin="round"/></g><g transform="translate(921,674) rotate(-25)"><path d="M6.5,0 L-3,-6.5 L-2,-2.2 L-7.5,-2.2 L-7.5,2.2 L-2,2.2 L-3,6.5 Z" fill="#a9cdf3" stroke="#5a7fb0" stroke-width="0.8" stroke-linejoin="round"/></g><g transform="translate(979,707) rotate(90)"><path d="M6.5,0 L-3,-6.5 L-2,-2.2 L-7.5,-2.2 L-7.5,2.2 L-2,2.2 L-3,6.5 Z" fill="#a9cdf3" stroke="#5a7fb0" stroke-width="0.8" stroke-linejoin="round"/></g><g transform="translate(1052,756) rotate(20)"><path d="M6.5,0 L-3,-6.5 L-2,-2.2 L-7.5,-2.2 L-7.5,2.2 L-2,2.2 L-3,6.5 Z" fill="#a9cdf3" stroke="#5a7fb0" stroke-width="0.8" stroke-linejoin="round"/></g><g transform="translate(1128,729) rotate(-20)"><path d="M6.5,0 L-3,-6.5 L-2,-2.2 L-7.5,-2.2 L-7.5,2.2 L-2,2.2 L-3,6.5 Z" fill="#a9cdf3" stroke="#5a7fb0" stroke-width="0.8" stroke-linejoin="round"/></g><g transform="translate(1214,702) rotate(-20)"><path d="M6.5,0 L-3,-6.5 L-2,-2.2 L-7.5,-2.2 L-7.5,2.2 L-2,2.2 L-3,6.5 Z" fill="#a9cdf3" stroke="#5a7fb0" stroke-width="0.8" stroke-linejoin="round"/></g><g transform="translate(1290,684) rotate(-90)"><path d="M6.5,0 L-3,-6.5 L-2,-2.2 L-7.5,-2.2 L-7.5,2.2 L-2,2.2 L-3,6.5 Z" fill="#a9cdf3" stroke="#5a7fb0" stroke-width="0.8" stroke-linejoin="round"/></g><g transform="translate(1307,597) rotate(-72)"><path d="M6.5,0 L-3,-6.5 L-2,-2.2 L-7.5,-2.2 L-7.5,2.2 L-2,2.2 L-3,6.5 Z" fill="#a9cdf3" stroke="#5a7fb0" stroke-width="0.8" stroke-linejoin="round"/></g><g transform="translate(1340,516) rotate(-100)"><path d="M6.5,0 L-3,-6.5 L-2,-2.2 L-7.5,-2.2 L-7.5,2.2 L-2,2.2 L-3,6.5 Z" fill="#a9cdf3" stroke="#5a7fb0" stroke-width="0.8" stroke-linejoin="round"/></g><g transform="translate(1258,514) rotate(180)"><path d="M6.5,0 L-3,-6.5 L-2,-2.2 L-7.5,-2.2 L-7.5,2.2 L-2,2.2 L-3,6.5 Z" fill="#a9cdf3" stroke="#5a7fb0" stroke-width="0.8" stroke-linejoin="round"/></g><g transform="translate(1189,495) rotate(180)"><path d="M6.5,0 L-3,-6.5 L-2,-2.2 L-7.5,-2.2 L-7.5,2.2 L-2,2.2 L-3,6.5 Z" fill="#a9cdf3" stroke="#5a7fb0" stroke-width="0.8" stroke-linejoin="round"/></g><g transform="translate(894,536)"><path d="M0,-5.5 L5.5,0 L0,5.5 L-5.5,0Z" fill="#f2c94c" stroke="#222" stroke-width="0.9"/><text x="0" y="0.5" text-anchor="middle" dominant-baseline="middle" style="font-family:'Liberation Sans';font-size:6px;font-weight:bold" fill="#111">1</text></g><g transform="translate(703,593)"><path d="M0,-5.5 L5.5,0 L0,5.5 L-5.5,0Z" fill="#f2c94c" stroke="#222" stroke-width="0.9"/><text x="0" y="0.5" text-anchor="middle" dominant-baseline="middle" style="font-family:'Liberation Sans';font-size:6px;font-weight:bold" fill="#111">2</text></g><g transform="translate(841,688)"><path d="M0,-5.5 L5.5,0 L0,5.5 L-5.5,0Z" fill="#f2c94c" stroke="#222" stroke-width="0.9"/><text x="0" y="0.5" text-anchor="middle" dominant-baseline="middle" style="font-family:'Liberation Sans';font-size:6px;font-weight:bold" fill="#111">3</text></g><g transform="translate(1032,748)"><path d="M0,-5.5 L5.5,0 L0,5.5 L-5.5,0Z" fill="#f2c94c" stroke="#222" stroke-width="0.9"/><text x="0" y="0.5" text-anchor="middle" dominant-baseline="middle" style="font-family:'Liberation Sans';font-size:6px;font-weight:bold" fill="#111">4</text></g><g transform="translate(1251,691)"><path d="M0,-5.5 L5.5,0 L0,5.5 L-5.5,0Z" fill="#f2c94c" stroke="#222" stroke-width="0.9"/><text x="0" y="0.5" text-anchor="middle" dominant-baseline="middle" style="font-family:'Liberation Sans';font-size:6px;font-weight:bold" fill="#111">5</text></g><g transform="translate(1330,507)"><path d="M0,-5.5 L5.5,0 L0,5.5 L-5.5,0Z" fill="#f2c94c" stroke="#222" stroke-width="0.9"/><text x="0" y="0.5" text-anchor="middle" dominant-baseline="middle" style="font-family:'Liberation Sans';font-size:6px;font-weight:bold" fill="#111">6</text></g><g transform="translate(1124,492)"><path d="M0,-5.5 L5.5,0 L0,5.5 L-5.5,0Z" fill="#f2c94c" stroke="#222" stroke-width="0.9"/><text x="0" y="0.5" text-anchor="middle" dominant-baseline="middle" style="font-family:'Liberation Sans';font-size:6px;font-weight:bold" fill="#111">7</text></g><g transform="translate(1115.5,523)"><circle r="5.5" fill="#fff" stroke="#4f79b5" stroke-width="1.2"/><path d="M-2,-3.2 L3.2,0 L-2,3.2Z" fill="#3a9a2e"/></g><rect x="1445" y="368" width="36" height="36" fill="#fff" rx="1"/><path d="M1455,382 v-6 h6 M1471,376 h6 v6 M1477,390 v6 h-6 M1461,396 h-6 v-6" fill="none" stroke="#555" stroke-width="2" transform="translate(-3,0)"/><text x="541" y="882" dominant-baseline="middle" style="font-family:'Liberation Sans';font-size:16px;font-weight:bold" fill="#fff" stroke="#9a9a9a" stroke-width="0.6" paint-order="stroke">Google</text><rect x="1190" y="880" width="301" height="14" fill="#f5f5f5" opacity="0.85"/><text x="1197" y="887.5" dominant-baseline="middle" style="font-family:'Liberation Sans';font-size:9px" fill="#444">Map data &#169;2019</text><text x="1274" y="887.5" dominant-baseline="middle" style="font-family:'Liberation Sans';font-size:9px" fill="#444">200 m</text><path d="M1303,886 v4 h31 v-4" fill="none" stroke="#555" stroke-width="1.4"/><text x="1347" y="887.5" dominant-baseline="middle" style="font-family:'Liberation Sans';font-size:9px" fill="#444">Terms of Use</text><text x="1410" y="887.5" dominant-baseline="middle" style="font-family:'Liberation Sans';font-size:9px" fill="#444">Report a map error</text></svg></div>
</body></html>
